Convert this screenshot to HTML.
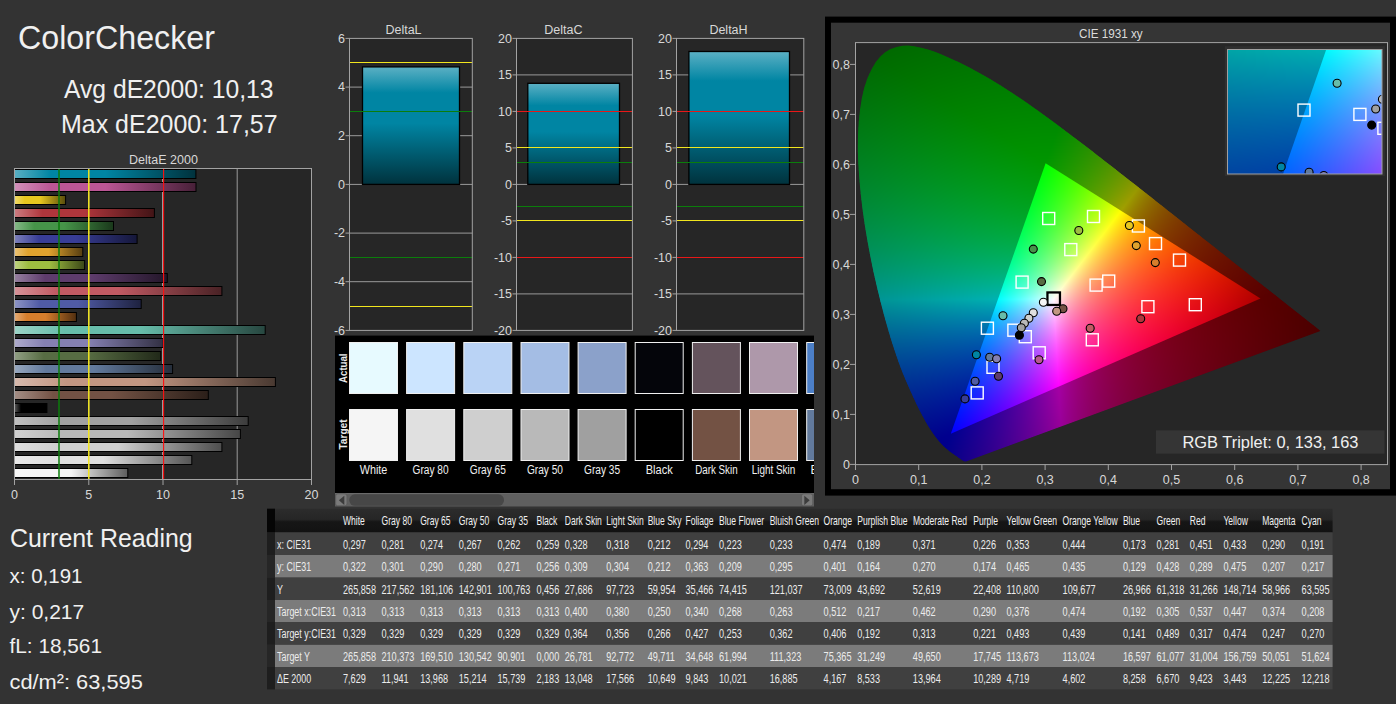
<!DOCTYPE html>
<html><head><meta charset="utf-8"><title>ColorChecker</title>
<style>
html,body{margin:0;padding:0;background:#333333;overflow:hidden;}
body{width:1396px;height:704px;position:relative;font-family:"Liberation Sans", sans-serif;}
svg{position:absolute;left:0;top:0;font-family:"Liberation Sans", sans-serif;}
canvas{position:absolute;}
</style></head><body>
<svg width="1396" height="704" viewBox="0 0 1396 704"><defs><linearGradient id="gb0" x1="0" x2="1" y1="0" y2="0"><stop offset="0" stop-color="#59afc3"/><stop offset="0.2" stop-color="#0085a3"/><stop offset="0.5" stop-color="#0085a3"/><stop offset="1" stop-color="#00323d"/></linearGradient><linearGradient id="gb1" x1="0" x2="1" y1="0" y2="0"><stop offset="0" stop-color="#d291ba"/><stop offset="0.2" stop-color="#bb5695"/><stop offset="0.5" stop-color="#bb5695"/><stop offset="1" stop-color="#472038"/></linearGradient><linearGradient id="gb2" x1="0" x2="1" y1="0" y2="0"><stop offset="0" stop-color="#efda6d"/><stop offset="0.2" stop-color="#e7c71f"/><stop offset="0.5" stop-color="#e7c71f"/><stop offset="1" stop-color="#574b0b"/></linearGradient><linearGradient id="gb3" x1="0" x2="1" y1="0" y2="0"><stop offset="0" stop-color="#cb7c80"/><stop offset="0.2" stop-color="#af363c"/><stop offset="0.5" stop-color="#af363c"/><stop offset="1" stop-color="#421416"/></linearGradient><linearGradient id="gb4" x1="0" x2="1" y1="0" y2="0"><stop offset="0" stop-color="#86b988"/><stop offset="0.2" stop-color="#469449"/><stop offset="0.5" stop-color="#469449"/><stop offset="1" stop-color="#1a381b"/></linearGradient><linearGradient id="gb5" x1="0" x2="1" y1="0" y2="0"><stop offset="0" stop-color="#7d80ba"/><stop offset="0.2" stop-color="#383d96"/><stop offset="0.5" stop-color="#383d96"/><stop offset="1" stop-color="#151739"/></linearGradient><linearGradient id="gb6" x1="0" x2="1" y1="0" y2="0"><stop offset="0" stop-color="#eac377"/><stop offset="0.2" stop-color="#e0a32e"/><stop offset="0.5" stop-color="#e0a32e"/><stop offset="1" stop-color="#553d11"/></linearGradient><linearGradient id="gb7" x1="0" x2="1" y1="0" y2="0"><stop offset="0" stop-color="#bfd382"/><stop offset="0.2" stop-color="#9dbc40"/><stop offset="0.5" stop-color="#9dbc40"/><stop offset="1" stop-color="#3b4718"/></linearGradient><linearGradient id="gb8" x1="0" x2="1" y1="0" y2="0"><stop offset="0" stop-color="#96809f"/><stop offset="0.2" stop-color="#5e3c6c"/><stop offset="0.5" stop-color="#5e3c6c"/><stop offset="1" stop-color="#231629"/></linearGradient><linearGradient id="gb9" x1="0" x2="1" y1="0" y2="0"><stop offset="0" stop-color="#d69399"/><stop offset="0.2" stop-color="#c15a63"/><stop offset="0.5" stop-color="#c15a63"/><stop offset="1" stop-color="#492225"/></linearGradient><linearGradient id="gb10" x1="0" x2="1" y1="0" y2="0"><stop offset="0" stop-color="#8d94c5"/><stop offset="0.2" stop-color="#505ba6"/><stop offset="0.5" stop-color="#505ba6"/><stop offset="1" stop-color="#1e223f"/></linearGradient><linearGradient id="gb11" x1="0" x2="1" y1="0" y2="0"><stop offset="0" stop-color="#e4ab75"/><stop offset="0.2" stop-color="#d67e2c"/><stop offset="0.5" stop-color="#d67e2c"/><stop offset="1" stop-color="#512f10"/></linearGradient><linearGradient id="gb12" x1="0" x2="1" y1="0" y2="0"><stop offset="0" stop-color="#9cd4c7"/><stop offset="0.2" stop-color="#67bdaa"/><stop offset="0.5" stop-color="#67bdaa"/><stop offset="1" stop-color="#274740"/></linearGradient><linearGradient id="gb13" x1="0" x2="1" y1="0" y2="0"><stop offset="0" stop-color="#afaccc"/><stop offset="0.2" stop-color="#8580b1"/><stop offset="0.5" stop-color="#8580b1"/><stop offset="1" stop-color="#323043"/></linearGradient><linearGradient id="gb14" x1="0" x2="1" y1="0" y2="0"><stop offset="0" stop-color="#919f84"/><stop offset="0.2" stop-color="#576c43"/><stop offset="0.5" stop-color="#576c43"/><stop offset="1" stop-color="#212919"/></linearGradient><linearGradient id="gb15" x1="0" x2="1" y1="0" y2="0"><stop offset="0" stop-color="#98a8bf"/><stop offset="0.2" stop-color="#627a9d"/><stop offset="0.5" stop-color="#627a9d"/><stop offset="1" stop-color="#252e3b"/></linearGradient><linearGradient id="gb16" x1="0" x2="1" y1="0" y2="0"><stop offset="0" stop-color="#d7baad"/><stop offset="0.2" stop-color="#c29682"/><stop offset="0.5" stop-color="#c29682"/><stop offset="1" stop-color="#493931"/></linearGradient><linearGradient id="gb17" x1="0" x2="1" y1="0" y2="0"><stop offset="0" stop-color="#a48e85"/><stop offset="0.2" stop-color="#735244"/><stop offset="0.5" stop-color="#735244"/><stop offset="1" stop-color="#2b1f19"/></linearGradient><linearGradient id="gb18" x1="0" x2="1" y1="0" y2="0"><stop offset="0" stop-color="#595959"/><stop offset="0.2" stop-color="#000000"/><stop offset="0.5" stop-color="#000000"/><stop offset="1" stop-color="#000000"/></linearGradient><linearGradient id="gb19" x1="0" x2="1" y1="0" y2="0"><stop offset="0" stop-color="#c1c1c1"/><stop offset="0.2" stop-color="#a0a0a0"/><stop offset="0.5" stop-color="#a0a0a0"/><stop offset="1" stop-color="#3c3c3c"/></linearGradient><linearGradient id="gb20" x1="0" x2="1" y1="0" y2="0"><stop offset="0" stop-color="#d1d1d1"/><stop offset="0.2" stop-color="#b9b9b9"/><stop offset="0.5" stop-color="#b9b9b9"/><stop offset="1" stop-color="#464646"/></linearGradient><linearGradient id="gb21" x1="0" x2="1" y1="0" y2="0"><stop offset="0" stop-color="#dfdfdf"/><stop offset="0.2" stop-color="#cfcfcf"/><stop offset="0.5" stop-color="#cfcfcf"/><stop offset="1" stop-color="#4e4e4e"/></linearGradient><linearGradient id="gb22" x1="0" x2="1" y1="0" y2="0"><stop offset="0" stop-color="#eaeaea"/><stop offset="0.2" stop-color="#e0e0e0"/><stop offset="0.5" stop-color="#e0e0e0"/><stop offset="1" stop-color="#555555"/></linearGradient><linearGradient id="gb23" x1="0" x2="1" y1="0" y2="0"><stop offset="0" stop-color="#f8f8f8"/><stop offset="0.2" stop-color="#f5f5f5"/><stop offset="0.5" stop-color="#f5f5f5"/><stop offset="1" stop-color="#5d5d5d"/></linearGradient><linearGradient id="gv" x1="0" x2="0" y1="0" y2="1"><stop offset="0" stop-color="#5bb0c4"/><stop offset="0.22" stop-color="#0085a3"/><stop offset="0.48" stop-color="#0085a3"/><stop offset="1" stop-color="#00323d"/></linearGradient><clipPath id="swclip"><rect x="335" y="335.6" width="479" height="158"/></clipPath><linearGradient id="gh" x1="0" x2="0" y1="0" y2="1"><stop offset="0" stop-color="#2c2c2c"/><stop offset="0.45" stop-color="#262626"/><stop offset="0.55" stop-color="#161616"/><stop offset="1" stop-color="#121212"/></linearGradient></defs>
<text x="18" y="49" font-size="33" textLength="197" lengthAdjust="spacingAndGlyphs" fill="#f0f0f0">ColorChecker</text>
<text x="64" y="97.8" font-size="25" textLength="209.5" lengthAdjust="spacingAndGlyphs" fill="#f0f0f0">Avg dE2000: 10,13</text>
<text x="61" y="132.8" font-size="25" textLength="216.6" lengthAdjust="spacingAndGlyphs" fill="#f0f0f0">Max dE2000: 17,57</text>
<text x="163.5" y="164" font-size="12.5" text-anchor="middle" fill="#d8d8d8">DeltaE 2000</text>
<rect x="14" y="168" width="298" height="311" fill="#262626"/>
<line x1="88.8" y1="168" x2="88.8" y2="479" stroke="#9a9a9a" stroke-width="1"/>
<line x1="162.5" y1="168" x2="162.5" y2="479" stroke="#9a9a9a" stroke-width="1"/>
<line x1="237.2" y1="168" x2="237.2" y2="479" stroke="#9a9a9a" stroke-width="1"/>
<rect x="14.5" y="169.5" width="181.4" height="9" fill="url(#gb0)" stroke="#000" stroke-width="1"/>
<rect x="14.5" y="182.5" width="181.5" height="9" fill="url(#gb1)" stroke="#000" stroke-width="1"/>
<rect x="14.5" y="195.5" width="51.1" height="9" fill="url(#gb2)" stroke="#000" stroke-width="1"/>
<rect x="14.5" y="208.5" width="139.9" height="9" fill="url(#gb3)" stroke="#000" stroke-width="1"/>
<rect x="14.5" y="221.5" width="99.0" height="9" fill="url(#gb4)" stroke="#000" stroke-width="1"/>
<rect x="14.5" y="234.5" width="122.6" height="9" fill="url(#gb5)" stroke="#000" stroke-width="1"/>
<rect x="14.5" y="247.5" width="68.3" height="9" fill="url(#gb6)" stroke="#000" stroke-width="1"/>
<rect x="14.5" y="260.5" width="70.1" height="9" fill="url(#gb7)" stroke="#000" stroke-width="1"/>
<rect x="14.5" y="273.5" width="152.8" height="9" fill="url(#gb8)" stroke="#000" stroke-width="1"/>
<rect x="14.5" y="286.5" width="207.4" height="9" fill="url(#gb9)" stroke="#000" stroke-width="1"/>
<rect x="14.5" y="299.5" width="126.7" height="9" fill="url(#gb10)" stroke="#000" stroke-width="1"/>
<rect x="14.5" y="312.5" width="61.9" height="9" fill="url(#gb11)" stroke="#000" stroke-width="1"/>
<rect x="14.5" y="325.5" width="250.7" height="9" fill="url(#gb12)" stroke="#000" stroke-width="1"/>
<rect x="14.5" y="338.5" width="148.8" height="9" fill="url(#gb13)" stroke="#000" stroke-width="1"/>
<rect x="14.5" y="351.5" width="146.2" height="9" fill="url(#gb14)" stroke="#000" stroke-width="1"/>
<rect x="14.5" y="364.5" width="158.1" height="9" fill="url(#gb15)" stroke="#000" stroke-width="1"/>
<rect x="14.5" y="377.5" width="260.9" height="9" fill="url(#gb16)" stroke="#000" stroke-width="1"/>
<rect x="14.5" y="390.5" width="193.8" height="9" fill="url(#gb17)" stroke="#000" stroke-width="1"/>
<rect x="14.5" y="403.5" width="32.4" height="9" fill="url(#gb18)" stroke="#000" stroke-width="1"/>
<rect x="14.5" y="416.5" width="233.7" height="9" fill="url(#gb19)" stroke="#000" stroke-width="1"/>
<rect x="14.5" y="429.5" width="225.9" height="9" fill="url(#gb20)" stroke="#000" stroke-width="1"/>
<rect x="14.5" y="442.5" width="207.4" height="9" fill="url(#gb21)" stroke="#000" stroke-width="1"/>
<rect x="14.5" y="455.5" width="177.3" height="9" fill="url(#gb22)" stroke="#000" stroke-width="1"/>
<rect x="14.5" y="468.5" width="113.3" height="9" fill="url(#gb23)" stroke="#000" stroke-width="1"/>
<line x1="59.0" y1="168" x2="59.0" y2="479" stroke="#0b7d0b" stroke-width="1.5"/>
<line x1="88.8" y1="168" x2="88.8" y2="479" stroke="#f2e61e" stroke-width="1.5"/>
<line x1="163.6" y1="168" x2="163.6" y2="479" stroke="#ff1010" stroke-width="1.1"/>
<rect x="14.5" y="168.5" width="297" height="311" fill="none" stroke="#a3a3a3" stroke-width="1"/>
<line x1="14.5" y1="479" x2="14.5" y2="485" stroke="#a3a3a3" stroke-width="1"/>
<text x="14.5" y="498.8" font-size="12.5" text-anchor="middle" fill="#d8d8d8">0</text>
<line x1="88.8" y1="479" x2="88.8" y2="485" stroke="#a3a3a3" stroke-width="1"/>
<text x="88.8" y="498.8" font-size="12.5" text-anchor="middle" fill="#d8d8d8">5</text>
<line x1="163.0" y1="479" x2="163.0" y2="485" stroke="#a3a3a3" stroke-width="1"/>
<text x="163.0" y="498.8" font-size="12.5" text-anchor="middle" fill="#d8d8d8">10</text>
<line x1="237.2" y1="479" x2="237.2" y2="485" stroke="#a3a3a3" stroke-width="1"/>
<text x="237.2" y="498.8" font-size="12.5" text-anchor="middle" fill="#d8d8d8">15</text>
<line x1="311.5" y1="479" x2="311.5" y2="485" stroke="#a3a3a3" stroke-width="1"/>
<text x="311.5" y="498.8" font-size="12.5" text-anchor="middle" fill="#d8d8d8">20</text>
<text x="403.5" y="34.2" font-size="12.5" text-anchor="middle" fill="#d8d8d8">DeltaL</text>
<rect x="349.5" y="38.4" width="122.8" height="292.0" fill="#262626"/>
<line x1="349.5" y1="135.7" x2="472.3" y2="135.7" stroke="#9a9a9a" stroke-width="1"/>
<line x1="349.5" y1="87.1" x2="472.3" y2="87.1" stroke="#9a9a9a" stroke-width="1"/>
<line x1="349.5" y1="184.4" x2="472.3" y2="184.4" stroke="#9a9a9a" stroke-width="1"/>
<line x1="349.5" y1="233.1" x2="472.3" y2="233.1" stroke="#9a9a9a" stroke-width="1"/>
<line x1="349.5" y1="281.7" x2="472.3" y2="281.7" stroke="#9a9a9a" stroke-width="1"/>
<rect x="362.5" y="66.9" width="97.0" height="117.5" fill="url(#gv)" stroke="#000" stroke-width="1.3"/>
<line x1="349.5" y1="62.5" x2="472.3" y2="62.5" stroke="#f2e61e" stroke-width="1.2"/>
<line x1="349.5" y1="306.5" x2="472.3" y2="306.5" stroke="#f2e61e" stroke-width="1.2"/>
<line x1="349.5" y1="111.5" x2="472.3" y2="111.5" stroke="#0b7d0b" stroke-width="1.2"/>
<line x1="349.5" y1="257.5" x2="472.3" y2="257.5" stroke="#0b7d0b" stroke-width="1.2"/>
<rect x="349.5" y="38.4" width="122.8" height="292.0" fill="none" stroke="#a3a3a3" stroke-width="1"/>
<line x1="345.5" y1="38.4" x2="349.5" y2="38.4" stroke="#a3a3a3" stroke-width="1"/>
<text x="345.0" y="42.7" font-size="12.5" text-anchor="end" fill="#d8d8d8">6</text>
<line x1="345.5" y1="87.1" x2="349.5" y2="87.1" stroke="#a3a3a3" stroke-width="1"/>
<text x="345.0" y="91.4" font-size="12.5" text-anchor="end" fill="#d8d8d8">4</text>
<line x1="345.5" y1="135.7" x2="349.5" y2="135.7" stroke="#a3a3a3" stroke-width="1"/>
<text x="345.0" y="140.0" font-size="12.5" text-anchor="end" fill="#d8d8d8">2</text>
<line x1="345.5" y1="184.4" x2="349.5" y2="184.4" stroke="#a3a3a3" stroke-width="1"/>
<text x="345.0" y="188.7" font-size="12.5" text-anchor="end" fill="#d8d8d8">0</text>
<line x1="345.5" y1="233.1" x2="349.5" y2="233.1" stroke="#a3a3a3" stroke-width="1"/>
<text x="345.0" y="237.4" font-size="12.5" text-anchor="end" fill="#d8d8d8">-2</text>
<line x1="345.5" y1="281.7" x2="349.5" y2="281.7" stroke="#a3a3a3" stroke-width="1"/>
<text x="345.0" y="286.0" font-size="12.5" text-anchor="end" fill="#d8d8d8">-4</text>
<line x1="345.5" y1="330.4" x2="349.5" y2="330.4" stroke="#a3a3a3" stroke-width="1"/>
<text x="345.0" y="334.7" font-size="12.5" text-anchor="end" fill="#d8d8d8">-6</text>
<text x="563.4" y="34.2" font-size="12.5" text-anchor="middle" fill="#d8d8d8">DeltaC</text>
<rect x="516.5" y="38.4" width="115.9" height="292.0" fill="#262626"/>
<line x1="516.5" y1="74.9" x2="632.4" y2="74.9" stroke="#9a9a9a" stroke-width="1"/>
<line x1="516.5" y1="184.4" x2="632.4" y2="184.4" stroke="#9a9a9a" stroke-width="1"/>
<line x1="516.5" y1="293.9" x2="632.4" y2="293.9" stroke="#9a9a9a" stroke-width="1"/>
<rect x="527.8" y="83.3" width="91.7" height="101.1" fill="url(#gv)" stroke="#000" stroke-width="1.3"/>
<line x1="516.5" y1="111.5" x2="632.4" y2="111.5" stroke="#e81818" stroke-width="1.2"/>
<line x1="516.5" y1="257.5" x2="632.4" y2="257.5" stroke="#e81818" stroke-width="1.2"/>
<line x1="516.5" y1="147.5" x2="632.4" y2="147.5" stroke="#f2e61e" stroke-width="1.2"/>
<line x1="516.5" y1="220.5" x2="632.4" y2="220.5" stroke="#f2e61e" stroke-width="1.2"/>
<line x1="516.5" y1="162.5" x2="632.4" y2="162.5" stroke="#0b7d0b" stroke-width="1.2"/>
<line x1="516.5" y1="206.5" x2="632.4" y2="206.5" stroke="#0b7d0b" stroke-width="1.2"/>
<rect x="516.5" y="38.4" width="115.9" height="292.0" fill="none" stroke="#a3a3a3" stroke-width="1"/>
<line x1="512.5" y1="38.4" x2="516.5" y2="38.4" stroke="#a3a3a3" stroke-width="1"/>
<text x="512.0" y="42.7" font-size="12.5" text-anchor="end" fill="#d8d8d8">20</text>
<line x1="512.5" y1="74.9" x2="516.5" y2="74.9" stroke="#a3a3a3" stroke-width="1"/>
<text x="512.0" y="79.2" font-size="12.5" text-anchor="end" fill="#d8d8d8">15</text>
<line x1="512.5" y1="111.4" x2="516.5" y2="111.4" stroke="#a3a3a3" stroke-width="1"/>
<text x="512.0" y="115.7" font-size="12.5" text-anchor="end" fill="#d8d8d8">10</text>
<line x1="512.5" y1="147.9" x2="516.5" y2="147.9" stroke="#a3a3a3" stroke-width="1"/>
<text x="512.0" y="152.2" font-size="12.5" text-anchor="end" fill="#d8d8d8">5</text>
<line x1="512.5" y1="184.4" x2="516.5" y2="184.4" stroke="#a3a3a3" stroke-width="1"/>
<text x="512.0" y="188.7" font-size="12.5" text-anchor="end" fill="#d8d8d8">0</text>
<line x1="512.5" y1="220.9" x2="516.5" y2="220.9" stroke="#a3a3a3" stroke-width="1"/>
<text x="512.0" y="225.2" font-size="12.5" text-anchor="end" fill="#d8d8d8">-5</text>
<line x1="512.5" y1="257.4" x2="516.5" y2="257.4" stroke="#a3a3a3" stroke-width="1"/>
<text x="512.0" y="261.7" font-size="12.5" text-anchor="end" fill="#d8d8d8">-10</text>
<line x1="512.5" y1="293.9" x2="516.5" y2="293.9" stroke="#a3a3a3" stroke-width="1"/>
<text x="512.0" y="298.2" font-size="12.5" text-anchor="end" fill="#d8d8d8">-15</text>
<line x1="512.5" y1="330.4" x2="516.5" y2="330.4" stroke="#a3a3a3" stroke-width="1"/>
<text x="512.0" y="334.7" font-size="12.5" text-anchor="end" fill="#d8d8d8">-20</text>
<text x="728.5" y="34.2" font-size="12.5" text-anchor="middle" fill="#d8d8d8">DeltaH</text>
<rect x="676.5" y="38.4" width="127.3" height="292.0" fill="#262626"/>
<line x1="676.5" y1="74.9" x2="803.8" y2="74.9" stroke="#9a9a9a" stroke-width="1"/>
<line x1="676.5" y1="184.4" x2="803.8" y2="184.4" stroke="#9a9a9a" stroke-width="1"/>
<line x1="676.5" y1="293.9" x2="803.8" y2="293.9" stroke="#9a9a9a" stroke-width="1"/>
<rect x="688.9" y="51.5" width="100.6" height="132.9" fill="url(#gv)" stroke="#000" stroke-width="1.3"/>
<line x1="676.5" y1="111.5" x2="803.8" y2="111.5" stroke="#e81818" stroke-width="1.2"/>
<line x1="676.5" y1="257.5" x2="803.8" y2="257.5" stroke="#e81818" stroke-width="1.2"/>
<line x1="676.5" y1="147.5" x2="803.8" y2="147.5" stroke="#f2e61e" stroke-width="1.2"/>
<line x1="676.5" y1="220.5" x2="803.8" y2="220.5" stroke="#f2e61e" stroke-width="1.2"/>
<line x1="676.5" y1="162.5" x2="803.8" y2="162.5" stroke="#0b7d0b" stroke-width="1.2"/>
<line x1="676.5" y1="206.5" x2="803.8" y2="206.5" stroke="#0b7d0b" stroke-width="1.2"/>
<rect x="676.5" y="38.4" width="127.3" height="292.0" fill="none" stroke="#a3a3a3" stroke-width="1"/>
<line x1="672.5" y1="38.4" x2="676.5" y2="38.4" stroke="#a3a3a3" stroke-width="1"/>
<text x="672.0" y="42.7" font-size="12.5" text-anchor="end" fill="#d8d8d8">20</text>
<line x1="672.5" y1="74.9" x2="676.5" y2="74.9" stroke="#a3a3a3" stroke-width="1"/>
<text x="672.0" y="79.2" font-size="12.5" text-anchor="end" fill="#d8d8d8">15</text>
<line x1="672.5" y1="111.4" x2="676.5" y2="111.4" stroke="#a3a3a3" stroke-width="1"/>
<text x="672.0" y="115.7" font-size="12.5" text-anchor="end" fill="#d8d8d8">10</text>
<line x1="672.5" y1="147.9" x2="676.5" y2="147.9" stroke="#a3a3a3" stroke-width="1"/>
<text x="672.0" y="152.2" font-size="12.5" text-anchor="end" fill="#d8d8d8">5</text>
<line x1="672.5" y1="184.4" x2="676.5" y2="184.4" stroke="#a3a3a3" stroke-width="1"/>
<text x="672.0" y="188.7" font-size="12.5" text-anchor="end" fill="#d8d8d8">0</text>
<line x1="672.5" y1="220.9" x2="676.5" y2="220.9" stroke="#a3a3a3" stroke-width="1"/>
<text x="672.0" y="225.2" font-size="12.5" text-anchor="end" fill="#d8d8d8">-5</text>
<line x1="672.5" y1="257.4" x2="676.5" y2="257.4" stroke="#a3a3a3" stroke-width="1"/>
<text x="672.0" y="261.7" font-size="12.5" text-anchor="end" fill="#d8d8d8">-10</text>
<line x1="672.5" y1="293.9" x2="676.5" y2="293.9" stroke="#a3a3a3" stroke-width="1"/>
<text x="672.0" y="298.2" font-size="12.5" text-anchor="end" fill="#d8d8d8">-15</text>
<line x1="672.5" y1="330.4" x2="676.5" y2="330.4" stroke="#a3a3a3" stroke-width="1"/>
<text x="672.0" y="334.7" font-size="12.5" text-anchor="end" fill="#d8d8d8">-20</text>
<rect x="335" y="335.6" width="479" height="158" fill="#000"/>
<text transform="translate(346.6,368.2) rotate(-90)" font-size="10.5" font-weight="bold" text-anchor="middle" fill="#e8e8e8" textLength="29.5" lengthAdjust="spacingAndGlyphs">Actual</text>
<text transform="translate(346.6,434.5) rotate(-90)" font-size="10.5" font-weight="bold" text-anchor="middle" fill="#e8e8e8" textLength="30.2" lengthAdjust="spacingAndGlyphs">Target</text>
<g clip-path="url(#swclip)">
<rect x="349.5" y="342.5" width="48.0" height="51" fill="#e7faff" stroke="#f0f0f0" stroke-width="1"/>
<rect x="349.5" y="409.5" width="48.0" height="51" fill="#f5f5f5" stroke="#f0f0f0" stroke-width="1"/>
<text x="373.5" y="474" font-size="12" text-anchor="middle" fill="#f0f0f0" textLength="27.6" lengthAdjust="spacingAndGlyphs">White</text>
<rect x="406.6" y="342.5" width="48.0" height="51" fill="#cce5ff" stroke="#f0f0f0" stroke-width="1"/>
<rect x="406.6" y="409.5" width="48.0" height="51" fill="#e0e0e0" stroke="#f0f0f0" stroke-width="1"/>
<text x="430.6" y="474" font-size="12" text-anchor="middle" fill="#f0f0f0" textLength="36" lengthAdjust="spacingAndGlyphs">Gray 80</text>
<rect x="463.8" y="342.5" width="48.0" height="51" fill="#bad3f5" stroke="#f0f0f0" stroke-width="1"/>
<rect x="463.8" y="409.5" width="48.0" height="51" fill="#cfcfcf" stroke="#f0f0f0" stroke-width="1"/>
<text x="487.8" y="474" font-size="12" text-anchor="middle" fill="#f0f0f0" textLength="36" lengthAdjust="spacingAndGlyphs">Gray 65</text>
<rect x="521.0" y="342.5" width="48.0" height="51" fill="#a4bde4" stroke="#f0f0f0" stroke-width="1"/>
<rect x="521.0" y="409.5" width="48.0" height="51" fill="#b9b9b9" stroke="#f0f0f0" stroke-width="1"/>
<text x="545.0" y="474" font-size="12" text-anchor="middle" fill="#f0f0f0" textLength="36" lengthAdjust="spacingAndGlyphs">Gray 50</text>
<rect x="578.1" y="342.5" width="48.0" height="51" fill="#8ba1ca" stroke="#f0f0f0" stroke-width="1"/>
<rect x="578.1" y="409.5" width="48.0" height="51" fill="#a0a0a0" stroke="#f0f0f0" stroke-width="1"/>
<text x="602.1" y="474" font-size="12" text-anchor="middle" fill="#f0f0f0" textLength="36" lengthAdjust="spacingAndGlyphs">Gray 35</text>
<rect x="635.2" y="342.5" width="48.0" height="51" fill="#04050a" stroke="#f0f0f0" stroke-width="1"/>
<rect x="635.2" y="409.5" width="48.0" height="51" fill="#000000" stroke="#f0f0f0" stroke-width="1"/>
<text x="659.2" y="474" font-size="12" text-anchor="middle" fill="#f0f0f0" textLength="27" lengthAdjust="spacingAndGlyphs">Black</text>
<rect x="692.4" y="342.5" width="48.0" height="51" fill="#64535c" stroke="#f0f0f0" stroke-width="1"/>
<rect x="692.4" y="409.5" width="48.0" height="51" fill="#735244" stroke="#f0f0f0" stroke-width="1"/>
<text x="716.4" y="474" font-size="12" text-anchor="middle" fill="#f0f0f0" textLength="42.4" lengthAdjust="spacingAndGlyphs">Dark Skin</text>
<rect x="749.5" y="342.5" width="48.0" height="51" fill="#ae98aa" stroke="#f0f0f0" stroke-width="1"/>
<rect x="749.5" y="409.5" width="48.0" height="51" fill="#c29682" stroke="#f0f0f0" stroke-width="1"/>
<text x="773.5" y="474" font-size="12" text-anchor="middle" fill="#f0f0f0" textLength="43.7" lengthAdjust="spacingAndGlyphs">Light Skin</text>
<rect x="806.7" y="342.5" width="48.0" height="51" fill="#4c7fc7" stroke="#f0f0f0" stroke-width="1"/>
<rect x="806.7" y="409.5" width="48.0" height="51" fill="#627a9d" stroke="#f0f0f0" stroke-width="1"/>
<text x="810.5" y="474" font-size="12" fill="#f0f0f0">B</text>
</g>
<rect x="335" y="493" width="479" height="13.5" fill="#5f5f5f"/>
<rect x="335" y="493" width="479" height="1" fill="#6a6a6a"/>
<rect x="349.3" y="494.3" width="154.7" height="11.5" rx="5.5" fill="#474747"/>
<rect x="335.7" y="493.9" width="11.2" height="11.9" rx="2" fill="#7a7a7a" stroke="#555" stroke-width="0.6"/>
<path d="M338.9 500.3 L344.3 495.7 L344.3 505 Z" fill="#3c3c3c"/>
<rect x="801.5" y="493.9" width="11.2" height="11.9" rx="2" fill="#7a7a7a" stroke="#555" stroke-width="0.6"/>
<path d="M809.7 500.3 L804.3 495.7 L804.3 505 Z" fill="#3c3c3c"/>
<rect x="825" y="16.6" width="571" height="479" fill="#000"/>
<rect x="831" y="22.7" width="559" height="466.5" fill="#353535"/>
<rect x="855.5" y="42.6" width="532" height="422" fill="#262626"/>
<text x="1110.8" y="37.7" font-size="12.3" text-anchor="middle" fill="#dcdcdc" textLength="63.7" lengthAdjust="spacingAndGlyphs">CIE 1931 xy</text>
<line x1="855.5" y1="464.5" x2="855.5" y2="470" stroke="#a3a3a3" stroke-width="1"/>
<text x="855.5" y="484.3" font-size="12.5" text-anchor="middle" fill="#d8d8d8">0</text>
<line x1="850" y1="464.4" x2="855.5" y2="464.4" stroke="#a3a3a3" stroke-width="1"/>
<text x="850" y="468.7" font-size="12.5" text-anchor="end" fill="#d8d8d8">0</text>
<line x1="918.7" y1="464.5" x2="918.7" y2="470" stroke="#a3a3a3" stroke-width="1"/>
<text x="918.7" y="484.3" font-size="12.5" text-anchor="middle" fill="#d8d8d8">0,1</text>
<line x1="850" y1="414.4" x2="855.5" y2="414.4" stroke="#a3a3a3" stroke-width="1"/>
<text x="850" y="418.7" font-size="12.5" text-anchor="end" fill="#d8d8d8">0,1</text>
<line x1="981.9" y1="464.5" x2="981.9" y2="470" stroke="#a3a3a3" stroke-width="1"/>
<text x="981.9" y="484.3" font-size="12.5" text-anchor="middle" fill="#d8d8d8">0,2</text>
<line x1="850" y1="364.4" x2="855.5" y2="364.4" stroke="#a3a3a3" stroke-width="1"/>
<text x="850" y="368.7" font-size="12.5" text-anchor="end" fill="#d8d8d8">0,2</text>
<line x1="1045.1" y1="464.5" x2="1045.1" y2="470" stroke="#a3a3a3" stroke-width="1"/>
<text x="1045.1" y="484.3" font-size="12.5" text-anchor="middle" fill="#d8d8d8">0,3</text>
<line x1="850" y1="314.4" x2="855.5" y2="314.4" stroke="#a3a3a3" stroke-width="1"/>
<text x="850" y="318.7" font-size="12.5" text-anchor="end" fill="#d8d8d8">0,3</text>
<line x1="1108.3" y1="464.5" x2="1108.3" y2="470" stroke="#a3a3a3" stroke-width="1"/>
<text x="1108.3" y="484.3" font-size="12.5" text-anchor="middle" fill="#d8d8d8">0,4</text>
<line x1="850" y1="264.4" x2="855.5" y2="264.4" stroke="#a3a3a3" stroke-width="1"/>
<text x="850" y="268.7" font-size="12.5" text-anchor="end" fill="#d8d8d8">0,4</text>
<line x1="1171.5" y1="464.5" x2="1171.5" y2="470" stroke="#a3a3a3" stroke-width="1"/>
<text x="1171.5" y="484.3" font-size="12.5" text-anchor="middle" fill="#d8d8d8">0,5</text>
<line x1="850" y1="214.4" x2="855.5" y2="214.4" stroke="#a3a3a3" stroke-width="1"/>
<text x="850" y="218.7" font-size="12.5" text-anchor="end" fill="#d8d8d8">0,5</text>
<line x1="1234.7" y1="464.5" x2="1234.7" y2="470" stroke="#a3a3a3" stroke-width="1"/>
<text x="1234.7" y="484.3" font-size="12.5" text-anchor="middle" fill="#d8d8d8">0,6</text>
<line x1="850" y1="164.4" x2="855.5" y2="164.4" stroke="#a3a3a3" stroke-width="1"/>
<text x="850" y="168.7" font-size="12.5" text-anchor="end" fill="#d8d8d8">0,6</text>
<line x1="1297.9" y1="464.5" x2="1297.9" y2="470" stroke="#a3a3a3" stroke-width="1"/>
<text x="1297.9" y="484.3" font-size="12.5" text-anchor="middle" fill="#d8d8d8">0,7</text>
<line x1="850" y1="114.4" x2="855.5" y2="114.4" stroke="#a3a3a3" stroke-width="1"/>
<text x="850" y="118.7" font-size="12.5" text-anchor="end" fill="#d8d8d8">0,7</text>
<line x1="1361.1" y1="464.5" x2="1361.1" y2="470" stroke="#a3a3a3" stroke-width="1"/>
<text x="1361.1" y="484.3" font-size="12.5" text-anchor="middle" fill="#d8d8d8">0,8</text>
<line x1="850" y1="64.4" x2="855.5" y2="64.4" stroke="#a3a3a3" stroke-width="1"/>
<text x="850" y="68.7" font-size="12.5" text-anchor="end" fill="#d8d8d8">0,8</text>
<text x="10" y="547" font-size="25" textLength="182.7" lengthAdjust="spacingAndGlyphs" fill="#f0f0f0">Current Reading</text>
<text x="9.5" y="582.5" font-size="21" textLength="73" lengthAdjust="spacingAndGlyphs" fill="#f0f0f0">x: 0,191</text>
<text x="9.5" y="618.5" font-size="21" textLength="74.7" lengthAdjust="spacingAndGlyphs" fill="#f0f0f0">y: 0,217</text>
<text x="9.5" y="653.4" font-size="21" textLength="92.5" lengthAdjust="spacingAndGlyphs" fill="#f0f0f0">fL: 18,561</text>
<text x="9.5" y="688.7" font-size="21" textLength="133.3" lengthAdjust="spacingAndGlyphs" fill="#f0f0f0">cd/m²: 63,595</text>
<rect x="267" y="508.7" width="1065.6" height="23.7" fill="url(#gh)"/>
<rect x="267" y="508.7" width="8" height="23.7" fill="#050505"/>
<rect x="275" y="532.4" width="1057.6" height="22.6" fill="#404040"/>
<rect x="267" y="532.4" width="8" height="22.6" fill="#1e1e1e"/>
<rect x="275" y="555" width="1057.6" height="22.6" fill="#7b7b7b"/>
<rect x="267" y="555" width="8" height="22.6" fill="#262626"/>
<rect x="275" y="577.6" width="1057.6" height="22.4" fill="#404040"/>
<rect x="267" y="577.6" width="8" height="22.4" fill="#1e1e1e"/>
<rect x="275" y="600" width="1057.6" height="22.0" fill="#7b7b7b"/>
<rect x="267" y="600" width="8" height="22.0" fill="#262626"/>
<rect x="275" y="622" width="1057.6" height="22.8" fill="#404040"/>
<rect x="267" y="622" width="8" height="22.8" fill="#1e1e1e"/>
<rect x="275" y="644.8" width="1057.6" height="22.2" fill="#7b7b7b"/>
<rect x="267" y="644.8" width="8" height="22.2" fill="#262626"/>
<rect x="275" y="667" width="1057.6" height="22.4" fill="#404040"/>
<rect x="267" y="667" width="8" height="22.4" fill="#1e1e1e"/>
<g transform="scale(0.685,1)" font-size="12.5">
<text x="500.7" y="525" fill="#f2f2f2">White</text>
<text x="556.9" y="525" fill="#f2f2f2">Gray 80</text>
<text x="613.4" y="525" fill="#f2f2f2">Gray 65</text>
<text x="669.8" y="525" fill="#f2f2f2">Gray 50</text>
<text x="726.3" y="525" fill="#f2f2f2">Gray 35</text>
<text x="783.1" y="525" fill="#f2f2f2">Black</text>
<text x="824.5" y="525" fill="#f2f2f2">Dark Skin</text>
<text x="885.0" y="525" fill="#f2f2f2">Light Skin</text>
<text x="945.5" y="525" fill="#f2f2f2">Blue Sky</text>
<text x="1000.7" y="525" fill="#f2f2f2">Foliage</text>
<text x="1049.6" y="525" fill="#f2f2f2">Blue Flower</text>
<text x="1123.6" y="525" fill="#f2f2f2">Bluish Green</text>
<text x="1202.3" y="525" fill="#f2f2f2">Orange</text>
<text x="1251.4" y="525" fill="#f2f2f2">Purplish Blue</text>
<text x="1332.7" y="525" fill="#f2f2f2">Moderate Red</text>
<text x="1420.7" y="525" fill="#f2f2f2">Purple</text>
<text x="1469.3" y="525" fill="#f2f2f2">Yellow Green</text>
<text x="1551.2" y="525" fill="#f2f2f2">Orange Yellow</text>
<text x="1639.3" y="525" fill="#f2f2f2">Blue</text>
<text x="1688.3" y="525" fill="#f2f2f2">Green</text>
<text x="1736.9" y="525" fill="#f2f2f2">Red</text>
<text x="1786.0" y="525" fill="#f2f2f2">Yellow</text>
<text x="1842.6" y="525" fill="#f2f2f2">Magenta</text>
<text x="1900.1" y="525" fill="#f2f2f2">Cyan</text>
</g><g transform="scale(0.662,1)" font-size="13.5">
<text x="418.4" y="548.6" fill="#ececec">x: CIE31</text>
<text x="418.4" y="571.2" fill="#ececec">y: CIE31</text>
<text x="418.4" y="593.7" fill="#ececec">Y</text>
<text x="418.4" y="615.9" fill="#ececec">Target x:CIE31</text>
<text x="418.4" y="638.3" fill="#ececec">Target y:CIE31</text>
<text x="418.4" y="660.8" fill="#ececec">Target Y</text>
<text x="418.4" y="683.1" fill="#ececec">ΔE 2000</text>
</g><g transform="scale(0.676,1)" font-size="13.5">
<text x="507.4" y="548.6" fill="#ececec">0,297</text>
<text x="564.3" y="548.6" fill="#ececec">0,281</text>
<text x="621.6" y="548.6" fill="#ececec">0,274</text>
<text x="678.7" y="548.6" fill="#ececec">0,267</text>
<text x="735.9" y="548.6" fill="#ececec">0,262</text>
<text x="793.5" y="548.6" fill="#ececec">0,259</text>
<text x="835.5" y="548.6" fill="#ececec">0,328</text>
<text x="896.7" y="548.6" fill="#ececec">0,318</text>
<text x="958.1" y="548.6" fill="#ececec">0,212</text>
<text x="1014.1" y="548.6" fill="#ececec">0,294</text>
<text x="1063.6" y="548.6" fill="#ececec">0,223</text>
<text x="1138.6" y="548.6" fill="#ececec">0,233</text>
<text x="1218.3" y="548.6" fill="#ececec">0,474</text>
<text x="1268.0" y="548.6" fill="#ececec">0,189</text>
<text x="1350.4" y="548.6" fill="#ececec">0,371</text>
<text x="1439.6" y="548.6" fill="#ececec">0,226</text>
<text x="1488.9" y="548.6" fill="#ececec">0,353</text>
<text x="1571.9" y="548.6" fill="#ececec">0,444</text>
<text x="1661.1" y="548.6" fill="#ececec">0,173</text>
<text x="1710.8" y="548.6" fill="#ececec">0,281</text>
<text x="1760.1" y="548.6" fill="#ececec">0,451</text>
<text x="1809.8" y="548.6" fill="#ececec">0,433</text>
<text x="1867.2" y="548.6" fill="#ececec">0,290</text>
<text x="1925.4" y="548.6" fill="#ececec">0,191</text>
<text x="507.4" y="571.2" fill="#ececec">0,322</text>
<text x="564.3" y="571.2" fill="#ececec">0,301</text>
<text x="621.6" y="571.2" fill="#ececec">0,290</text>
<text x="678.7" y="571.2" fill="#ececec">0,280</text>
<text x="735.9" y="571.2" fill="#ececec">0,271</text>
<text x="793.5" y="571.2" fill="#ececec">0,256</text>
<text x="835.5" y="571.2" fill="#ececec">0,309</text>
<text x="896.7" y="571.2" fill="#ececec">0,304</text>
<text x="958.1" y="571.2" fill="#ececec">0,212</text>
<text x="1014.1" y="571.2" fill="#ececec">0,363</text>
<text x="1063.6" y="571.2" fill="#ececec">0,209</text>
<text x="1138.6" y="571.2" fill="#ececec">0,295</text>
<text x="1218.3" y="571.2" fill="#ececec">0,401</text>
<text x="1268.0" y="571.2" fill="#ececec">0,164</text>
<text x="1350.4" y="571.2" fill="#ececec">0,270</text>
<text x="1439.6" y="571.2" fill="#ececec">0,174</text>
<text x="1488.9" y="571.2" fill="#ececec">0,465</text>
<text x="1571.9" y="571.2" fill="#ececec">0,435</text>
<text x="1661.1" y="571.2" fill="#ececec">0,129</text>
<text x="1710.8" y="571.2" fill="#ececec">0,428</text>
<text x="1760.1" y="571.2" fill="#ececec">0,289</text>
<text x="1809.8" y="571.2" fill="#ececec">0,475</text>
<text x="1867.2" y="571.2" fill="#ececec">0,207</text>
<text x="1925.4" y="571.2" fill="#ececec">0,217</text>
<text x="507.4" y="593.7" fill="#ececec">265,858</text>
<text x="564.3" y="593.7" fill="#ececec">217,562</text>
<text x="621.6" y="593.7" fill="#ececec">181,106</text>
<text x="678.7" y="593.7" fill="#ececec">142,901</text>
<text x="735.9" y="593.7" fill="#ececec">100,763</text>
<text x="793.5" y="593.7" fill="#ececec">0,456</text>
<text x="835.5" y="593.7" fill="#ececec">27,686</text>
<text x="896.7" y="593.7" fill="#ececec">97,723</text>
<text x="958.1" y="593.7" fill="#ececec">59,954</text>
<text x="1014.1" y="593.7" fill="#ececec">35,466</text>
<text x="1063.6" y="593.7" fill="#ececec">74,415</text>
<text x="1138.6" y="593.7" fill="#ececec">121,037</text>
<text x="1218.3" y="593.7" fill="#ececec">73,009</text>
<text x="1268.0" y="593.7" fill="#ececec">43,692</text>
<text x="1350.4" y="593.7" fill="#ececec">52,619</text>
<text x="1439.6" y="593.7" fill="#ececec">22,408</text>
<text x="1488.9" y="593.7" fill="#ececec">110,800</text>
<text x="1571.9" y="593.7" fill="#ececec">109,677</text>
<text x="1661.1" y="593.7" fill="#ececec">26,966</text>
<text x="1710.8" y="593.7" fill="#ececec">61,318</text>
<text x="1760.1" y="593.7" fill="#ececec">31,266</text>
<text x="1809.8" y="593.7" fill="#ececec">148,714</text>
<text x="1867.2" y="593.7" fill="#ececec">58,966</text>
<text x="1925.4" y="593.7" fill="#ececec">63,595</text>
<text x="507.4" y="615.9" fill="#ececec">0,313</text>
<text x="564.3" y="615.9" fill="#ececec">0,313</text>
<text x="621.6" y="615.9" fill="#ececec">0,313</text>
<text x="678.7" y="615.9" fill="#ececec">0,313</text>
<text x="735.9" y="615.9" fill="#ececec">0,313</text>
<text x="793.5" y="615.9" fill="#ececec">0,313</text>
<text x="835.5" y="615.9" fill="#ececec">0,400</text>
<text x="896.7" y="615.9" fill="#ececec">0,380</text>
<text x="958.1" y="615.9" fill="#ececec">0,250</text>
<text x="1014.1" y="615.9" fill="#ececec">0,340</text>
<text x="1063.6" y="615.9" fill="#ececec">0,268</text>
<text x="1138.6" y="615.9" fill="#ececec">0,263</text>
<text x="1218.3" y="615.9" fill="#ececec">0,512</text>
<text x="1268.0" y="615.9" fill="#ececec">0,217</text>
<text x="1350.4" y="615.9" fill="#ececec">0,462</text>
<text x="1439.6" y="615.9" fill="#ececec">0,290</text>
<text x="1488.9" y="615.9" fill="#ececec">0,376</text>
<text x="1571.9" y="615.9" fill="#ececec">0,474</text>
<text x="1661.1" y="615.9" fill="#ececec">0,192</text>
<text x="1710.8" y="615.9" fill="#ececec">0,305</text>
<text x="1760.1" y="615.9" fill="#ececec">0,537</text>
<text x="1809.8" y="615.9" fill="#ececec">0,447</text>
<text x="1867.2" y="615.9" fill="#ececec">0,374</text>
<text x="1925.4" y="615.9" fill="#ececec">0,208</text>
<text x="507.4" y="638.3" fill="#ececec">0,329</text>
<text x="564.3" y="638.3" fill="#ececec">0,329</text>
<text x="621.6" y="638.3" fill="#ececec">0,329</text>
<text x="678.7" y="638.3" fill="#ececec">0,329</text>
<text x="735.9" y="638.3" fill="#ececec">0,329</text>
<text x="793.5" y="638.3" fill="#ececec">0,329</text>
<text x="835.5" y="638.3" fill="#ececec">0,364</text>
<text x="896.7" y="638.3" fill="#ececec">0,356</text>
<text x="958.1" y="638.3" fill="#ececec">0,266</text>
<text x="1014.1" y="638.3" fill="#ececec">0,427</text>
<text x="1063.6" y="638.3" fill="#ececec">0,253</text>
<text x="1138.6" y="638.3" fill="#ececec">0,362</text>
<text x="1218.3" y="638.3" fill="#ececec">0,406</text>
<text x="1268.0" y="638.3" fill="#ececec">0,192</text>
<text x="1350.4" y="638.3" fill="#ececec">0,313</text>
<text x="1439.6" y="638.3" fill="#ececec">0,221</text>
<text x="1488.9" y="638.3" fill="#ececec">0,493</text>
<text x="1571.9" y="638.3" fill="#ececec">0,439</text>
<text x="1661.1" y="638.3" fill="#ececec">0,141</text>
<text x="1710.8" y="638.3" fill="#ececec">0,489</text>
<text x="1760.1" y="638.3" fill="#ececec">0,317</text>
<text x="1809.8" y="638.3" fill="#ececec">0,474</text>
<text x="1867.2" y="638.3" fill="#ececec">0,247</text>
<text x="1925.4" y="638.3" fill="#ececec">0,270</text>
<text x="507.4" y="660.8" fill="#ececec">265,858</text>
<text x="564.3" y="660.8" fill="#ececec">210,373</text>
<text x="621.6" y="660.8" fill="#ececec">169,510</text>
<text x="678.7" y="660.8" fill="#ececec">130,542</text>
<text x="735.9" y="660.8" fill="#ececec">90,901</text>
<text x="793.5" y="660.8" fill="#ececec">0,000</text>
<text x="835.5" y="660.8" fill="#ececec">26,781</text>
<text x="896.7" y="660.8" fill="#ececec">92,772</text>
<text x="958.1" y="660.8" fill="#ececec">49,711</text>
<text x="1014.1" y="660.8" fill="#ececec">34,648</text>
<text x="1063.6" y="660.8" fill="#ececec">61,994</text>
<text x="1138.6" y="660.8" fill="#ececec">111,323</text>
<text x="1218.3" y="660.8" fill="#ececec">75,365</text>
<text x="1268.0" y="660.8" fill="#ececec">31,249</text>
<text x="1350.4" y="660.8" fill="#ececec">49,650</text>
<text x="1439.6" y="660.8" fill="#ececec">17,745</text>
<text x="1488.9" y="660.8" fill="#ececec">113,673</text>
<text x="1571.9" y="660.8" fill="#ececec">113,024</text>
<text x="1661.1" y="660.8" fill="#ececec">16,597</text>
<text x="1710.8" y="660.8" fill="#ececec">61,077</text>
<text x="1760.1" y="660.8" fill="#ececec">31,004</text>
<text x="1809.8" y="660.8" fill="#ececec">156,759</text>
<text x="1867.2" y="660.8" fill="#ececec">50,051</text>
<text x="1925.4" y="660.8" fill="#ececec">51,624</text>
<text x="507.4" y="683.1" fill="#ececec">7,629</text>
<text x="564.3" y="683.1" fill="#ececec">11,941</text>
<text x="621.6" y="683.1" fill="#ececec">13,968</text>
<text x="678.7" y="683.1" fill="#ececec">15,214</text>
<text x="735.9" y="683.1" fill="#ececec">15,739</text>
<text x="793.5" y="683.1" fill="#ececec">2,183</text>
<text x="835.5" y="683.1" fill="#ececec">13,048</text>
<text x="896.7" y="683.1" fill="#ececec">17,566</text>
<text x="958.1" y="683.1" fill="#ececec">10,649</text>
<text x="1014.1" y="683.1" fill="#ececec">9,843</text>
<text x="1063.6" y="683.1" fill="#ececec">10,021</text>
<text x="1138.6" y="683.1" fill="#ececec">16,885</text>
<text x="1218.3" y="683.1" fill="#ececec">4,167</text>
<text x="1268.0" y="683.1" fill="#ececec">8,533</text>
<text x="1350.4" y="683.1" fill="#ececec">13,964</text>
<text x="1439.6" y="683.1" fill="#ececec">10,289</text>
<text x="1488.9" y="683.1" fill="#ececec">4,719</text>
<text x="1571.9" y="683.1" fill="#ececec">4,602</text>
<text x="1661.1" y="683.1" fill="#ececec">8,258</text>
<text x="1710.8" y="683.1" fill="#ececec">6,670</text>
<text x="1760.1" y="683.1" fill="#ececec">9,423</text>
<text x="1809.8" y="683.1" fill="#ececec">3,443</text>
<text x="1867.2" y="683.1" fill="#ececec">12,225</text>
<text x="1925.4" y="683.1" fill="#ececec">12,218</text>
</g>
</svg>
<svg width="1396" height="704" viewBox="0 0 1396 704"><defs><clipPath id="fbhs"><path d="M965.5 461.0 L965.5 461.0 L965.5 461.0 L965.5 461.0 L965.5 461.0 L965.4 461.0 L965.4 461.0 L965.4 461.0 L965.3 461.0 L965.3 461.0 L965.3 461.0 L965.3 461.0 L965.2 461.0 L965.2 461.1 L965.1 461.1 L965.1 461.1 L965.0 461.1 L965.0 461.1 L964.9 461.1 L964.9 461.1 L964.8 461.1 L964.8 461.1 L964.7 461.1 L964.7 461.1 L964.6 461.1 L964.5 461.1 L964.4 461.1 L964.4 461.1 L964.3 461.1 L964.2 461.1 L964.1 461.0 L964.0 461.0 L963.8 460.9 L963.7 460.9 L963.5 460.8 L963.3 460.7 L963.1 460.6 L962.9 460.5 L962.7 460.3 L962.5 460.2 L962.2 460.0 L962.0 459.9 L961.7 459.7 L961.3 459.4 L961.0 459.2 L960.6 458.9 L960.2 458.7 L959.8 458.4 L959.4 458.0 L958.9 457.7 L958.4 457.4 L957.9 457.0 L957.3 456.6 L956.7 456.1 L956.0 455.7 L955.2 455.2 L954.5 454.6 L953.7 454.1 L952.8 453.5 L951.9 452.8 L950.9 452.1 L949.9 451.4 L948.8 450.5 L947.7 449.6 L946.5 448.6 L945.3 447.5 L944.0 446.4 L942.6 445.1 L941.1 443.5 L939.5 441.7 L937.8 439.6 L935.9 437.3 L933.9 434.5 L931.8 431.5 L929.6 428.2 L927.3 424.4 L924.8 420.0 L922.1 415.1 L919.3 409.7 L916.3 403.7 L913.2 397.0 L909.8 389.6 L906.3 381.5 L902.6 372.7 L898.9 362.9 L895.2 352.3 L891.5 340.9 L887.8 328.6 L884.2 315.7 L880.6 301.9 L877.0 287.2 L873.5 272.0 L870.4 256.7 L867.5 241.2 L864.8 225.2 L862.5 209.3 L860.7 193.8 L859.3 178.6 L858.3 163.7 L857.8 149.2 L858.0 135.4 L858.7 122.4 L860.0 109.8 L861.8 98.2 L864.3 87.6 L867.4 78.3 L871.2 69.9 L875.5 62.6 L880.1 56.7 L885.1 52.2 L890.7 49.1 L896.5 47.0 L902.5 45.8 L908.6 45.5 L914.9 46.4 L921.3 47.8 L927.7 49.6 L934.1 51.6 L940.5 54.1 L947.0 56.9 L953.3 59.7 L959.4 62.6 L965.5 65.6 L971.5 68.7 L977.4 71.9 L983.3 75.2 L989.1 78.6 L994.9 82.0 L1000.6 85.6 L1006.4 89.2 L1012.1 93.0 L1017.8 96.8 L1023.5 100.6 L1029.2 104.5 L1034.8 108.5 L1040.5 112.6 L1046.1 116.7 L1051.8 120.8 L1057.4 124.9 L1063.0 129.2 L1068.7 133.4 L1074.3 137.7 L1080.0 142.0 L1085.7 146.3 L1091.3 150.6 L1096.9 155.0 L1102.6 159.4 L1108.2 163.7 L1113.8 168.1 L1119.4 172.5 L1125.0 176.9 L1130.6 181.2 L1136.2 185.6 L1141.7 189.9 L1147.2 194.3 L1152.7 198.6 L1158.1 202.9 L1163.5 207.1 L1168.8 211.4 L1174.2 215.6 L1179.4 219.7 L1184.6 223.8 L1189.7 227.9 L1194.8 231.9 L1199.8 235.8 L1204.7 239.7 L1209.6 243.6 L1214.4 247.3 L1219.0 251.0 L1223.6 254.6 L1228.0 258.1 L1232.4 261.5 L1236.5 264.9 L1240.5 268.0 L1244.4 271.1 L1248.1 274.0 L1251.8 276.9 L1255.3 279.7 L1258.7 282.4 L1262.0 285.0 L1265.2 287.4 L1268.2 289.8 L1271.0 292.0 L1273.7 294.1 L1276.3 296.2 L1278.7 298.1 L1281.0 299.9 L1283.2 301.7 L1285.3 303.3 L1287.3 304.9 L1289.1 306.4 L1290.9 307.7 L1292.5 309.0 L1294.1 310.3 L1295.6 311.4 L1297.0 312.5 L1298.3 313.6 L1299.5 314.5 L1300.7 315.5 L1301.8 316.4 L1302.9 317.2 L1303.9 318.0 L1304.9 318.8 L1305.9 319.6 L1306.7 320.3 L1307.6 320.9 L1308.4 321.6 L1309.2 322.2 L1309.9 322.8 L1310.6 323.3 L1311.3 323.8 L1311.9 324.3 L1312.4 324.7 L1313.0 325.1 L1313.5 325.5 L1313.9 325.9 L1314.3 326.2 L1314.7 326.5 L1315.1 326.8 L1315.5 327.1 L1315.8 327.4 L1316.1 327.6 L1316.4 327.8 L1316.6 328.0 L1316.9 328.2 L1317.1 328.4 L1317.2 328.5 L1317.4 328.7 L1317.6 328.8 L1317.7 328.9 L1317.8 329.0 L1318.0 329.1 L1318.1 329.2 L1318.3 329.4 L1318.6 329.6 L1318.8 329.8 L1319.0 329.9 L1319.2 330.1 L1319.5 330.3 L1319.7 330.5 L1319.8 330.6 Z"/></clipPath><clipPath id="fbtr"><path d="M1260.0 298.2 L1045.1 162.9 L950.3 433.4 Z"/></clipPath><clipPath id="fbbx"><rect x="855.5" y="42.6" width="532.0999999999999" height="422.0"/></clipPath><linearGradient id="fbo0" gradientUnits="userSpaceOnUse" x1="855.8" y1="0" x2="1321.8" y2="0"><stop offset="0.000" stop-color="#006500"/><stop offset="0.042" stop-color="#006700"/><stop offset="0.083" stop-color="#006900"/><stop offset="0.125" stop-color="#006b00"/><stop offset="0.167" stop-color="#006d00"/><stop offset="0.208" stop-color="#006f00"/><stop offset="0.250" stop-color="#007000"/><stop offset="0.292" stop-color="#007100"/><stop offset="0.333" stop-color="#007200"/><stop offset="0.375" stop-color="#007200"/><stop offset="0.417" stop-color="#007200"/><stop offset="0.458" stop-color="#007200"/><stop offset="0.500" stop-color="#027200"/><stop offset="0.542" stop-color="#0d7100"/><stop offset="0.583" stop-color="#187000"/><stop offset="0.625" stop-color="#246f00"/><stop offset="0.667" stop-color="#316e00"/><stop offset="0.708" stop-color="#3d6c00"/><stop offset="0.750" stop-color="#4a6a00"/><stop offset="0.792" stop-color="#576800"/><stop offset="0.833" stop-color="#646500"/><stop offset="0.875" stop-color="#5c5000"/><stop offset="0.917" stop-color="#544000"/><stop offset="0.958" stop-color="#4c3300"/><stop offset="1.000" stop-color="#462900"/></linearGradient><linearGradient id="fbo1" gradientUnits="userSpaceOnUse" x1="855.8" y1="0" x2="1321.8" y2="0"><stop offset="0.000" stop-color="#006601"/><stop offset="0.042" stop-color="#006900"/><stop offset="0.083" stop-color="#006b00"/><stop offset="0.125" stop-color="#006d00"/><stop offset="0.167" stop-color="#006f00"/><stop offset="0.208" stop-color="#007000"/><stop offset="0.250" stop-color="#007200"/><stop offset="0.292" stop-color="#007300"/><stop offset="0.333" stop-color="#007300"/><stop offset="0.375" stop-color="#007400"/><stop offset="0.417" stop-color="#007400"/><stop offset="0.458" stop-color="#007400"/><stop offset="0.500" stop-color="#037400"/><stop offset="0.542" stop-color="#0f7300"/><stop offset="0.583" stop-color="#1b7200"/><stop offset="0.625" stop-color="#277100"/><stop offset="0.667" stop-color="#346f00"/><stop offset="0.708" stop-color="#416d00"/><stop offset="0.750" stop-color="#4e6c00"/><stop offset="0.792" stop-color="#5c6900"/><stop offset="0.833" stop-color="#666300"/><stop offset="0.875" stop-color="#5c4e00"/><stop offset="0.917" stop-color="#543e00"/><stop offset="0.958" stop-color="#4d3100"/><stop offset="1.000" stop-color="#462800"/></linearGradient><linearGradient id="fbo2" gradientUnits="userSpaceOnUse" x1="855.8" y1="0" x2="1321.8" y2="0"><stop offset="0.000" stop-color="#006803"/><stop offset="0.042" stop-color="#006a00"/><stop offset="0.083" stop-color="#006c00"/><stop offset="0.125" stop-color="#006f00"/><stop offset="0.167" stop-color="#007000"/><stop offset="0.208" stop-color="#007200"/><stop offset="0.250" stop-color="#007300"/><stop offset="0.292" stop-color="#007400"/><stop offset="0.333" stop-color="#007500"/><stop offset="0.375" stop-color="#007600"/><stop offset="0.417" stop-color="#007600"/><stop offset="0.458" stop-color="#007600"/><stop offset="0.500" stop-color="#047500"/><stop offset="0.542" stop-color="#107500"/><stop offset="0.583" stop-color="#1d7400"/><stop offset="0.625" stop-color="#2a7200"/><stop offset="0.667" stop-color="#377100"/><stop offset="0.708" stop-color="#456f00"/><stop offset="0.750" stop-color="#536d00"/><stop offset="0.792" stop-color="#616b00"/><stop offset="0.833" stop-color="#655f00"/><stop offset="0.875" stop-color="#5c4b00"/><stop offset="0.917" stop-color="#543b00"/><stop offset="0.958" stop-color="#4d3000"/><stop offset="1.000" stop-color="#462600"/></linearGradient><linearGradient id="fbo3" gradientUnits="userSpaceOnUse" x1="855.8" y1="0" x2="1321.8" y2="0"><stop offset="0.000" stop-color="#006904"/><stop offset="0.042" stop-color="#006c02"/><stop offset="0.083" stop-color="#006e00"/><stop offset="0.125" stop-color="#007000"/><stop offset="0.167" stop-color="#007200"/><stop offset="0.208" stop-color="#007400"/><stop offset="0.250" stop-color="#007500"/><stop offset="0.292" stop-color="#007600"/><stop offset="0.333" stop-color="#007700"/><stop offset="0.375" stop-color="#007800"/><stop offset="0.417" stop-color="#007800"/><stop offset="0.458" stop-color="#007800"/><stop offset="0.500" stop-color="#067700"/><stop offset="0.542" stop-color="#127700"/><stop offset="0.583" stop-color="#1f7600"/><stop offset="0.625" stop-color="#2d7400"/><stop offset="0.667" stop-color="#3b7300"/><stop offset="0.708" stop-color="#497100"/><stop offset="0.750" stop-color="#576f00"/><stop offset="0.792" stop-color="#666d00"/><stop offset="0.833" stop-color="#655c00"/><stop offset="0.875" stop-color="#5c4800"/><stop offset="0.917" stop-color="#543900"/><stop offset="0.958" stop-color="#4d2e00"/><stop offset="1.000" stop-color="#472500"/></linearGradient><linearGradient id="fbo4" gradientUnits="userSpaceOnUse" x1="855.8" y1="0" x2="1321.8" y2="0"><stop offset="0.000" stop-color="#006b05"/><stop offset="0.042" stop-color="#006d03"/><stop offset="0.083" stop-color="#007000"/><stop offset="0.125" stop-color="#007200"/><stop offset="0.167" stop-color="#007400"/><stop offset="0.208" stop-color="#007500"/><stop offset="0.250" stop-color="#007700"/><stop offset="0.292" stop-color="#007800"/><stop offset="0.333" stop-color="#007900"/><stop offset="0.375" stop-color="#007900"/><stop offset="0.417" stop-color="#007a00"/><stop offset="0.458" stop-color="#007900"/><stop offset="0.500" stop-color="#077900"/><stop offset="0.542" stop-color="#147800"/><stop offset="0.583" stop-color="#227700"/><stop offset="0.625" stop-color="#307600"/><stop offset="0.667" stop-color="#3e7400"/><stop offset="0.708" stop-color="#4d7300"/><stop offset="0.750" stop-color="#5c7000"/><stop offset="0.792" stop-color="#6c6e00"/><stop offset="0.833" stop-color="#655800"/><stop offset="0.875" stop-color="#5c4500"/><stop offset="0.917" stop-color="#543700"/><stop offset="0.958" stop-color="#4d2d00"/><stop offset="1.000" stop-color="#472400"/></linearGradient><linearGradient id="fbo5" gradientUnits="userSpaceOnUse" x1="855.8" y1="0" x2="1321.8" y2="0"><stop offset="0.000" stop-color="#006c06"/><stop offset="0.042" stop-color="#006f04"/><stop offset="0.083" stop-color="#007102"/><stop offset="0.125" stop-color="#007400"/><stop offset="0.167" stop-color="#007500"/><stop offset="0.208" stop-color="#007700"/><stop offset="0.250" stop-color="#007900"/><stop offset="0.292" stop-color="#007a00"/><stop offset="0.333" stop-color="#007b00"/><stop offset="0.375" stop-color="#007b00"/><stop offset="0.417" stop-color="#007b00"/><stop offset="0.458" stop-color="#007b00"/><stop offset="0.500" stop-color="#097b00"/><stop offset="0.542" stop-color="#177a00"/><stop offset="0.583" stop-color="#257900"/><stop offset="0.625" stop-color="#337800"/><stop offset="0.667" stop-color="#427600"/><stop offset="0.708" stop-color="#527400"/><stop offset="0.750" stop-color="#627200"/><stop offset="0.792" stop-color="#6f6d00"/><stop offset="0.833" stop-color="#655500"/><stop offset="0.875" stop-color="#5c4300"/><stop offset="0.917" stop-color="#553500"/><stop offset="0.958" stop-color="#4e2b00"/><stop offset="1.000" stop-color="#472300"/></linearGradient><linearGradient id="fbo6" gradientUnits="userSpaceOnUse" x1="855.8" y1="0" x2="1321.8" y2="0"><stop offset="0.000" stop-color="#006e07"/><stop offset="0.042" stop-color="#007005"/><stop offset="0.083" stop-color="#007303"/><stop offset="0.125" stop-color="#007500"/><stop offset="0.167" stop-color="#007700"/><stop offset="0.208" stop-color="#007900"/><stop offset="0.250" stop-color="#007a00"/><stop offset="0.292" stop-color="#007c00"/><stop offset="0.333" stop-color="#007c00"/><stop offset="0.375" stop-color="#007d00"/><stop offset="0.417" stop-color="#007d00"/><stop offset="0.458" stop-color="#007d00"/><stop offset="0.500" stop-color="#0b7d00"/><stop offset="0.542" stop-color="#197c00"/><stop offset="0.583" stop-color="#277b00"/><stop offset="0.625" stop-color="#377900"/><stop offset="0.667" stop-color="#467800"/><stop offset="0.708" stop-color="#567600"/><stop offset="0.750" stop-color="#677400"/><stop offset="0.792" stop-color="#6e6800"/><stop offset="0.833" stop-color="#655100"/><stop offset="0.875" stop-color="#5c4000"/><stop offset="0.917" stop-color="#553300"/><stop offset="0.958" stop-color="#4e2a00"/><stop offset="1.000" stop-color="#482200"/></linearGradient><linearGradient id="fbo7" gradientUnits="userSpaceOnUse" x1="855.8" y1="0" x2="1321.8" y2="0"><stop offset="0.000" stop-color="#006f09"/><stop offset="0.042" stop-color="#007207"/><stop offset="0.083" stop-color="#007404"/><stop offset="0.125" stop-color="#007702"/><stop offset="0.167" stop-color="#007900"/><stop offset="0.208" stop-color="#007b00"/><stop offset="0.250" stop-color="#007c00"/><stop offset="0.292" stop-color="#007d00"/><stop offset="0.333" stop-color="#007e00"/><stop offset="0.375" stop-color="#007f00"/><stop offset="0.417" stop-color="#007f00"/><stop offset="0.458" stop-color="#007f00"/><stop offset="0.500" stop-color="#0d7e00"/><stop offset="0.542" stop-color="#1b7e00"/><stop offset="0.583" stop-color="#2b7d00"/><stop offset="0.625" stop-color="#3a7b00"/><stop offset="0.667" stop-color="#4b7900"/><stop offset="0.708" stop-color="#5c7700"/><stop offset="0.750" stop-color="#6d7500"/><stop offset="0.792" stop-color="#6e6400"/><stop offset="0.833" stop-color="#654e00"/><stop offset="0.875" stop-color="#5c3e00"/><stop offset="0.917" stop-color="#553200"/><stop offset="0.958" stop-color="#4e2800"/><stop offset="1.000" stop-color="#482000"/></linearGradient><linearGradient id="fbo8" gradientUnits="userSpaceOnUse" x1="855.8" y1="0" x2="1321.8" y2="0"><stop offset="0.000" stop-color="#00710a"/><stop offset="0.042" stop-color="#007308"/><stop offset="0.083" stop-color="#007606"/><stop offset="0.125" stop-color="#007803"/><stop offset="0.167" stop-color="#007b00"/><stop offset="0.208" stop-color="#007c00"/><stop offset="0.250" stop-color="#007e00"/><stop offset="0.292" stop-color="#007f00"/><stop offset="0.333" stop-color="#008000"/><stop offset="0.375" stop-color="#008100"/><stop offset="0.417" stop-color="#008100"/><stop offset="0.458" stop-color="#008100"/><stop offset="0.500" stop-color="#0f8000"/><stop offset="0.542" stop-color="#1e7f00"/><stop offset="0.583" stop-color="#2e7e00"/><stop offset="0.625" stop-color="#3e7d00"/><stop offset="0.667" stop-color="#4f7b00"/><stop offset="0.708" stop-color="#617900"/><stop offset="0.750" stop-color="#737700"/><stop offset="0.792" stop-color="#6e6000"/><stop offset="0.833" stop-color="#654b00"/><stop offset="0.875" stop-color="#5d3b00"/><stop offset="0.917" stop-color="#553000"/><stop offset="0.958" stop-color="#4f2700"/><stop offset="1.000" stop-color="#481f00"/></linearGradient><linearGradient id="fbo9" gradientUnits="userSpaceOnUse" x1="855.8" y1="0" x2="1321.8" y2="0"><stop offset="0.000" stop-color="#00720c"/><stop offset="0.042" stop-color="#00750a"/><stop offset="0.083" stop-color="#007807"/><stop offset="0.125" stop-color="#007a05"/><stop offset="0.167" stop-color="#007c02"/><stop offset="0.208" stop-color="#007e00"/><stop offset="0.250" stop-color="#008000"/><stop offset="0.292" stop-color="#008100"/><stop offset="0.333" stop-color="#008200"/><stop offset="0.375" stop-color="#008200"/><stop offset="0.417" stop-color="#008300"/><stop offset="0.458" stop-color="#028300"/><stop offset="0.500" stop-color="#118200"/><stop offset="0.542" stop-color="#218100"/><stop offset="0.583" stop-color="#318000"/><stop offset="0.625" stop-color="#427f00"/><stop offset="0.667" stop-color="#547d00"/><stop offset="0.708" stop-color="#677b00"/><stop offset="0.750" stop-color="#787700"/><stop offset="0.792" stop-color="#6d5b00"/><stop offset="0.833" stop-color="#654800"/><stop offset="0.875" stop-color="#5d3900"/><stop offset="0.917" stop-color="#552e00"/><stop offset="0.958" stop-color="#4f2500"/><stop offset="1.000" stop-color="#491e00"/></linearGradient><linearGradient id="fbo10" gradientUnits="userSpaceOnUse" x1="855.8" y1="0" x2="1321.8" y2="0"><stop offset="0.000" stop-color="#00740e"/><stop offset="0.042" stop-color="#00760b"/><stop offset="0.083" stop-color="#007909"/><stop offset="0.125" stop-color="#007c06"/><stop offset="0.167" stop-color="#007e04"/><stop offset="0.208" stop-color="#008000"/><stop offset="0.250" stop-color="#008100"/><stop offset="0.292" stop-color="#008300"/><stop offset="0.333" stop-color="#008400"/><stop offset="0.375" stop-color="#008400"/><stop offset="0.417" stop-color="#008500"/><stop offset="0.458" stop-color="#048400"/><stop offset="0.500" stop-color="#138400"/><stop offset="0.542" stop-color="#248300"/><stop offset="0.583" stop-color="#358200"/><stop offset="0.625" stop-color="#478000"/><stop offset="0.667" stop-color="#597e00"/><stop offset="0.708" stop-color="#6d7c00"/><stop offset="0.750" stop-color="#777100"/><stop offset="0.792" stop-color="#6d5800"/><stop offset="0.833" stop-color="#644500"/><stop offset="0.875" stop-color="#5d3700"/><stop offset="0.917" stop-color="#562c00"/><stop offset="0.958" stop-color="#4f2400"/><stop offset="1.000" stop-color="#491d00"/></linearGradient><linearGradient id="fbo11" gradientUnits="userSpaceOnUse" x1="855.8" y1="0" x2="1321.8" y2="0"><stop offset="0.000" stop-color="#00750f"/><stop offset="0.042" stop-color="#00780d"/><stop offset="0.083" stop-color="#007b0b"/><stop offset="0.125" stop-color="#007d08"/><stop offset="0.167" stop-color="#007f05"/><stop offset="0.208" stop-color="#008102"/><stop offset="0.250" stop-color="#008300"/><stop offset="0.292" stop-color="#008400"/><stop offset="0.333" stop-color="#008600"/><stop offset="0.375" stop-color="#008600"/><stop offset="0.417" stop-color="#008600"/><stop offset="0.458" stop-color="#058600"/><stop offset="0.500" stop-color="#168600"/><stop offset="0.542" stop-color="#278500"/><stop offset="0.583" stop-color="#398400"/><stop offset="0.625" stop-color="#4b8200"/><stop offset="0.667" stop-color="#5f8000"/><stop offset="0.708" stop-color="#737e00"/><stop offset="0.750" stop-color="#776c00"/><stop offset="0.792" stop-color="#6d5400"/><stop offset="0.833" stop-color="#644200"/><stop offset="0.875" stop-color="#5d3500"/><stop offset="0.917" stop-color="#562a00"/><stop offset="0.958" stop-color="#4f2200"/><stop offset="1.000" stop-color="#491c00"/></linearGradient><linearGradient id="fbo12" gradientUnits="userSpaceOnUse" x1="855.8" y1="0" x2="1321.8" y2="0"><stop offset="0.000" stop-color="#007611"/><stop offset="0.042" stop-color="#00790f"/><stop offset="0.083" stop-color="#007c0d"/><stop offset="0.125" stop-color="#007f0a"/><stop offset="0.167" stop-color="#008107"/><stop offset="0.208" stop-color="#008304"/><stop offset="0.250" stop-color="#008500"/><stop offset="0.292" stop-color="#008600"/><stop offset="0.333" stop-color="#008700"/><stop offset="0.375" stop-color="#008800"/><stop offset="0.417" stop-color="#008800"/><stop offset="0.458" stop-color="#078800"/><stop offset="0.500" stop-color="#188800"/><stop offset="0.542" stop-color="#2a8700"/><stop offset="0.583" stop-color="#3d8500"/><stop offset="0.625" stop-color="#508400"/><stop offset="0.667" stop-color="#658200"/><stop offset="0.708" stop-color="#7a8000"/><stop offset="0.750" stop-color="#766700"/><stop offset="0.792" stop-color="#6d5000"/><stop offset="0.833" stop-color="#643f00"/><stop offset="0.875" stop-color="#5d3200"/><stop offset="0.917" stop-color="#562900"/><stop offset="0.958" stop-color="#502100"/><stop offset="1.000" stop-color="#4a1b00"/></linearGradient><linearGradient id="fbo13" gradientUnits="userSpaceOnUse" x1="855.8" y1="0" x2="1321.8" y2="0"><stop offset="0.000" stop-color="#007813"/><stop offset="0.042" stop-color="#007b11"/><stop offset="0.083" stop-color="#007e0f"/><stop offset="0.125" stop-color="#00800c"/><stop offset="0.167" stop-color="#008309"/><stop offset="0.208" stop-color="#008506"/><stop offset="0.250" stop-color="#008702"/><stop offset="0.292" stop-color="#008800"/><stop offset="0.333" stop-color="#008900"/><stop offset="0.375" stop-color="#008a00"/><stop offset="0.417" stop-color="#008a00"/><stop offset="0.458" stop-color="#098a00"/><stop offset="0.500" stop-color="#1b8900"/><stop offset="0.542" stop-color="#2e8800"/><stop offset="0.583" stop-color="#418700"/><stop offset="0.625" stop-color="#568500"/><stop offset="0.667" stop-color="#6b8300"/><stop offset="0.708" stop-color="#818100"/><stop offset="0.750" stop-color="#766200"/><stop offset="0.792" stop-color="#6d4c00"/><stop offset="0.833" stop-color="#643c00"/><stop offset="0.875" stop-color="#5d3000"/><stop offset="0.917" stop-color="#562700"/><stop offset="0.958" stop-color="#501f00"/><stop offset="1.000" stop-color="#4a1900"/></linearGradient><linearGradient id="fbo14" gradientUnits="userSpaceOnUse" x1="855.8" y1="0" x2="1321.8" y2="0"><stop offset="0.000" stop-color="#007915"/><stop offset="0.042" stop-color="#007c13"/><stop offset="0.083" stop-color="#007f11"/><stop offset="0.125" stop-color="#00820e"/><stop offset="0.167" stop-color="#00840b"/><stop offset="0.208" stop-color="#008608"/><stop offset="0.250" stop-color="#008804"/><stop offset="0.292" stop-color="#008a00"/><stop offset="0.333" stop-color="#008b00"/><stop offset="0.375" stop-color="#008c00"/><stop offset="0.417" stop-color="#008c00"/><stop offset="0.458" stop-color="#0c8c00"/><stop offset="0.500" stop-color="#1e8b00"/><stop offset="0.542" stop-color="#318a00"/><stop offset="0.583" stop-color="#468900"/><stop offset="0.625" stop-color="#5b8700"/><stop offset="0.667" stop-color="#718500"/><stop offset="0.708" stop-color="#807b00"/><stop offset="0.750" stop-color="#765e00"/><stop offset="0.792" stop-color="#6d4900"/><stop offset="0.833" stop-color="#643a00"/><stop offset="0.875" stop-color="#5d2e00"/><stop offset="0.917" stop-color="#562500"/><stop offset="0.958" stop-color="#501e00"/><stop offset="1.000" stop-color="#4a1800"/></linearGradient><linearGradient id="fbo15" gradientUnits="userSpaceOnUse" x1="855.8" y1="0" x2="1321.8" y2="0"><stop offset="0.000" stop-color="#007a17"/><stop offset="0.042" stop-color="#007e15"/><stop offset="0.083" stop-color="#008113"/><stop offset="0.125" stop-color="#008310"/><stop offset="0.167" stop-color="#00860d"/><stop offset="0.208" stop-color="#00880a"/><stop offset="0.250" stop-color="#008a06"/><stop offset="0.292" stop-color="#008c02"/><stop offset="0.333" stop-color="#008d00"/><stop offset="0.375" stop-color="#008d00"/><stop offset="0.417" stop-color="#008e00"/><stop offset="0.458" stop-color="#0e8e00"/><stop offset="0.500" stop-color="#218d00"/><stop offset="0.542" stop-color="#368c00"/><stop offset="0.583" stop-color="#4b8b00"/><stop offset="0.625" stop-color="#618900"/><stop offset="0.667" stop-color="#798700"/><stop offset="0.708" stop-color="#807500"/><stop offset="0.750" stop-color="#755900"/><stop offset="0.792" stop-color="#6c4600"/><stop offset="0.833" stop-color="#653700"/><stop offset="0.875" stop-color="#5d2c00"/><stop offset="0.917" stop-color="#572400"/><stop offset="0.958" stop-color="#501d00"/><stop offset="1.000" stop-color="#4a1700"/></linearGradient><linearGradient id="fbo16" gradientUnits="userSpaceOnUse" x1="855.8" y1="0" x2="1321.8" y2="0"><stop offset="0.000" stop-color="#007c19"/><stop offset="0.042" stop-color="#007f17"/><stop offset="0.083" stop-color="#008215"/><stop offset="0.125" stop-color="#008512"/><stop offset="0.167" stop-color="#008710"/><stop offset="0.208" stop-color="#008a0c"/><stop offset="0.250" stop-color="#008c09"/><stop offset="0.292" stop-color="#008d05"/><stop offset="0.333" stop-color="#008e00"/><stop offset="0.375" stop-color="#008f00"/><stop offset="0.417" stop-color="#009000"/><stop offset="0.458" stop-color="#118f00"/><stop offset="0.500" stop-color="#258f00"/><stop offset="0.542" stop-color="#3a8e00"/><stop offset="0.583" stop-color="#508c00"/><stop offset="0.625" stop-color="#688a00"/><stop offset="0.667" stop-color="#808800"/><stop offset="0.708" stop-color="#7f6f00"/><stop offset="0.750" stop-color="#755500"/><stop offset="0.792" stop-color="#6c4200"/><stop offset="0.833" stop-color="#653500"/><stop offset="0.875" stop-color="#5d2a00"/><stop offset="0.917" stop-color="#572200"/><stop offset="0.958" stop-color="#511b00"/><stop offset="1.000" stop-color="#4b1600"/></linearGradient><linearGradient id="fbo17" gradientUnits="userSpaceOnUse" x1="855.8" y1="0" x2="1321.8" y2="0"><stop offset="0.000" stop-color="#007d1c"/><stop offset="0.042" stop-color="#00801a"/><stop offset="0.083" stop-color="#008317"/><stop offset="0.125" stop-color="#008615"/><stop offset="0.167" stop-color="#008912"/><stop offset="0.208" stop-color="#008b0f"/><stop offset="0.250" stop-color="#008d0b"/><stop offset="0.292" stop-color="#008f07"/><stop offset="0.333" stop-color="#009003"/><stop offset="0.375" stop-color="#009100"/><stop offset="0.417" stop-color="#009100"/><stop offset="0.458" stop-color="#139100"/><stop offset="0.500" stop-color="#289100"/><stop offset="0.542" stop-color="#3e8f00"/><stop offset="0.583" stop-color="#568e00"/><stop offset="0.625" stop-color="#6e8c00"/><stop offset="0.667" stop-color="#888a00"/><stop offset="0.708" stop-color="#7f6900"/><stop offset="0.750" stop-color="#755100"/><stop offset="0.792" stop-color="#6c3f00"/><stop offset="0.833" stop-color="#653200"/><stop offset="0.875" stop-color="#5e2800"/><stop offset="0.917" stop-color="#572000"/><stop offset="0.958" stop-color="#511a00"/><stop offset="1.000" stop-color="#4b1500"/></linearGradient><linearGradient id="fbo18" gradientUnits="userSpaceOnUse" x1="855.8" y1="0" x2="1321.8" y2="0"><stop offset="0.000" stop-color="#007e1e"/><stop offset="0.042" stop-color="#00821c"/><stop offset="0.083" stop-color="#00851a"/><stop offset="0.125" stop-color="#008817"/><stop offset="0.167" stop-color="#008b15"/><stop offset="0.208" stop-color="#008d11"/><stop offset="0.250" stop-color="#008f0e"/><stop offset="0.292" stop-color="#00910a"/><stop offset="0.333" stop-color="#009205"/><stop offset="0.375" stop-color="#009300"/><stop offset="0.417" stop-color="#029300"/><stop offset="0.458" stop-color="#169300"/><stop offset="0.500" stop-color="#2c9200"/><stop offset="0.542" stop-color="#439100"/><stop offset="0.583" stop-color="#5c9000"/><stop offset="0.625" stop-color="#768e00"/><stop offset="0.667" stop-color="#8a8500"/><stop offset="0.708" stop-color="#7e6400"/><stop offset="0.750" stop-color="#744d00"/><stop offset="0.792" stop-color="#6c3c00"/><stop offset="0.833" stop-color="#653000"/><stop offset="0.875" stop-color="#5e2600"/><stop offset="0.917" stop-color="#571f00"/><stop offset="0.958" stop-color="#511900"/><stop offset="1.000" stop-color="#4b1400"/></linearGradient><linearGradient id="fbo19" gradientUnits="userSpaceOnUse" x1="855.8" y1="0" x2="1321.8" y2="0"><stop offset="0.000" stop-color="#008021"/><stop offset="0.042" stop-color="#00831f"/><stop offset="0.083" stop-color="#00861d"/><stop offset="0.125" stop-color="#00891a"/><stop offset="0.167" stop-color="#008c17"/><stop offset="0.208" stop-color="#008f14"/><stop offset="0.250" stop-color="#009110"/><stop offset="0.292" stop-color="#00930c"/><stop offset="0.333" stop-color="#009408"/><stop offset="0.375" stop-color="#009503"/><stop offset="0.417" stop-color="#049500"/><stop offset="0.458" stop-color="#1a9500"/><stop offset="0.500" stop-color="#309400"/><stop offset="0.542" stop-color="#499300"/><stop offset="0.583" stop-color="#629100"/><stop offset="0.625" stop-color="#7d8f00"/><stop offset="0.667" stop-color="#897d00"/><stop offset="0.708" stop-color="#7e5e00"/><stop offset="0.750" stop-color="#744900"/><stop offset="0.792" stop-color="#6c3900"/><stop offset="0.833" stop-color="#652d00"/><stop offset="0.875" stop-color="#5e2400"/><stop offset="0.917" stop-color="#571d00"/><stop offset="0.958" stop-color="#511700"/><stop offset="1.000" stop-color="#4b1300"/></linearGradient><linearGradient id="fbo20" gradientUnits="userSpaceOnUse" x1="855.8" y1="0" x2="1321.8" y2="0"><stop offset="0.000" stop-color="#008123"/><stop offset="0.042" stop-color="#008422"/><stop offset="0.083" stop-color="#00881f"/><stop offset="0.125" stop-color="#008b1d"/><stop offset="0.167" stop-color="#008e1a"/><stop offset="0.208" stop-color="#009017"/><stop offset="0.250" stop-color="#009213"/><stop offset="0.292" stop-color="#00940f"/><stop offset="0.333" stop-color="#00960b"/><stop offset="0.375" stop-color="#009706"/><stop offset="0.417" stop-color="#079700"/><stop offset="0.458" stop-color="#1d9700"/><stop offset="0.500" stop-color="#359600"/><stop offset="0.542" stop-color="#4e9500"/><stop offset="0.583" stop-color="#699300"/><stop offset="0.625" stop-color="#869100"/><stop offset="0.667" stop-color="#887600"/><stop offset="0.708" stop-color="#7d5900"/><stop offset="0.750" stop-color="#744500"/><stop offset="0.792" stop-color="#6c3600"/><stop offset="0.833" stop-color="#652b00"/><stop offset="0.875" stop-color="#5e2200"/><stop offset="0.917" stop-color="#581c00"/><stop offset="0.958" stop-color="#511600"/><stop offset="1.000" stop-color="#4c1200"/></linearGradient><linearGradient id="fbo21" gradientUnits="userSpaceOnUse" x1="855.8" y1="0" x2="1321.8" y2="0"><stop offset="0.000" stop-color="#008226"/><stop offset="0.042" stop-color="#008524"/><stop offset="0.083" stop-color="#008922"/><stop offset="0.125" stop-color="#008c20"/><stop offset="0.167" stop-color="#008f1d"/><stop offset="0.208" stop-color="#00921a"/><stop offset="0.250" stop-color="#009416"/><stop offset="0.292" stop-color="#009612"/><stop offset="0.333" stop-color="#00970e"/><stop offset="0.375" stop-color="#009809"/><stop offset="0.417" stop-color="#099903"/><stop offset="0.458" stop-color="#219900"/><stop offset="0.500" stop-color="#3a9800"/><stop offset="0.542" stop-color="#549600"/><stop offset="0.583" stop-color="#719500"/><stop offset="0.625" stop-color="#8f9300"/><stop offset="0.667" stop-color="#877000"/><stop offset="0.708" stop-color="#7d5500"/><stop offset="0.750" stop-color="#744100"/><stop offset="0.792" stop-color="#6c3300"/><stop offset="0.833" stop-color="#652900"/><stop offset="0.875" stop-color="#5e2100"/><stop offset="0.917" stop-color="#581a00"/><stop offset="0.958" stop-color="#521500"/><stop offset="1.000" stop-color="#4c1100"/></linearGradient><linearGradient id="fbo22" gradientUnits="userSpaceOnUse" x1="855.8" y1="0" x2="1321.8" y2="0"><stop offset="0.000" stop-color="#008329"/><stop offset="0.042" stop-color="#008727"/><stop offset="0.083" stop-color="#008a26"/><stop offset="0.125" stop-color="#008d23"/><stop offset="0.167" stop-color="#009121"/><stop offset="0.208" stop-color="#00931d"/><stop offset="0.250" stop-color="#00961a"/><stop offset="0.292" stop-color="#009816"/><stop offset="0.333" stop-color="#009911"/><stop offset="0.375" stop-color="#009a0c"/><stop offset="0.417" stop-color="#0c9b06"/><stop offset="0.458" stop-color="#259a00"/><stop offset="0.500" stop-color="#3f9a00"/><stop offset="0.542" stop-color="#5b9800"/><stop offset="0.583" stop-color="#799600"/><stop offset="0.625" stop-color="#938f00"/><stop offset="0.667" stop-color="#866900"/><stop offset="0.708" stop-color="#7c5000"/><stop offset="0.750" stop-color="#743e00"/><stop offset="0.792" stop-color="#6c3100"/><stop offset="0.833" stop-color="#652700"/><stop offset="0.875" stop-color="#5e1f00"/><stop offset="0.917" stop-color="#581800"/><stop offset="0.958" stop-color="#521300"/><stop offset="1.000" stop-color="#4c0f00"/></linearGradient><linearGradient id="fbo23" gradientUnits="userSpaceOnUse" x1="855.8" y1="0" x2="1321.8" y2="0"><stop offset="0.000" stop-color="#00842c"/><stop offset="0.042" stop-color="#00882b"/><stop offset="0.083" stop-color="#008b29"/><stop offset="0.125" stop-color="#008f27"/><stop offset="0.167" stop-color="#009224"/><stop offset="0.208" stop-color="#009521"/><stop offset="0.250" stop-color="#00971d"/><stop offset="0.292" stop-color="#009919"/><stop offset="0.333" stop-color="#009b15"/><stop offset="0.375" stop-color="#009c0f"/><stop offset="0.417" stop-color="#0f9c0a"/><stop offset="0.458" stop-color="#299c03"/><stop offset="0.500" stop-color="#449b00"/><stop offset="0.542" stop-color="#629a00"/><stop offset="0.583" stop-color="#819800"/><stop offset="0.625" stop-color="#928600"/><stop offset="0.667" stop-color="#866300"/><stop offset="0.708" stop-color="#7c4b00"/><stop offset="0.750" stop-color="#733b00"/><stop offset="0.792" stop-color="#6c2e00"/><stop offset="0.833" stop-color="#652400"/><stop offset="0.875" stop-color="#5e1d00"/><stop offset="0.917" stop-color="#581700"/><stop offset="0.958" stop-color="#521200"/><stop offset="1.000" stop-color="#4c0e00"/></linearGradient><linearGradient id="fbo24" gradientUnits="userSpaceOnUse" x1="855.8" y1="0" x2="1321.8" y2="0"><stop offset="0.000" stop-color="#00852f"/><stop offset="0.042" stop-color="#00892e"/><stop offset="0.083" stop-color="#008d2c"/><stop offset="0.125" stop-color="#00902a"/><stop offset="0.167" stop-color="#009328"/><stop offset="0.208" stop-color="#009625"/><stop offset="0.250" stop-color="#009921"/><stop offset="0.292" stop-color="#009b1d"/><stop offset="0.333" stop-color="#009d18"/><stop offset="0.375" stop-color="#009e13"/><stop offset="0.417" stop-color="#139e0d"/><stop offset="0.458" stop-color="#2d9e07"/><stop offset="0.500" stop-color="#4a9d00"/><stop offset="0.542" stop-color="#699c00"/><stop offset="0.583" stop-color="#8a9a00"/><stop offset="0.625" stop-color="#917e00"/><stop offset="0.667" stop-color="#855d00"/><stop offset="0.708" stop-color="#7c4700"/><stop offset="0.750" stop-color="#733700"/><stop offset="0.792" stop-color="#6c2b00"/><stop offset="0.833" stop-color="#652200"/><stop offset="0.875" stop-color="#5e1b00"/><stop offset="0.917" stop-color="#581500"/><stop offset="0.958" stop-color="#521100"/><stop offset="1.000" stop-color="#4c0d00"/></linearGradient><linearGradient id="fbo25" gradientUnits="userSpaceOnUse" x1="855.8" y1="0" x2="1321.8" y2="0"><stop offset="0.000" stop-color="#008633"/><stop offset="0.042" stop-color="#008a31"/><stop offset="0.083" stop-color="#008e30"/><stop offset="0.125" stop-color="#00912e"/><stop offset="0.167" stop-color="#00952b"/><stop offset="0.208" stop-color="#009829"/><stop offset="0.250" stop-color="#009a25"/><stop offset="0.292" stop-color="#009d21"/><stop offset="0.333" stop-color="#009e1c"/><stop offset="0.375" stop-color="#00a017"/><stop offset="0.417" stop-color="#16a011"/><stop offset="0.458" stop-color="#32a00b"/><stop offset="0.500" stop-color="#519f04"/><stop offset="0.542" stop-color="#719d00"/><stop offset="0.583" stop-color="#949b00"/><stop offset="0.625" stop-color="#907600"/><stop offset="0.667" stop-color="#845800"/><stop offset="0.708" stop-color="#7b4300"/><stop offset="0.750" stop-color="#733400"/><stop offset="0.792" stop-color="#6c2900"/><stop offset="0.833" stop-color="#652000"/><stop offset="0.875" stop-color="#5e1900"/><stop offset="0.917" stop-color="#581400"/><stop offset="0.958" stop-color="#521000"/><stop offset="1.000" stop-color="#4c0c00"/></linearGradient><linearGradient id="fbo26" gradientUnits="userSpaceOnUse" x1="855.8" y1="0" x2="1321.8" y2="0"><stop offset="0.000" stop-color="#008736"/><stop offset="0.042" stop-color="#008b35"/><stop offset="0.083" stop-color="#008f34"/><stop offset="0.125" stop-color="#009332"/><stop offset="0.167" stop-color="#009630"/><stop offset="0.208" stop-color="#00992d"/><stop offset="0.250" stop-color="#009c29"/><stop offset="0.292" stop-color="#009e25"/><stop offset="0.333" stop-color="#00a021"/><stop offset="0.375" stop-color="#00a11c"/><stop offset="0.417" stop-color="#1aa216"/><stop offset="0.458" stop-color="#38a20f"/><stop offset="0.500" stop-color="#58a108"/><stop offset="0.542" stop-color="#7a9f00"/><stop offset="0.583" stop-color="#9c9a00"/><stop offset="0.625" stop-color="#8f6e00"/><stop offset="0.667" stop-color="#845200"/><stop offset="0.708" stop-color="#7b3f00"/><stop offset="0.750" stop-color="#733100"/><stop offset="0.792" stop-color="#6b2600"/><stop offset="0.833" stop-color="#651e00"/><stop offset="0.875" stop-color="#5e1800"/><stop offset="0.917" stop-color="#581300"/><stop offset="0.958" stop-color="#520e00"/><stop offset="1.000" stop-color="#4c0b00"/></linearGradient><linearGradient id="fbo27" gradientUnits="userSpaceOnUse" x1="855.8" y1="0" x2="1321.8" y2="0"><stop offset="0.000" stop-color="#00883a"/><stop offset="0.042" stop-color="#008c39"/><stop offset="0.083" stop-color="#009038"/><stop offset="0.125" stop-color="#009436"/><stop offset="0.167" stop-color="#009734"/><stop offset="0.208" stop-color="#009b31"/><stop offset="0.250" stop-color="#009d2e"/><stop offset="0.292" stop-color="#00a02a"/><stop offset="0.333" stop-color="#00a226"/><stop offset="0.375" stop-color="#02a320"/><stop offset="0.417" stop-color="#1ea41a"/><stop offset="0.458" stop-color="#3ea314"/><stop offset="0.500" stop-color="#5fa20c"/><stop offset="0.542" stop-color="#84a104"/><stop offset="0.583" stop-color="#9b8f00"/><stop offset="0.625" stop-color="#8e6700"/><stop offset="0.667" stop-color="#834d00"/><stop offset="0.708" stop-color="#7a3b00"/><stop offset="0.750" stop-color="#732e00"/><stop offset="0.792" stop-color="#6b2400"/><stop offset="0.833" stop-color="#651c00"/><stop offset="0.875" stop-color="#5e1600"/><stop offset="0.917" stop-color="#581100"/><stop offset="0.958" stop-color="#520d00"/><stop offset="1.000" stop-color="#4c0a00"/></linearGradient><linearGradient id="fbo28" gradientUnits="userSpaceOnUse" x1="855.8" y1="0" x2="1321.8" y2="0"><stop offset="0.000" stop-color="#00893e"/><stop offset="0.042" stop-color="#008d3d"/><stop offset="0.083" stop-color="#00913c"/><stop offset="0.125" stop-color="#00953a"/><stop offset="0.167" stop-color="#009938"/><stop offset="0.208" stop-color="#009c36"/><stop offset="0.250" stop-color="#009f33"/><stop offset="0.292" stop-color="#00a22f"/><stop offset="0.333" stop-color="#00a42b"/><stop offset="0.375" stop-color="#05a525"/><stop offset="0.417" stop-color="#23a620"/><stop offset="0.458" stop-color="#44a519"/><stop offset="0.500" stop-color="#68a411"/><stop offset="0.542" stop-color="#8ea209"/><stop offset="0.583" stop-color="#998500"/><stop offset="0.625" stop-color="#8d6100"/><stop offset="0.667" stop-color="#834800"/><stop offset="0.708" stop-color="#7a3700"/><stop offset="0.750" stop-color="#722b00"/><stop offset="0.792" stop-color="#6b2100"/><stop offset="0.833" stop-color="#651a00"/><stop offset="0.875" stop-color="#5e1400"/><stop offset="0.917" stop-color="#581000"/><stop offset="0.958" stop-color="#520c00"/><stop offset="1.000" stop-color="#4c0900"/></linearGradient><linearGradient id="fbo29" gradientUnits="userSpaceOnUse" x1="855.8" y1="0" x2="1321.8" y2="0"><stop offset="0.000" stop-color="#008a42"/><stop offset="0.042" stop-color="#008e41"/><stop offset="0.083" stop-color="#009240"/><stop offset="0.125" stop-color="#00963f"/><stop offset="0.167" stop-color="#009a3d"/><stop offset="0.208" stop-color="#009d3b"/><stop offset="0.250" stop-color="#00a038"/><stop offset="0.292" stop-color="#00a335"/><stop offset="0.333" stop-color="#00a530"/><stop offset="0.375" stop-color="#09a72b"/><stop offset="0.417" stop-color="#28a725"/><stop offset="0.458" stop-color="#4ba71e"/><stop offset="0.500" stop-color="#70a617"/><stop offset="0.542" stop-color="#99a40e"/><stop offset="0.583" stop-color="#987c04"/><stop offset="0.625" stop-color="#8c5a00"/><stop offset="0.667" stop-color="#824300"/><stop offset="0.708" stop-color="#7a3300"/><stop offset="0.750" stop-color="#722800"/><stop offset="0.792" stop-color="#6b1f00"/><stop offset="0.833" stop-color="#641800"/><stop offset="0.875" stop-color="#5e1300"/><stop offset="0.917" stop-color="#580e00"/><stop offset="0.958" stop-color="#520b00"/><stop offset="1.000" stop-color="#4c0800"/></linearGradient><linearGradient id="fbo30" gradientUnits="userSpaceOnUse" x1="855.8" y1="0" x2="1321.8" y2="0"><stop offset="0.000" stop-color="#008b46"/><stop offset="0.042" stop-color="#008f46"/><stop offset="0.083" stop-color="#009345"/><stop offset="0.125" stop-color="#009744"/><stop offset="0.167" stop-color="#009b43"/><stop offset="0.208" stop-color="#009e40"/><stop offset="0.250" stop-color="#00a23e"/><stop offset="0.292" stop-color="#00a53a"/><stop offset="0.333" stop-color="#00a736"/><stop offset="0.375" stop-color="#0ca931"/><stop offset="0.417" stop-color="#2ea92b"/><stop offset="0.458" stop-color="#52a924"/><stop offset="0.500" stop-color="#7aa81c"/><stop offset="0.542" stop-color="#a5a514"/><stop offset="0.583" stop-color="#977407"/><stop offset="0.625" stop-color="#8b5400"/><stop offset="0.667" stop-color="#823f00"/><stop offset="0.708" stop-color="#793000"/><stop offset="0.750" stop-color="#722500"/><stop offset="0.792" stop-color="#6b1d00"/><stop offset="0.833" stop-color="#641600"/><stop offset="0.875" stop-color="#5e1100"/><stop offset="0.917" stop-color="#580d00"/><stop offset="0.958" stop-color="#520a00"/><stop offset="1.000" stop-color="#4c0700"/></linearGradient><linearGradient id="fbo31" gradientUnits="userSpaceOnUse" x1="855.8" y1="0" x2="1321.8" y2="0"><stop offset="0.000" stop-color="#008b4b"/><stop offset="0.042" stop-color="#00904b"/><stop offset="0.083" stop-color="#00944a"/><stop offset="0.125" stop-color="#009849"/><stop offset="0.167" stop-color="#009c48"/><stop offset="0.208" stop-color="#00a046"/><stop offset="0.250" stop-color="#00a344"/><stop offset="0.292" stop-color="#00a641"/><stop offset="0.333" stop-color="#00a93d"/><stop offset="0.375" stop-color="#10aa38"/><stop offset="0.417" stop-color="#33ab32"/><stop offset="0.458" stop-color="#5aab2b"/><stop offset="0.500" stop-color="#85a923"/><stop offset="0.542" stop-color="#a49918"/><stop offset="0.583" stop-color="#976c0b"/><stop offset="0.625" stop-color="#8b4e03"/><stop offset="0.667" stop-color="#813a00"/><stop offset="0.708" stop-color="#792c00"/><stop offset="0.750" stop-color="#722200"/><stop offset="0.792" stop-color="#6b1a00"/><stop offset="0.833" stop-color="#641400"/><stop offset="0.875" stop-color="#5e0f00"/><stop offset="0.917" stop-color="#580c00"/><stop offset="0.958" stop-color="#520800"/><stop offset="1.000" stop-color="#4c0600"/></linearGradient><linearGradient id="fbo32" gradientUnits="userSpaceOnUse" x1="855.8" y1="0" x2="1321.8" y2="0"><stop offset="0.000" stop-color="#008c4f"/><stop offset="0.042" stop-color="#009050"/><stop offset="0.083" stop-color="#00954f"/><stop offset="0.125" stop-color="#00994f"/><stop offset="0.167" stop-color="#009d4e"/><stop offset="0.208" stop-color="#00a14c"/><stop offset="0.250" stop-color="#00a44a"/><stop offset="0.292" stop-color="#00a847"/><stop offset="0.333" stop-color="#00aa43"/><stop offset="0.375" stop-color="#15ac3f"/><stop offset="0.417" stop-color="#3aad39"/><stop offset="0.458" stop-color="#63ac32"/><stop offset="0.500" stop-color="#90ab2a"/><stop offset="0.542" stop-color="#a38e1c"/><stop offset="0.583" stop-color="#96640e"/><stop offset="0.625" stop-color="#8b4905"/><stop offset="0.667" stop-color="#813600"/><stop offset="0.708" stop-color="#792900"/><stop offset="0.750" stop-color="#711f00"/><stop offset="0.792" stop-color="#6a1800"/><stop offset="0.833" stop-color="#641200"/><stop offset="0.875" stop-color="#5e0e00"/><stop offset="0.917" stop-color="#580a00"/><stop offset="0.958" stop-color="#520700"/><stop offset="1.000" stop-color="#4c0500"/></linearGradient><linearGradient id="fbo33" gradientUnits="userSpaceOnUse" x1="855.8" y1="0" x2="1321.8" y2="0"><stop offset="0.000" stop-color="#008d54"/><stop offset="0.042" stop-color="#009155"/><stop offset="0.083" stop-color="#009555"/><stop offset="0.125" stop-color="#009a55"/><stop offset="0.167" stop-color="#009e54"/><stop offset="0.208" stop-color="#00a253"/><stop offset="0.250" stop-color="#00a651"/><stop offset="0.292" stop-color="#00a94e"/><stop offset="0.333" stop-color="#00ac4b"/><stop offset="0.375" stop-color="#1aae47"/><stop offset="0.417" stop-color="#41af41"/><stop offset="0.458" stop-color="#6dae3a"/><stop offset="0.500" stop-color="#9dad32"/><stop offset="0.542" stop-color="#a2831f"/><stop offset="0.583" stop-color="#965d11"/><stop offset="0.625" stop-color="#8b4408"/><stop offset="0.667" stop-color="#813202"/><stop offset="0.708" stop-color="#782600"/><stop offset="0.750" stop-color="#711d00"/><stop offset="0.792" stop-color="#6a1600"/><stop offset="0.833" stop-color="#641000"/><stop offset="0.875" stop-color="#5d0c00"/><stop offset="0.917" stop-color="#570900"/><stop offset="0.958" stop-color="#520600"/><stop offset="1.000" stop-color="#4c0400"/></linearGradient><linearGradient id="fbo34" gradientUnits="userSpaceOnUse" x1="855.8" y1="0" x2="1321.8" y2="0"><stop offset="0.000" stop-color="#008d5a"/><stop offset="0.042" stop-color="#00925a"/><stop offset="0.083" stop-color="#00965b"/><stop offset="0.125" stop-color="#009b5b"/><stop offset="0.167" stop-color="#009f5b"/><stop offset="0.208" stop-color="#00a35a"/><stop offset="0.250" stop-color="#00a758"/><stop offset="0.292" stop-color="#00aa56"/><stop offset="0.333" stop-color="#00ad53"/><stop offset="0.375" stop-color="#1fb04f"/><stop offset="0.417" stop-color="#49b14a"/><stop offset="0.458" stop-color="#78b043"/><stop offset="0.500" stop-color="#abae3b"/><stop offset="0.542" stop-color="#a17923"/><stop offset="0.583" stop-color="#955614"/><stop offset="0.625" stop-color="#8a3f0a"/><stop offset="0.667" stop-color="#812e04"/><stop offset="0.708" stop-color="#782300"/><stop offset="0.750" stop-color="#701a00"/><stop offset="0.792" stop-color="#6a1400"/><stop offset="0.833" stop-color="#630f00"/><stop offset="0.875" stop-color="#5d0b00"/><stop offset="0.917" stop-color="#570800"/><stop offset="0.958" stop-color="#510500"/><stop offset="1.000" stop-color="#4c0300"/></linearGradient><linearGradient id="fbo35" gradientUnits="userSpaceOnUse" x1="855.8" y1="0" x2="1321.8" y2="0"><stop offset="0.000" stop-color="#008e5f"/><stop offset="0.042" stop-color="#009260"/><stop offset="0.083" stop-color="#009761"/><stop offset="0.125" stop-color="#009b62"/><stop offset="0.167" stop-color="#00a062"/><stop offset="0.208" stop-color="#00a461"/><stop offset="0.250" stop-color="#00a860"/><stop offset="0.292" stop-color="#00ac5e"/><stop offset="0.333" stop-color="#00af5c"/><stop offset="0.375" stop-color="#25b158"/><stop offset="0.417" stop-color="#52b253"/><stop offset="0.458" stop-color="#83b24d"/><stop offset="0.500" stop-color="#aea440"/><stop offset="0.542" stop-color="#a17026"/><stop offset="0.583" stop-color="#954f17"/><stop offset="0.625" stop-color="#8a3a0d"/><stop offset="0.667" stop-color="#802b06"/><stop offset="0.708" stop-color="#782001"/><stop offset="0.750" stop-color="#701800"/><stop offset="0.792" stop-color="#691100"/><stop offset="0.833" stop-color="#630d00"/><stop offset="0.875" stop-color="#5d0900"/><stop offset="0.917" stop-color="#570600"/><stop offset="0.958" stop-color="#510400"/><stop offset="1.000" stop-color="#4b0200"/></linearGradient><linearGradient id="fbo36" gradientUnits="userSpaceOnUse" x1="855.8" y1="0" x2="1321.8" y2="0"><stop offset="0.000" stop-color="#008e65"/><stop offset="0.042" stop-color="#009366"/><stop offset="0.083" stop-color="#009768"/><stop offset="0.125" stop-color="#009c68"/><stop offset="0.167" stop-color="#00a069"/><stop offset="0.208" stop-color="#00a569"/><stop offset="0.250" stop-color="#00a969"/><stop offset="0.292" stop-color="#00ad68"/><stop offset="0.333" stop-color="#02b066"/><stop offset="0.375" stop-color="#2bb362"/><stop offset="0.417" stop-color="#5bb45e"/><stop offset="0.458" stop-color="#91b458"/><stop offset="0.500" stop-color="#ad9644"/><stop offset="0.542" stop-color="#a0672a"/><stop offset="0.583" stop-color="#95491a"/><stop offset="0.625" stop-color="#8a350f"/><stop offset="0.667" stop-color="#802708"/><stop offset="0.708" stop-color="#781d03"/><stop offset="0.750" stop-color="#6f1500"/><stop offset="0.792" stop-color="#690f00"/><stop offset="0.833" stop-color="#620b00"/><stop offset="0.875" stop-color="#5c0800"/><stop offset="0.917" stop-color="#560500"/><stop offset="0.958" stop-color="#510300"/><stop offset="1.000" stop-color="#4b0100"/></linearGradient><linearGradient id="fbo37" gradientUnits="userSpaceOnUse" x1="855.8" y1="0" x2="1321.8" y2="0"><stop offset="0.000" stop-color="#008f6b"/><stop offset="0.042" stop-color="#00936d"/><stop offset="0.083" stop-color="#00986e"/><stop offset="0.125" stop-color="#009c70"/><stop offset="0.167" stop-color="#00a171"/><stop offset="0.208" stop-color="#00a572"/><stop offset="0.250" stop-color="#00aa72"/><stop offset="0.292" stop-color="#00ae71"/><stop offset="0.333" stop-color="#06b270"/><stop offset="0.375" stop-color="#33b56e"/><stop offset="0.417" stop-color="#66b66a"/><stop offset="0.458" stop-color="#9fb564"/><stop offset="0.500" stop-color="#ad8a47"/><stop offset="0.542" stop-color="#a05f2d"/><stop offset="0.583" stop-color="#94431c"/><stop offset="0.625" stop-color="#8a3011"/><stop offset="0.667" stop-color="#80230a"/><stop offset="0.708" stop-color="#771a05"/><stop offset="0.750" stop-color="#6f1301"/><stop offset="0.792" stop-color="#680d00"/><stop offset="0.833" stop-color="#620900"/><stop offset="0.875" stop-color="#5c0600"/><stop offset="0.917" stop-color="#560400"/><stop offset="0.958" stop-color="#500200"/><stop offset="1.000" stop-color="#4b0000"/></linearGradient><linearGradient id="fbo38" gradientUnits="userSpaceOnUse" x1="855.8" y1="0" x2="1321.8" y2="0"><stop offset="0.000" stop-color="#008f71"/><stop offset="0.042" stop-color="#009474"/><stop offset="0.083" stop-color="#009876"/><stop offset="0.125" stop-color="#009d78"/><stop offset="0.167" stop-color="#00a179"/><stop offset="0.208" stop-color="#00a67b"/><stop offset="0.250" stop-color="#00aa7c"/><stop offset="0.292" stop-color="#00af7c"/><stop offset="0.333" stop-color="#0bb37b"/><stop offset="0.375" stop-color="#3ab67a"/><stop offset="0.417" stop-color="#71b877"/><stop offset="0.458" stop-color="#afb771"/><stop offset="0.500" stop-color="#ac7f4a"/><stop offset="0.542" stop-color="#a05730"/><stop offset="0.583" stop-color="#943d1f"/><stop offset="0.625" stop-color="#8a2c14"/><stop offset="0.667" stop-color="#80200c"/><stop offset="0.708" stop-color="#771706"/><stop offset="0.750" stop-color="#6f1003"/><stop offset="0.792" stop-color="#680b00"/><stop offset="0.833" stop-color="#610800"/><stop offset="0.875" stop-color="#5b0500"/><stop offset="0.917" stop-color="#560300"/><stop offset="0.958" stop-color="#500100"/><stop offset="1.000" stop-color="#4b0000"/></linearGradient><linearGradient id="fbo39" gradientUnits="userSpaceOnUse" x1="855.8" y1="0" x2="1321.8" y2="0"><stop offset="0.000" stop-color="#008f78"/><stop offset="0.042" stop-color="#00947b"/><stop offset="0.083" stop-color="#00987e"/><stop offset="0.125" stop-color="#009d80"/><stop offset="0.167" stop-color="#00a282"/><stop offset="0.208" stop-color="#00a684"/><stop offset="0.250" stop-color="#00ab86"/><stop offset="0.292" stop-color="#00af87"/><stop offset="0.333" stop-color="#11b488"/><stop offset="0.375" stop-color="#43b788"/><stop offset="0.417" stop-color="#7fba86"/><stop offset="0.458" stop-color="#b8af7a"/><stop offset="0.500" stop-color="#ac744e"/><stop offset="0.542" stop-color="#9f4f33"/><stop offset="0.583" stop-color="#943821"/><stop offset="0.625" stop-color="#892816"/><stop offset="0.667" stop-color="#801c0e"/><stop offset="0.708" stop-color="#771408"/><stop offset="0.750" stop-color="#6f0e04"/><stop offset="0.792" stop-color="#670a01"/><stop offset="0.833" stop-color="#610600"/><stop offset="0.875" stop-color="#5b0300"/><stop offset="0.917" stop-color="#550100"/><stop offset="0.958" stop-color="#500000"/><stop offset="1.000" stop-color="#4b0000"/></linearGradient><linearGradient id="fbo40" gradientUnits="userSpaceOnUse" x1="855.8" y1="0" x2="1321.8" y2="0"><stop offset="0.000" stop-color="#008f7f"/><stop offset="0.042" stop-color="#009483"/><stop offset="0.083" stop-color="#009986"/><stop offset="0.125" stop-color="#009d89"/><stop offset="0.167" stop-color="#00a28c"/><stop offset="0.208" stop-color="#00a78f"/><stop offset="0.250" stop-color="#00ab91"/><stop offset="0.292" stop-color="#00b094"/><stop offset="0.333" stop-color="#17b495"/><stop offset="0.375" stop-color="#4db997"/><stop offset="0.417" stop-color="#8dbb96"/><stop offset="0.458" stop-color="#b89f7d"/><stop offset="0.500" stop-color="#ab6950"/><stop offset="0.542" stop-color="#9f4835"/><stop offset="0.583" stop-color="#933224"/><stop offset="0.625" stop-color="#892418"/><stop offset="0.667" stop-color="#801910"/><stop offset="0.708" stop-color="#77120a"/><stop offset="0.750" stop-color="#6f0c05"/><stop offset="0.792" stop-color="#670802"/><stop offset="0.833" stop-color="#600500"/><stop offset="0.875" stop-color="#5a0200"/><stop offset="0.917" stop-color="#550000"/><stop offset="0.958" stop-color="#500000"/><stop offset="1.000" stop-color="#4b0000"/></linearGradient><linearGradient id="fbo41" gradientUnits="userSpaceOnUse" x1="855.8" y1="0" x2="1321.8" y2="0"><stop offset="0.000" stop-color="#008f87"/><stop offset="0.042" stop-color="#00948b"/><stop offset="0.083" stop-color="#00998f"/><stop offset="0.125" stop-color="#009e93"/><stop offset="0.167" stop-color="#00a296"/><stop offset="0.208" stop-color="#00a79a"/><stop offset="0.250" stop-color="#00ac9e"/><stop offset="0.292" stop-color="#00b0a1"/><stop offset="0.333" stop-color="#1db5a4"/><stop offset="0.375" stop-color="#58b9a7"/><stop offset="0.417" stop-color="#9ebda9"/><stop offset="0.458" stop-color="#b89180"/><stop offset="0.500" stop-color="#ab5f53"/><stop offset="0.542" stop-color="#9e4138"/><stop offset="0.583" stop-color="#932d26"/><stop offset="0.625" stop-color="#89201a"/><stop offset="0.667" stop-color="#7f1611"/><stop offset="0.708" stop-color="#770f0b"/><stop offset="0.750" stop-color="#6f0a07"/><stop offset="0.792" stop-color="#670603"/><stop offset="0.833" stop-color="#600301"/><stop offset="0.875" stop-color="#5a0100"/><stop offset="0.917" stop-color="#550000"/><stop offset="0.958" stop-color="#500000"/><stop offset="1.000" stop-color="#4b0000"/></linearGradient><linearGradient id="fbo42" gradientUnits="userSpaceOnUse" x1="855.8" y1="0" x2="1321.8" y2="0"><stop offset="0.000" stop-color="#008f8f"/><stop offset="0.042" stop-color="#009493"/><stop offset="0.083" stop-color="#009998"/><stop offset="0.125" stop-color="#009e9d"/><stop offset="0.167" stop-color="#00a2a1"/><stop offset="0.208" stop-color="#00a7a6"/><stop offset="0.250" stop-color="#00acab"/><stop offset="0.292" stop-color="#00b0b0"/><stop offset="0.333" stop-color="#25b5b4"/><stop offset="0.375" stop-color="#63bab9"/><stop offset="0.417" stop-color="#b1bebe"/><stop offset="0.458" stop-color="#b78382"/><stop offset="0.500" stop-color="#aa5656"/><stop offset="0.542" stop-color="#9e3a3a"/><stop offset="0.583" stop-color="#922828"/><stop offset="0.625" stop-color="#881c1c"/><stop offset="0.667" stop-color="#7f1313"/><stop offset="0.708" stop-color="#760c0d"/><stop offset="0.750" stop-color="#6e0808"/><stop offset="0.792" stop-color="#670404"/><stop offset="0.833" stop-color="#600202"/><stop offset="0.875" stop-color="#590000"/><stop offset="0.917" stop-color="#550000"/><stop offset="0.958" stop-color="#500000"/><stop offset="1.000" stop-color="#4b0000"/></linearGradient><linearGradient id="fbo43" gradientUnits="userSpaceOnUse" x1="855.8" y1="0" x2="1321.8" y2="0"><stop offset="0.000" stop-color="#00888f"/><stop offset="0.042" stop-color="#008c94"/><stop offset="0.083" stop-color="#009099"/><stop offset="0.125" stop-color="#00949e"/><stop offset="0.167" stop-color="#0098a2"/><stop offset="0.208" stop-color="#009ba7"/><stop offset="0.250" stop-color="#009fac"/><stop offset="0.292" stop-color="#00a2b0"/><stop offset="0.333" stop-color="#29a5b5"/><stop offset="0.375" stop-color="#66a8ba"/><stop offset="0.417" stop-color="#afaabd"/><stop offset="0.458" stop-color="#b67584"/><stop offset="0.500" stop-color="#a94d58"/><stop offset="0.542" stop-color="#9d343c"/><stop offset="0.583" stop-color="#92232a"/><stop offset="0.625" stop-color="#88181d"/><stop offset="0.667" stop-color="#7e1014"/><stop offset="0.708" stop-color="#760a0e"/><stop offset="0.750" stop-color="#6e0609"/><stop offset="0.792" stop-color="#670305"/><stop offset="0.833" stop-color="#5f0003"/><stop offset="0.875" stop-color="#5a0001"/><stop offset="0.917" stop-color="#550000"/><stop offset="0.958" stop-color="#500000"/><stop offset="1.000" stop-color="#4b0000"/></linearGradient><linearGradient id="fbo44" gradientUnits="userSpaceOnUse" x1="855.8" y1="0" x2="1321.8" y2="0"><stop offset="0.000" stop-color="#00808f"/><stop offset="0.042" stop-color="#008494"/><stop offset="0.083" stop-color="#008799"/><stop offset="0.125" stop-color="#008a9d"/><stop offset="0.167" stop-color="#008da2"/><stop offset="0.208" stop-color="#0090a7"/><stop offset="0.250" stop-color="#0092ab"/><stop offset="0.292" stop-color="#0094b0"/><stop offset="0.333" stop-color="#2d96b4"/><stop offset="0.375" stop-color="#6797b9"/><stop offset="0.417" stop-color="#ad96bc"/><stop offset="0.458" stop-color="#b46885"/><stop offset="0.500" stop-color="#a8445a"/><stop offset="0.542" stop-color="#9c2d3e"/><stop offset="0.583" stop-color="#911e2c"/><stop offset="0.625" stop-color="#87141f"/><stop offset="0.667" stop-color="#7e0d16"/><stop offset="0.708" stop-color="#75080f"/><stop offset="0.750" stop-color="#6e040a"/><stop offset="0.792" stop-color="#660106"/><stop offset="0.833" stop-color="#600004"/><stop offset="0.875" stop-color="#5a0001"/><stop offset="0.917" stop-color="#540000"/><stop offset="0.958" stop-color="#500000"/><stop offset="1.000" stop-color="#4b0000"/></linearGradient><linearGradient id="fbo45" gradientUnits="userSpaceOnUse" x1="855.8" y1="0" x2="1321.8" y2="0"><stop offset="0.000" stop-color="#00798f"/><stop offset="0.042" stop-color="#007c94"/><stop offset="0.083" stop-color="#007e99"/><stop offset="0.125" stop-color="#00809d"/><stop offset="0.167" stop-color="#0083a2"/><stop offset="0.208" stop-color="#0084a6"/><stop offset="0.250" stop-color="#0086ab"/><stop offset="0.292" stop-color="#0187af"/><stop offset="0.333" stop-color="#3087b4"/><stop offset="0.375" stop-color="#6886b8"/><stop offset="0.417" stop-color="#aa84ba"/><stop offset="0.458" stop-color="#b25c86"/><stop offset="0.500" stop-color="#a63b5b"/><stop offset="0.542" stop-color="#9b2740"/><stop offset="0.583" stop-color="#901a2e"/><stop offset="0.625" stop-color="#861021"/><stop offset="0.667" stop-color="#7d0a17"/><stop offset="0.708" stop-color="#750511"/><stop offset="0.750" stop-color="#6d020b"/><stop offset="0.792" stop-color="#660008"/><stop offset="0.833" stop-color="#600005"/><stop offset="0.875" stop-color="#5a0002"/><stop offset="0.917" stop-color="#550000"/><stop offset="0.958" stop-color="#500000"/><stop offset="1.000" stop-color="#4b0000"/></linearGradient><linearGradient id="fbo46" gradientUnits="userSpaceOnUse" x1="855.8" y1="0" x2="1321.8" y2="0"><stop offset="0.000" stop-color="#00718f"/><stop offset="0.042" stop-color="#007494"/><stop offset="0.083" stop-color="#007698"/><stop offset="0.125" stop-color="#00779d"/><stop offset="0.167" stop-color="#0079a1"/><stop offset="0.208" stop-color="#007aa6"/><stop offset="0.250" stop-color="#007aaa"/><stop offset="0.292" stop-color="#067aaf"/><stop offset="0.333" stop-color="#3379b3"/><stop offset="0.375" stop-color="#6977b6"/><stop offset="0.417" stop-color="#a873b8"/><stop offset="0.458" stop-color="#b05087"/><stop offset="0.500" stop-color="#a5345d"/><stop offset="0.542" stop-color="#992142"/><stop offset="0.583" stop-color="#8f152f"/><stop offset="0.625" stop-color="#850d22"/><stop offset="0.667" stop-color="#7c0719"/><stop offset="0.708" stop-color="#740312"/><stop offset="0.750" stop-color="#6d000d"/><stop offset="0.792" stop-color="#660009"/><stop offset="0.833" stop-color="#600006"/><stop offset="0.875" stop-color="#5b0003"/><stop offset="0.917" stop-color="#550001"/><stop offset="0.958" stop-color="#4f0000"/><stop offset="1.000" stop-color="#4b0000"/></linearGradient><linearGradient id="fbo47" gradientUnits="userSpaceOnUse" x1="855.8" y1="0" x2="1321.8" y2="0"><stop offset="0.000" stop-color="#006a8f"/><stop offset="0.042" stop-color="#006c93"/><stop offset="0.083" stop-color="#006e98"/><stop offset="0.125" stop-color="#006f9c"/><stop offset="0.167" stop-color="#006fa1"/><stop offset="0.208" stop-color="#0070a5"/><stop offset="0.250" stop-color="#006faa"/><stop offset="0.292" stop-color="#0a6eae"/><stop offset="0.333" stop-color="#366cb2"/><stop offset="0.375" stop-color="#6a69b5"/><stop offset="0.417" stop-color="#a664b6"/><stop offset="0.458" stop-color="#ae4587"/><stop offset="0.500" stop-color="#a32c5e"/><stop offset="0.542" stop-color="#981c43"/><stop offset="0.583" stop-color="#8e1131"/><stop offset="0.625" stop-color="#840a24"/><stop offset="0.667" stop-color="#7c041a"/><stop offset="0.708" stop-color="#740113"/><stop offset="0.750" stop-color="#6d000e"/><stop offset="0.792" stop-color="#67000a"/><stop offset="0.833" stop-color="#610006"/><stop offset="0.875" stop-color="#5b0004"/><stop offset="0.917" stop-color="#550002"/><stop offset="0.958" stop-color="#4f0000"/><stop offset="1.000" stop-color="#4b0000"/></linearGradient><linearGradient id="fbo48" gradientUnits="userSpaceOnUse" x1="855.8" y1="0" x2="1321.8" y2="0"><stop offset="0.000" stop-color="#00648e"/><stop offset="0.042" stop-color="#006593"/><stop offset="0.083" stop-color="#006697"/><stop offset="0.125" stop-color="#00669c"/><stop offset="0.167" stop-color="#0066a0"/><stop offset="0.208" stop-color="#0066a5"/><stop offset="0.250" stop-color="#0065a9"/><stop offset="0.292" stop-color="#0d63ad"/><stop offset="0.333" stop-color="#3860b0"/><stop offset="0.375" stop-color="#6a5cb3"/><stop offset="0.417" stop-color="#a456b4"/><stop offset="0.458" stop-color="#ac3b88"/><stop offset="0.500" stop-color="#a1255f"/><stop offset="0.542" stop-color="#961744"/><stop offset="0.583" stop-color="#8c0d32"/><stop offset="0.625" stop-color="#830625"/><stop offset="0.667" stop-color="#7b021b"/><stop offset="0.708" stop-color="#730014"/><stop offset="0.750" stop-color="#6d000f"/><stop offset="0.792" stop-color="#67000b"/><stop offset="0.833" stop-color="#610007"/><stop offset="0.875" stop-color="#5b0005"/><stop offset="0.917" stop-color="#550003"/><stop offset="0.958" stop-color="#500001"/><stop offset="1.000" stop-color="#4a0000"/></linearGradient><linearGradient id="fbo49" gradientUnits="userSpaceOnUse" x1="855.8" y1="0" x2="1321.8" y2="0"><stop offset="0.000" stop-color="#005d8e"/><stop offset="0.042" stop-color="#005e92"/><stop offset="0.083" stop-color="#005e97"/><stop offset="0.125" stop-color="#005e9b"/><stop offset="0.167" stop-color="#005ea0"/><stop offset="0.208" stop-color="#005da4"/><stop offset="0.250" stop-color="#005ba8"/><stop offset="0.292" stop-color="#1158ac"/><stop offset="0.333" stop-color="#3b55af"/><stop offset="0.375" stop-color="#6b50b1"/><stop offset="0.417" stop-color="#a149b2"/><stop offset="0.458" stop-color="#ab3288"/><stop offset="0.500" stop-color="#9f1e60"/><stop offset="0.542" stop-color="#951246"/><stop offset="0.583" stop-color="#8b0933"/><stop offset="0.625" stop-color="#820326"/><stop offset="0.667" stop-color="#7a001d"/><stop offset="0.708" stop-color="#730015"/><stop offset="0.750" stop-color="#6d0010"/><stop offset="0.792" stop-color="#67000c"/><stop offset="0.833" stop-color="#610008"/><stop offset="0.875" stop-color="#5b0006"/><stop offset="0.917" stop-color="#550003"/><stop offset="0.958" stop-color="#500002"/><stop offset="1.000" stop-color="#4a0000"/></linearGradient><linearGradient id="fbo50" gradientUnits="userSpaceOnUse" x1="855.8" y1="0" x2="1321.8" y2="0"><stop offset="0.000" stop-color="#00578d"/><stop offset="0.042" stop-color="#005792"/><stop offset="0.083" stop-color="#005796"/><stop offset="0.125" stop-color="#00579b"/><stop offset="0.167" stop-color="#00569f"/><stop offset="0.208" stop-color="#0054a3"/><stop offset="0.250" stop-color="#0052a7"/><stop offset="0.292" stop-color="#144faa"/><stop offset="0.333" stop-color="#3c4aad"/><stop offset="0.375" stop-color="#6b45b0"/><stop offset="0.417" stop-color="#9f3eb1"/><stop offset="0.458" stop-color="#a92988"/><stop offset="0.500" stop-color="#9e1861"/><stop offset="0.542" stop-color="#930d47"/><stop offset="0.583" stop-color="#8a0535"/><stop offset="0.625" stop-color="#810027"/><stop offset="0.667" stop-color="#7a001e"/><stop offset="0.708" stop-color="#730017"/><stop offset="0.750" stop-color="#6d0011"/><stop offset="0.792" stop-color="#66000d"/><stop offset="0.833" stop-color="#610009"/><stop offset="0.875" stop-color="#5b0006"/><stop offset="0.917" stop-color="#550004"/><stop offset="0.958" stop-color="#500002"/><stop offset="1.000" stop-color="#4a0001"/></linearGradient><linearGradient id="fbo51" gradientUnits="userSpaceOnUse" x1="855.8" y1="0" x2="1321.8" y2="0"><stop offset="0.000" stop-color="#00518d"/><stop offset="0.042" stop-color="#005191"/><stop offset="0.083" stop-color="#005096"/><stop offset="0.125" stop-color="#00509a"/><stop offset="0.167" stop-color="#004e9e"/><stop offset="0.208" stop-color="#004ca2"/><stop offset="0.250" stop-color="#0049a6"/><stop offset="0.292" stop-color="#1745a9"/><stop offset="0.333" stop-color="#3e40ac"/><stop offset="0.375" stop-color="#6b3aae"/><stop offset="0.417" stop-color="#9d33af"/><stop offset="0.458" stop-color="#a72188"/><stop offset="0.500" stop-color="#9c1261"/><stop offset="0.542" stop-color="#920848"/><stop offset="0.583" stop-color="#880236"/><stop offset="0.625" stop-color="#800029"/><stop offset="0.667" stop-color="#79001f"/><stop offset="0.708" stop-color="#730018"/><stop offset="0.750" stop-color="#6c0012"/><stop offset="0.792" stop-color="#66000e"/><stop offset="0.833" stop-color="#60000a"/><stop offset="0.875" stop-color="#5b0007"/><stop offset="0.917" stop-color="#550005"/><stop offset="0.958" stop-color="#500003"/><stop offset="1.000" stop-color="#4a0001"/></linearGradient><linearGradient id="fbo52" gradientUnits="userSpaceOnUse" x1="855.8" y1="0" x2="1321.8" y2="0"><stop offset="0.000" stop-color="#004b8c"/><stop offset="0.042" stop-color="#004b90"/><stop offset="0.083" stop-color="#004a95"/><stop offset="0.125" stop-color="#004999"/><stop offset="0.167" stop-color="#00479d"/><stop offset="0.208" stop-color="#0044a1"/><stop offset="0.250" stop-color="#0041a4"/><stop offset="0.292" stop-color="#1a3ca8"/><stop offset="0.333" stop-color="#4037aa"/><stop offset="0.375" stop-color="#6b31ac"/><stop offset="0.417" stop-color="#9b29ad"/><stop offset="0.458" stop-color="#a51988"/><stop offset="0.500" stop-color="#9a0c62"/><stop offset="0.542" stop-color="#900449"/><stop offset="0.583" stop-color="#870037"/><stop offset="0.625" stop-color="#80002a"/><stop offset="0.667" stop-color="#790020"/><stop offset="0.708" stop-color="#720019"/><stop offset="0.750" stop-color="#6c0013"/><stop offset="0.792" stop-color="#66000e"/><stop offset="0.833" stop-color="#60000b"/><stop offset="0.875" stop-color="#5b0008"/><stop offset="0.917" stop-color="#550005"/><stop offset="0.958" stop-color="#4f0003"/><stop offset="1.000" stop-color="#4a0002"/></linearGradient><linearGradient id="fbo53" gradientUnits="userSpaceOnUse" x1="855.8" y1="0" x2="1321.8" y2="0"><stop offset="0.000" stop-color="#00468b"/><stop offset="0.042" stop-color="#004590"/><stop offset="0.083" stop-color="#004494"/><stop offset="0.125" stop-color="#004298"/><stop offset="0.167" stop-color="#00409c"/><stop offset="0.208" stop-color="#003da0"/><stop offset="0.250" stop-color="#0039a3"/><stop offset="0.292" stop-color="#1d34a6"/><stop offset="0.333" stop-color="#412fa9"/><stop offset="0.375" stop-color="#6b28aa"/><stop offset="0.417" stop-color="#9920ab"/><stop offset="0.458" stop-color="#a31288"/><stop offset="0.500" stop-color="#980763"/><stop offset="0.542" stop-color="#8e0049"/><stop offset="0.583" stop-color="#860038"/><stop offset="0.625" stop-color="#7f002b"/><stop offset="0.667" stop-color="#780021"/><stop offset="0.708" stop-color="#72001a"/><stop offset="0.750" stop-color="#6c0014"/><stop offset="0.792" stop-color="#66000f"/><stop offset="0.833" stop-color="#60000c"/><stop offset="0.875" stop-color="#5a0009"/><stop offset="0.917" stop-color="#550006"/><stop offset="0.958" stop-color="#4f0004"/><stop offset="1.000" stop-color="#4a0002"/></linearGradient><linearGradient id="fbo54" gradientUnits="userSpaceOnUse" x1="855.8" y1="0" x2="1321.8" y2="0"><stop offset="0.000" stop-color="#00408b"/><stop offset="0.042" stop-color="#003f8f"/><stop offset="0.083" stop-color="#003e93"/><stop offset="0.125" stop-color="#003c97"/><stop offset="0.167" stop-color="#00399b"/><stop offset="0.208" stop-color="#00369f"/><stop offset="0.250" stop-color="#0031a2"/><stop offset="0.292" stop-color="#1f2da5"/><stop offset="0.333" stop-color="#4327a7"/><stop offset="0.375" stop-color="#6b20a9"/><stop offset="0.417" stop-color="#9717a9"/><stop offset="0.458" stop-color="#a10b88"/><stop offset="0.500" stop-color="#960263"/><stop offset="0.542" stop-color="#8d004a"/><stop offset="0.583" stop-color="#860039"/><stop offset="0.625" stop-color="#7e002c"/><stop offset="0.667" stop-color="#780022"/><stop offset="0.708" stop-color="#71001b"/><stop offset="0.750" stop-color="#6b0015"/><stop offset="0.792" stop-color="#650010"/><stop offset="0.833" stop-color="#60000c"/><stop offset="0.875" stop-color="#5a0009"/><stop offset="0.917" stop-color="#540007"/><stop offset="0.958" stop-color="#4f0005"/><stop offset="1.000" stop-color="#4a0003"/></linearGradient><linearGradient id="fbo55" gradientUnits="userSpaceOnUse" x1="855.8" y1="0" x2="1321.8" y2="0"><stop offset="0.000" stop-color="#003b8a"/><stop offset="0.042" stop-color="#003a8e"/><stop offset="0.083" stop-color="#003892"/><stop offset="0.125" stop-color="#003696"/><stop offset="0.167" stop-color="#00339a"/><stop offset="0.208" stop-color="#002f9d"/><stop offset="0.250" stop-color="#032ba0"/><stop offset="0.292" stop-color="#2125a3"/><stop offset="0.333" stop-color="#441fa5"/><stop offset="0.375" stop-color="#6a18a7"/><stop offset="0.417" stop-color="#950fa7"/><stop offset="0.458" stop-color="#a00588"/><stop offset="0.500" stop-color="#950063"/><stop offset="0.542" stop-color="#8c004b"/><stop offset="0.583" stop-color="#85003a"/><stop offset="0.625" stop-color="#7e002d"/><stop offset="0.667" stop-color="#770023"/><stop offset="0.708" stop-color="#71001c"/><stop offset="0.750" stop-color="#6b0016"/><stop offset="0.792" stop-color="#650011"/><stop offset="0.833" stop-color="#5f000d"/><stop offset="0.875" stop-color="#5a000a"/><stop offset="0.917" stop-color="#540007"/><stop offset="0.958" stop-color="#4f0005"/><stop offset="1.000" stop-color="#490004"/></linearGradient><linearGradient id="fbo56" gradientUnits="userSpaceOnUse" x1="855.8" y1="0" x2="1321.8" y2="0"><stop offset="0.000" stop-color="#003689"/><stop offset="0.042" stop-color="#00358d"/><stop offset="0.083" stop-color="#003391"/><stop offset="0.125" stop-color="#003095"/><stop offset="0.167" stop-color="#002d99"/><stop offset="0.208" stop-color="#00299c"/><stop offset="0.250" stop-color="#06249f"/><stop offset="0.292" stop-color="#231ea2"/><stop offset="0.333" stop-color="#4518a4"/><stop offset="0.375" stop-color="#6a11a5"/><stop offset="0.417" stop-color="#9308a6"/><stop offset="0.458" stop-color="#9e0088"/><stop offset="0.500" stop-color="#940064"/><stop offset="0.542" stop-color="#8b004c"/><stop offset="0.583" stop-color="#84003b"/><stop offset="0.625" stop-color="#7d002e"/><stop offset="0.667" stop-color="#760024"/><stop offset="0.708" stop-color="#70001d"/><stop offset="0.750" stop-color="#6a0017"/><stop offset="0.792" stop-color="#640012"/><stop offset="0.833" stop-color="#5f000e"/><stop offset="0.875" stop-color="#59000b"/><stop offset="0.917" stop-color="#540008"/><stop offset="0.958" stop-color="#4e0006"/><stop offset="1.000" stop-color="#490004"/></linearGradient><linearGradient id="fbo57" gradientUnits="userSpaceOnUse" x1="855.8" y1="0" x2="1321.8" y2="0"><stop offset="0.000" stop-color="#003188"/><stop offset="0.042" stop-color="#00308c"/><stop offset="0.083" stop-color="#002d90"/><stop offset="0.125" stop-color="#002a94"/><stop offset="0.167" stop-color="#002797"/><stop offset="0.208" stop-color="#00239b"/><stop offset="0.250" stop-color="#091e9e"/><stop offset="0.292" stop-color="#2518a0"/><stop offset="0.333" stop-color="#4611a2"/><stop offset="0.375" stop-color="#6a0aa3"/><stop offset="0.417" stop-color="#9101a4"/><stop offset="0.458" stop-color="#9d0088"/><stop offset="0.500" stop-color="#920065"/><stop offset="0.542" stop-color="#8a004d"/><stop offset="0.583" stop-color="#83003c"/><stop offset="0.625" stop-color="#7c002f"/><stop offset="0.667" stop-color="#760025"/><stop offset="0.708" stop-color="#70001e"/><stop offset="0.750" stop-color="#6a0017"/><stop offset="0.792" stop-color="#640012"/><stop offset="0.833" stop-color="#5e000e"/><stop offset="0.875" stop-color="#59000b"/><stop offset="0.917" stop-color="#530008"/><stop offset="0.958" stop-color="#4e0006"/><stop offset="1.000" stop-color="#490004"/></linearGradient><linearGradient id="fbo58" gradientUnits="userSpaceOnUse" x1="855.8" y1="0" x2="1321.8" y2="0"><stop offset="0.000" stop-color="#002d87"/><stop offset="0.042" stop-color="#002b8b"/><stop offset="0.083" stop-color="#00288f"/><stop offset="0.125" stop-color="#002593"/><stop offset="0.167" stop-color="#002196"/><stop offset="0.208" stop-color="#001d99"/><stop offset="0.250" stop-color="#0b189c"/><stop offset="0.292" stop-color="#27129e"/><stop offset="0.333" stop-color="#460ba0"/><stop offset="0.375" stop-color="#6904a1"/><stop offset="0.417" stop-color="#8f00a2"/><stop offset="0.458" stop-color="#9b0087"/><stop offset="0.500" stop-color="#910065"/><stop offset="0.542" stop-color="#89004d"/><stop offset="0.583" stop-color="#82003d"/><stop offset="0.625" stop-color="#7b0030"/><stop offset="0.667" stop-color="#750026"/><stop offset="0.708" stop-color="#6f001e"/><stop offset="0.750" stop-color="#690018"/><stop offset="0.792" stop-color="#630013"/><stop offset="0.833" stop-color="#5e000f"/><stop offset="0.875" stop-color="#58000c"/><stop offset="0.917" stop-color="#530009"/><stop offset="0.958" stop-color="#4e0007"/><stop offset="1.000" stop-color="#480005"/></linearGradient><linearGradient id="fbo59" gradientUnits="userSpaceOnUse" x1="855.8" y1="0" x2="1321.8" y2="0"><stop offset="0.000" stop-color="#002986"/><stop offset="0.042" stop-color="#00268a"/><stop offset="0.083" stop-color="#00248e"/><stop offset="0.125" stop-color="#002091"/><stop offset="0.167" stop-color="#001c95"/><stop offset="0.208" stop-color="#001898"/><stop offset="0.250" stop-color="#0d129b"/><stop offset="0.292" stop-color="#290c9d"/><stop offset="0.333" stop-color="#47069f"/><stop offset="0.375" stop-color="#6900a0"/><stop offset="0.417" stop-color="#8d00a0"/><stop offset="0.458" stop-color="#9a0087"/><stop offset="0.500" stop-color="#900065"/><stop offset="0.542" stop-color="#88004e"/><stop offset="0.583" stop-color="#81003d"/><stop offset="0.625" stop-color="#7a0031"/><stop offset="0.667" stop-color="#740027"/><stop offset="0.708" stop-color="#6e001f"/><stop offset="0.750" stop-color="#680019"/><stop offset="0.792" stop-color="#630014"/><stop offset="0.833" stop-color="#5d0010"/><stop offset="0.875" stop-color="#58000c"/><stop offset="0.917" stop-color="#52000a"/><stop offset="0.958" stop-color="#4d0007"/><stop offset="1.000" stop-color="#480005"/></linearGradient><linearGradient id="fbo60" gradientUnits="userSpaceOnUse" x1="855.8" y1="0" x2="1321.8" y2="0"><stop offset="0.000" stop-color="#002485"/><stop offset="0.042" stop-color="#002289"/><stop offset="0.083" stop-color="#001f8d"/><stop offset="0.125" stop-color="#001b90"/><stop offset="0.167" stop-color="#001793"/><stop offset="0.208" stop-color="#001396"/><stop offset="0.250" stop-color="#100d99"/><stop offset="0.292" stop-color="#2a079b"/><stop offset="0.333" stop-color="#48009d"/><stop offset="0.375" stop-color="#68009e"/><stop offset="0.417" stop-color="#8c009e"/><stop offset="0.458" stop-color="#980087"/><stop offset="0.500" stop-color="#8f0065"/><stop offset="0.542" stop-color="#86004f"/><stop offset="0.583" stop-color="#7f003e"/><stop offset="0.625" stop-color="#790031"/><stop offset="0.667" stop-color="#730028"/><stop offset="0.708" stop-color="#6d0020"/><stop offset="0.750" stop-color="#67001a"/><stop offset="0.792" stop-color="#620015"/><stop offset="0.833" stop-color="#5c0010"/><stop offset="0.875" stop-color="#57000d"/><stop offset="0.917" stop-color="#52000a"/><stop offset="0.958" stop-color="#4d0008"/><stop offset="1.000" stop-color="#470006"/></linearGradient><linearGradient id="fbo61" gradientUnits="userSpaceOnUse" x1="855.8" y1="0" x2="1321.8" y2="0"><stop offset="0.000" stop-color="#002084"/><stop offset="0.042" stop-color="#001e88"/><stop offset="0.083" stop-color="#001b8b"/><stop offset="0.125" stop-color="#00178f"/><stop offset="0.167" stop-color="#001392"/><stop offset="0.208" stop-color="#000e95"/><stop offset="0.250" stop-color="#120897"/><stop offset="0.292" stop-color="#2b0299"/><stop offset="0.333" stop-color="#48009b"/><stop offset="0.375" stop-color="#67009c"/><stop offset="0.417" stop-color="#8a009c"/><stop offset="0.458" stop-color="#970086"/><stop offset="0.500" stop-color="#8d0066"/><stop offset="0.542" stop-color="#85004f"/><stop offset="0.583" stop-color="#7e003e"/><stop offset="0.625" stop-color="#780032"/><stop offset="0.667" stop-color="#720028"/><stop offset="0.708" stop-color="#6c0020"/><stop offset="0.750" stop-color="#67001a"/><stop offset="0.792" stop-color="#610015"/><stop offset="0.833" stop-color="#5c0011"/><stop offset="0.875" stop-color="#57000d"/><stop offset="0.917" stop-color="#51000b"/><stop offset="0.958" stop-color="#4c0008"/><stop offset="1.000" stop-color="#470006"/></linearGradient><linearGradient id="fbo62" gradientUnits="userSpaceOnUse" x1="855.8" y1="0" x2="1321.8" y2="0"><stop offset="0.000" stop-color="#001d83"/><stop offset="0.042" stop-color="#001a87"/><stop offset="0.083" stop-color="#00168a"/><stop offset="0.125" stop-color="#00138e"/><stop offset="0.167" stop-color="#000e91"/><stop offset="0.208" stop-color="#000993"/><stop offset="0.250" stop-color="#140496"/><stop offset="0.292" stop-color="#2d0098"/><stop offset="0.333" stop-color="#480099"/><stop offset="0.375" stop-color="#67009a"/><stop offset="0.417" stop-color="#88009b"/><stop offset="0.458" stop-color="#950086"/><stop offset="0.500" stop-color="#8c0066"/><stop offset="0.542" stop-color="#84004f"/><stop offset="0.583" stop-color="#7d003f"/><stop offset="0.625" stop-color="#770033"/><stop offset="0.667" stop-color="#710029"/><stop offset="0.708" stop-color="#6b0021"/><stop offset="0.750" stop-color="#66001b"/><stop offset="0.792" stop-color="#600016"/><stop offset="0.833" stop-color="#5b0011"/><stop offset="0.875" stop-color="#56000e"/><stop offset="0.917" stop-color="#51000b"/><stop offset="0.958" stop-color="#4c0009"/><stop offset="1.000" stop-color="#460007"/></linearGradient><linearGradient id="fbo63" gradientUnits="userSpaceOnUse" x1="855.8" y1="0" x2="1321.8" y2="0"><stop offset="0.000" stop-color="#001982"/><stop offset="0.042" stop-color="#001686"/><stop offset="0.083" stop-color="#001389"/><stop offset="0.125" stop-color="#000f8c"/><stop offset="0.167" stop-color="#000a8f"/><stop offset="0.208" stop-color="#000592"/><stop offset="0.250" stop-color="#150094"/><stop offset="0.292" stop-color="#2e0096"/><stop offset="0.333" stop-color="#490097"/><stop offset="0.375" stop-color="#660098"/><stop offset="0.417" stop-color="#860099"/><stop offset="0.458" stop-color="#940085"/><stop offset="0.500" stop-color="#8a0066"/><stop offset="0.542" stop-color="#830050"/><stop offset="0.583" stop-color="#7c003f"/><stop offset="0.625" stop-color="#760033"/><stop offset="0.667" stop-color="#700029"/><stop offset="0.708" stop-color="#6a0022"/><stop offset="0.750" stop-color="#65001b"/><stop offset="0.792" stop-color="#600016"/><stop offset="0.833" stop-color="#5a0012"/><stop offset="0.875" stop-color="#55000e"/><stop offset="0.917" stop-color="#50000c"/><stop offset="0.958" stop-color="#4b0009"/><stop offset="1.000" stop-color="#460007"/></linearGradient><linearGradient id="fbo64" gradientUnits="userSpaceOnUse" x1="855.8" y1="0" x2="1321.8" y2="0"><stop offset="0.000" stop-color="#001581"/><stop offset="0.042" stop-color="#001284"/><stop offset="0.083" stop-color="#000f88"/><stop offset="0.125" stop-color="#000b8b"/><stop offset="0.167" stop-color="#00068e"/><stop offset="0.208" stop-color="#020190"/><stop offset="0.250" stop-color="#170092"/><stop offset="0.292" stop-color="#2f0094"/><stop offset="0.333" stop-color="#490096"/><stop offset="0.375" stop-color="#650097"/><stop offset="0.417" stop-color="#840097"/><stop offset="0.458" stop-color="#920085"/><stop offset="0.500" stop-color="#890066"/><stop offset="0.542" stop-color="#810050"/><stop offset="0.583" stop-color="#7b0040"/><stop offset="0.625" stop-color="#750034"/><stop offset="0.667" stop-color="#6f002a"/><stop offset="0.708" stop-color="#690022"/><stop offset="0.750" stop-color="#64001c"/><stop offset="0.792" stop-color="#5f0017"/><stop offset="0.833" stop-color="#590013"/><stop offset="0.875" stop-color="#54000f"/><stop offset="0.917" stop-color="#4f000c"/><stop offset="0.958" stop-color="#4a000a"/><stop offset="1.000" stop-color="#450007"/></linearGradient><linearGradient id="fbo65" gradientUnits="userSpaceOnUse" x1="855.8" y1="0" x2="1321.8" y2="0"><stop offset="0.000" stop-color="#001280"/><stop offset="0.042" stop-color="#000f83"/><stop offset="0.083" stop-color="#000b86"/><stop offset="0.125" stop-color="#000789"/><stop offset="0.167" stop-color="#00038c"/><stop offset="0.208" stop-color="#04008f"/><stop offset="0.250" stop-color="#190091"/><stop offset="0.292" stop-color="#300093"/><stop offset="0.333" stop-color="#490094"/><stop offset="0.375" stop-color="#650095"/><stop offset="0.417" stop-color="#830095"/><stop offset="0.458" stop-color="#910084"/><stop offset="0.500" stop-color="#880066"/><stop offset="0.542" stop-color="#800050"/><stop offset="0.583" stop-color="#790040"/><stop offset="0.625" stop-color="#730034"/><stop offset="0.667" stop-color="#6e002a"/><stop offset="0.708" stop-color="#680023"/><stop offset="0.750" stop-color="#63001c"/><stop offset="0.792" stop-color="#5e0017"/><stop offset="0.833" stop-color="#590013"/><stop offset="0.875" stop-color="#54000f"/><stop offset="0.917" stop-color="#4f000c"/><stop offset="0.958" stop-color="#4a000a"/><stop offset="1.000" stop-color="#450008"/></linearGradient><linearGradient id="fbo66" gradientUnits="userSpaceOnUse" x1="855.8" y1="0" x2="1321.8" y2="0"><stop offset="0.000" stop-color="#000f7e"/><stop offset="0.042" stop-color="#000c82"/><stop offset="0.083" stop-color="#000885"/><stop offset="0.125" stop-color="#000488"/><stop offset="0.167" stop-color="#00008b"/><stop offset="0.208" stop-color="#06008d"/><stop offset="0.250" stop-color="#1a008f"/><stop offset="0.292" stop-color="#310091"/><stop offset="0.333" stop-color="#490092"/><stop offset="0.375" stop-color="#640093"/><stop offset="0.417" stop-color="#810093"/><stop offset="0.458" stop-color="#8f0084"/><stop offset="0.500" stop-color="#860065"/><stop offset="0.542" stop-color="#7f0050"/><stop offset="0.583" stop-color="#780040"/><stop offset="0.625" stop-color="#720034"/><stop offset="0.667" stop-color="#6d002b"/><stop offset="0.708" stop-color="#670023"/><stop offset="0.750" stop-color="#62001d"/><stop offset="0.792" stop-color="#5d0018"/><stop offset="0.833" stop-color="#580013"/><stop offset="0.875" stop-color="#530010"/><stop offset="0.917" stop-color="#4e000d"/><stop offset="0.958" stop-color="#49000a"/><stop offset="1.000" stop-color="#440008"/></linearGradient><linearGradient id="fbo67" gradientUnits="userSpaceOnUse" x1="855.8" y1="0" x2="1321.8" y2="0"><stop offset="0.000" stop-color="#000c7d"/><stop offset="0.042" stop-color="#000880"/><stop offset="0.083" stop-color="#000584"/><stop offset="0.125" stop-color="#000086"/><stop offset="0.167" stop-color="#000089"/><stop offset="0.208" stop-color="#08008b"/><stop offset="0.250" stop-color="#1b008d"/><stop offset="0.292" stop-color="#31008f"/><stop offset="0.333" stop-color="#490090"/><stop offset="0.375" stop-color="#630091"/><stop offset="0.417" stop-color="#7f0091"/><stop offset="0.458" stop-color="#8d0083"/><stop offset="0.500" stop-color="#850065"/><stop offset="0.542" stop-color="#7d0050"/><stop offset="0.583" stop-color="#770041"/><stop offset="0.625" stop-color="#710035"/><stop offset="0.667" stop-color="#6b002b"/><stop offset="0.708" stop-color="#660024"/><stop offset="0.750" stop-color="#61001d"/><stop offset="0.792" stop-color="#5c0018"/><stop offset="0.833" stop-color="#570014"/><stop offset="0.875" stop-color="#520010"/><stop offset="0.917" stop-color="#4d000d"/><stop offset="0.958" stop-color="#48000b"/><stop offset="1.000" stop-color="#430008"/></linearGradient><linearGradient id="fbo68" gradientUnits="userSpaceOnUse" x1="855.8" y1="0" x2="1321.8" y2="0"><stop offset="0.000" stop-color="#00097c"/><stop offset="0.042" stop-color="#00057f"/><stop offset="0.083" stop-color="#000282"/><stop offset="0.125" stop-color="#000085"/><stop offset="0.167" stop-color="#000088"/><stop offset="0.208" stop-color="#09008a"/><stop offset="0.250" stop-color="#1d008c"/><stop offset="0.292" stop-color="#32008d"/><stop offset="0.333" stop-color="#49008f"/><stop offset="0.375" stop-color="#62008f"/><stop offset="0.417" stop-color="#7d0090"/><stop offset="0.458" stop-color="#8c0082"/><stop offset="0.500" stop-color="#830065"/><stop offset="0.542" stop-color="#7c0050"/><stop offset="0.583" stop-color="#750041"/><stop offset="0.625" stop-color="#700035"/><stop offset="0.667" stop-color="#6a002b"/><stop offset="0.708" stop-color="#650024"/><stop offset="0.750" stop-color="#60001e"/><stop offset="0.792" stop-color="#5b0018"/><stop offset="0.833" stop-color="#560014"/><stop offset="0.875" stop-color="#510011"/><stop offset="0.917" stop-color="#4c000e"/><stop offset="0.958" stop-color="#47000b"/><stop offset="1.000" stop-color="#420009"/></linearGradient><linearGradient id="fbo69" gradientUnits="userSpaceOnUse" x1="855.8" y1="0" x2="1321.8" y2="0"><stop offset="0.000" stop-color="#00067b"/><stop offset="0.042" stop-color="#00037e"/><stop offset="0.083" stop-color="#000081"/><stop offset="0.125" stop-color="#000083"/><stop offset="0.167" stop-color="#000086"/><stop offset="0.208" stop-color="#0b0088"/><stop offset="0.250" stop-color="#1e008a"/><stop offset="0.292" stop-color="#32008c"/><stop offset="0.333" stop-color="#49008d"/><stop offset="0.375" stop-color="#61008e"/><stop offset="0.417" stop-color="#7c008e"/><stop offset="0.458" stop-color="#8a0081"/><stop offset="0.500" stop-color="#820065"/><stop offset="0.542" stop-color="#7a0050"/><stop offset="0.583" stop-color="#740041"/><stop offset="0.625" stop-color="#6e0035"/><stop offset="0.667" stop-color="#69002c"/><stop offset="0.708" stop-color="#640024"/><stop offset="0.750" stop-color="#5f001e"/><stop offset="0.792" stop-color="#5a0019"/><stop offset="0.833" stop-color="#550015"/><stop offset="0.875" stop-color="#500011"/><stop offset="0.917" stop-color="#4b000e"/><stop offset="0.958" stop-color="#46000b"/><stop offset="1.000" stop-color="#420009"/></linearGradient><linearGradient id="fbi0" gradientUnits="userSpaceOnUse" x1="948.3" y1="0" x2="1262.0" y2="0"><stop offset="0.000" stop-color="#00ff28"/><stop offset="0.062" stop-color="#00ff21"/><stop offset="0.125" stop-color="#00ff1a"/><stop offset="0.188" stop-color="#00ff12"/><stop offset="0.250" stop-color="#00ff09"/><stop offset="0.312" stop-color="#03ff00"/><stop offset="0.375" stop-color="#28ff00"/><stop offset="0.438" stop-color="#50ff00"/><stop offset="0.500" stop-color="#7bff00"/><stop offset="0.562" stop-color="#aaff00"/><stop offset="0.625" stop-color="#deff00"/><stop offset="0.688" stop-color="#ffe900"/><stop offset="0.750" stop-color="#fdbd00"/><stop offset="0.812" stop-color="#f99b00"/><stop offset="0.875" stop-color="#f17e00"/><stop offset="0.938" stop-color="#e66600"/><stop offset="1.000" stop-color="#d85200"/></linearGradient><linearGradient id="fbi1" gradientUnits="userSpaceOnUse" x1="948.3" y1="0" x2="1262.0" y2="0"><stop offset="0.000" stop-color="#00ff2d"/><stop offset="0.062" stop-color="#00ff26"/><stop offset="0.125" stop-color="#00ff1f"/><stop offset="0.188" stop-color="#00ff17"/><stop offset="0.250" stop-color="#00ff0e"/><stop offset="0.312" stop-color="#07ff05"/><stop offset="0.375" stop-color="#2dff00"/><stop offset="0.438" stop-color="#56ff00"/><stop offset="0.500" stop-color="#83ff00"/><stop offset="0.562" stop-color="#b5ff00"/><stop offset="0.625" stop-color="#eaff00"/><stop offset="0.688" stop-color="#ffdd00"/><stop offset="0.750" stop-color="#fdb400"/><stop offset="0.812" stop-color="#f89200"/><stop offset="0.875" stop-color="#f07700"/><stop offset="0.938" stop-color="#e56000"/><stop offset="1.000" stop-color="#d74d00"/></linearGradient><linearGradient id="fbi2" gradientUnits="userSpaceOnUse" x1="948.3" y1="0" x2="1262.0" y2="0"><stop offset="0.000" stop-color="#00ff32"/><stop offset="0.062" stop-color="#00ff2b"/><stop offset="0.125" stop-color="#00ff24"/><stop offset="0.188" stop-color="#00ff1c"/><stop offset="0.250" stop-color="#00ff13"/><stop offset="0.312" stop-color="#0bff0a"/><stop offset="0.375" stop-color="#33ff00"/><stop offset="0.438" stop-color="#5dff00"/><stop offset="0.500" stop-color="#8cff00"/><stop offset="0.562" stop-color="#bfff00"/><stop offset="0.625" stop-color="#f8ff00"/><stop offset="0.688" stop-color="#ffd200"/><stop offset="0.750" stop-color="#fdaa00"/><stop offset="0.812" stop-color="#f78a00"/><stop offset="0.875" stop-color="#ef7000"/><stop offset="0.938" stop-color="#e35b00"/><stop offset="1.000" stop-color="#d54800"/></linearGradient><linearGradient id="fbi3" gradientUnits="userSpaceOnUse" x1="948.3" y1="0" x2="1262.0" y2="0"><stop offset="0.000" stop-color="#00ff38"/><stop offset="0.062" stop-color="#00ff31"/><stop offset="0.125" stop-color="#00ff29"/><stop offset="0.188" stop-color="#00ff21"/><stop offset="0.250" stop-color="#00ff19"/><stop offset="0.312" stop-color="#0fff0f"/><stop offset="0.375" stop-color="#38ff05"/><stop offset="0.438" stop-color="#65ff00"/><stop offset="0.500" stop-color="#95ff00"/><stop offset="0.562" stop-color="#cbff00"/><stop offset="0.625" stop-color="#fff900"/><stop offset="0.688" stop-color="#ffc700"/><stop offset="0.750" stop-color="#fca100"/><stop offset="0.812" stop-color="#f68300"/><stop offset="0.875" stop-color="#ee6a00"/><stop offset="0.938" stop-color="#e25500"/><stop offset="1.000" stop-color="#d34400"/></linearGradient><linearGradient id="fbi4" gradientUnits="userSpaceOnUse" x1="948.3" y1="0" x2="1262.0" y2="0"><stop offset="0.000" stop-color="#00ff3d"/><stop offset="0.062" stop-color="#00ff36"/><stop offset="0.125" stop-color="#00ff2f"/><stop offset="0.188" stop-color="#00ff27"/><stop offset="0.250" stop-color="#00ff1e"/><stop offset="0.312" stop-color="#14ff15"/><stop offset="0.375" stop-color="#3fff0b"/><stop offset="0.438" stop-color="#6dff00"/><stop offset="0.500" stop-color="#9fff00"/><stop offset="0.562" stop-color="#d7ff00"/><stop offset="0.625" stop-color="#ffeb00"/><stop offset="0.688" stop-color="#ffbc00"/><stop offset="0.750" stop-color="#fc9800"/><stop offset="0.812" stop-color="#f67b00"/><stop offset="0.875" stop-color="#ed6300"/><stop offset="0.938" stop-color="#e15000"/><stop offset="1.000" stop-color="#d23f00"/></linearGradient><linearGradient id="fbi5" gradientUnits="userSpaceOnUse" x1="948.3" y1="0" x2="1262.0" y2="0"><stop offset="0.000" stop-color="#00ff43"/><stop offset="0.062" stop-color="#00ff3c"/><stop offset="0.125" stop-color="#00ff35"/><stop offset="0.188" stop-color="#00ff2d"/><stop offset="0.250" stop-color="#00ff24"/><stop offset="0.312" stop-color="#19ff1b"/><stop offset="0.375" stop-color="#45ff11"/><stop offset="0.438" stop-color="#75ff05"/><stop offset="0.500" stop-color="#aaff00"/><stop offset="0.562" stop-color="#e4ff00"/><stop offset="0.625" stop-color="#ffde00"/><stop offset="0.688" stop-color="#feb200"/><stop offset="0.750" stop-color="#fb8f00"/><stop offset="0.812" stop-color="#f57400"/><stop offset="0.875" stop-color="#ec5d00"/><stop offset="0.938" stop-color="#df4a00"/><stop offset="1.000" stop-color="#d03a00"/></linearGradient><linearGradient id="fbi6" gradientUnits="userSpaceOnUse" x1="948.3" y1="0" x2="1262.0" y2="0"><stop offset="0.000" stop-color="#00ff49"/><stop offset="0.062" stop-color="#00ff42"/><stop offset="0.125" stop-color="#00ff3b"/><stop offset="0.188" stop-color="#00ff33"/><stop offset="0.250" stop-color="#00ff2b"/><stop offset="0.312" stop-color="#1fff21"/><stop offset="0.375" stop-color="#4cff17"/><stop offset="0.438" stop-color="#7eff0c"/><stop offset="0.500" stop-color="#b5ff00"/><stop offset="0.562" stop-color="#f3ff00"/><stop offset="0.625" stop-color="#ffd100"/><stop offset="0.688" stop-color="#fea700"/><stop offset="0.750" stop-color="#fb8700"/><stop offset="0.812" stop-color="#f46d00"/><stop offset="0.875" stop-color="#ea5700"/><stop offset="0.938" stop-color="#de4500"/><stop offset="1.000" stop-color="#ce3600"/></linearGradient><linearGradient id="fbi7" gradientUnits="userSpaceOnUse" x1="948.3" y1="0" x2="1262.0" y2="0"><stop offset="0.000" stop-color="#00ff50"/><stop offset="0.062" stop-color="#00ff49"/><stop offset="0.125" stop-color="#00ff42"/><stop offset="0.188" stop-color="#00ff3a"/><stop offset="0.250" stop-color="#00ff31"/><stop offset="0.312" stop-color="#24ff28"/><stop offset="0.375" stop-color="#54ff1e"/><stop offset="0.438" stop-color="#88ff12"/><stop offset="0.500" stop-color="#c2ff06"/><stop offset="0.562" stop-color="#fffc00"/><stop offset="0.625" stop-color="#ffc500"/><stop offset="0.688" stop-color="#fe9e00"/><stop offset="0.750" stop-color="#fa7f00"/><stop offset="0.812" stop-color="#f36600"/><stop offset="0.875" stop-color="#e95100"/><stop offset="0.938" stop-color="#dc4000"/><stop offset="1.000" stop-color="#cc3200"/></linearGradient><linearGradient id="fbi8" gradientUnits="userSpaceOnUse" x1="948.3" y1="0" x2="1262.0" y2="0"><stop offset="0.000" stop-color="#00ff57"/><stop offset="0.062" stop-color="#00ff50"/><stop offset="0.125" stop-color="#00ff49"/><stop offset="0.188" stop-color="#00ff41"/><stop offset="0.250" stop-color="#00ff38"/><stop offset="0.312" stop-color="#2aff2f"/><stop offset="0.375" stop-color="#5cff25"/><stop offset="0.438" stop-color="#92ff19"/><stop offset="0.500" stop-color="#cfff0d"/><stop offset="0.562" stop-color="#ffed00"/><stop offset="0.625" stop-color="#ffb900"/><stop offset="0.688" stop-color="#fe9400"/><stop offset="0.750" stop-color="#f97700"/><stop offset="0.812" stop-color="#f25f00"/><stop offset="0.875" stop-color="#e84c00"/><stop offset="0.938" stop-color="#db3b00"/><stop offset="1.000" stop-color="#ca2e00"/></linearGradient><linearGradient id="fbi9" gradientUnits="userSpaceOnUse" x1="948.3" y1="0" x2="1262.0" y2="0"><stop offset="0.000" stop-color="#00ff5e"/><stop offset="0.062" stop-color="#00ff57"/><stop offset="0.125" stop-color="#00ff50"/><stop offset="0.188" stop-color="#00ff49"/><stop offset="0.250" stop-color="#02ff40"/><stop offset="0.312" stop-color="#31ff37"/><stop offset="0.375" stop-color="#64ff2c"/><stop offset="0.438" stop-color="#9dff21"/><stop offset="0.500" stop-color="#ddff14"/><stop offset="0.562" stop-color="#ffde05"/><stop offset="0.625" stop-color="#ffae00"/><stop offset="0.688" stop-color="#fd8b00"/><stop offset="0.750" stop-color="#f96f00"/><stop offset="0.812" stop-color="#f15800"/><stop offset="0.875" stop-color="#e74600"/><stop offset="0.938" stop-color="#d93700"/><stop offset="1.000" stop-color="#c82a00"/></linearGradient><linearGradient id="fbi10" gradientUnits="userSpaceOnUse" x1="948.3" y1="0" x2="1262.0" y2="0"><stop offset="0.000" stop-color="#00ff66"/><stop offset="0.062" stop-color="#00ff5f"/><stop offset="0.125" stop-color="#00ff58"/><stop offset="0.188" stop-color="#00ff51"/><stop offset="0.250" stop-color="#07ff48"/><stop offset="0.312" stop-color="#38ff3f"/><stop offset="0.375" stop-color="#6dff35"/><stop offset="0.438" stop-color="#a9ff29"/><stop offset="0.500" stop-color="#ecff1d"/><stop offset="0.562" stop-color="#ffd00c"/><stop offset="0.625" stop-color="#ffa300"/><stop offset="0.688" stop-color="#fd8200"/><stop offset="0.750" stop-color="#f86700"/><stop offset="0.812" stop-color="#f05200"/><stop offset="0.875" stop-color="#e54100"/><stop offset="0.938" stop-color="#d73200"/><stop offset="1.000" stop-color="#c62600"/></linearGradient><linearGradient id="fbi11" gradientUnits="userSpaceOnUse" x1="948.3" y1="0" x2="1262.0" y2="0"><stop offset="0.000" stop-color="#00ff6e"/><stop offset="0.062" stop-color="#00ff67"/><stop offset="0.125" stop-color="#00ff61"/><stop offset="0.188" stop-color="#00ff59"/><stop offset="0.250" stop-color="#0cff51"/><stop offset="0.312" stop-color="#3fff48"/><stop offset="0.375" stop-color="#77ff3e"/><stop offset="0.438" stop-color="#b6ff32"/><stop offset="0.500" stop-color="#fdff26"/><stop offset="0.562" stop-color="#ffc312"/><stop offset="0.625" stop-color="#ff9904"/><stop offset="0.688" stop-color="#fd7900"/><stop offset="0.750" stop-color="#f76000"/><stop offset="0.812" stop-color="#ef4c00"/><stop offset="0.875" stop-color="#e43b00"/><stop offset="0.938" stop-color="#d62e00"/><stop offset="1.000" stop-color="#c42200"/></linearGradient><linearGradient id="fbi12" gradientUnits="userSpaceOnUse" x1="948.3" y1="0" x2="1262.0" y2="0"><stop offset="0.000" stop-color="#00ff76"/><stop offset="0.062" stop-color="#00ff70"/><stop offset="0.125" stop-color="#00ff6a"/><stop offset="0.188" stop-color="#00ff62"/><stop offset="0.250" stop-color="#12ff5a"/><stop offset="0.312" stop-color="#47ff51"/><stop offset="0.375" stop-color="#82ff47"/><stop offset="0.438" stop-color="#c4ff3c"/><stop offset="0.500" stop-color="#ffef2d"/><stop offset="0.562" stop-color="#ffb618"/><stop offset="0.625" stop-color="#ff8f09"/><stop offset="0.688" stop-color="#fc7100"/><stop offset="0.750" stop-color="#f75900"/><stop offset="0.812" stop-color="#ee4600"/><stop offset="0.875" stop-color="#e33600"/><stop offset="0.938" stop-color="#d42900"/><stop offset="1.000" stop-color="#c21e00"/></linearGradient><linearGradient id="fbi13" gradientUnits="userSpaceOnUse" x1="948.3" y1="0" x2="1262.0" y2="0"><stop offset="0.000" stop-color="#00ff7f"/><stop offset="0.062" stop-color="#00ff7a"/><stop offset="0.125" stop-color="#00ff73"/><stop offset="0.188" stop-color="#00ff6c"/><stop offset="0.250" stop-color="#18ff64"/><stop offset="0.312" stop-color="#50ff5c"/><stop offset="0.375" stop-color="#8eff52"/><stop offset="0.438" stop-color="#d4ff47"/><stop offset="0.500" stop-color="#ffdf33"/><stop offset="0.562" stop-color="#ffaa1d"/><stop offset="0.625" stop-color="#ff850e"/><stop offset="0.688" stop-color="#fc6803"/><stop offset="0.750" stop-color="#f65200"/><stop offset="0.812" stop-color="#ed4000"/><stop offset="0.875" stop-color="#e13100"/><stop offset="0.938" stop-color="#d22500"/><stop offset="1.000" stop-color="#c01b00"/></linearGradient><linearGradient id="fbi14" gradientUnits="userSpaceOnUse" x1="948.3" y1="0" x2="1262.0" y2="0"><stop offset="0.000" stop-color="#00ff89"/><stop offset="0.062" stop-color="#00ff84"/><stop offset="0.125" stop-color="#00ff7e"/><stop offset="0.188" stop-color="#00ff77"/><stop offset="0.250" stop-color="#1fff6f"/><stop offset="0.312" stop-color="#59ff67"/><stop offset="0.375" stop-color="#9aff5d"/><stop offset="0.438" stop-color="#e5ff53"/><stop offset="0.500" stop-color="#ffcf39"/><stop offset="0.562" stop-color="#ff9e23"/><stop offset="0.625" stop-color="#ff7b13"/><stop offset="0.688" stop-color="#fb6107"/><stop offset="0.750" stop-color="#f54b00"/><stop offset="0.812" stop-color="#ec3a00"/><stop offset="0.875" stop-color="#e02c00"/><stop offset="0.938" stop-color="#d02100"/><stop offset="1.000" stop-color="#be1800"/></linearGradient><linearGradient id="fbi15" gradientUnits="userSpaceOnUse" x1="948.3" y1="0" x2="1262.0" y2="0"><stop offset="0.000" stop-color="#00ff94"/><stop offset="0.062" stop-color="#00ff8e"/><stop offset="0.125" stop-color="#00ff89"/><stop offset="0.188" stop-color="#00ff82"/><stop offset="0.250" stop-color="#26ff7b"/><stop offset="0.312" stop-color="#63ff73"/><stop offset="0.375" stop-color="#a8ff6a"/><stop offset="0.438" stop-color="#f7ff5f"/><stop offset="0.500" stop-color="#ffc03f"/><stop offset="0.562" stop-color="#ff9228"/><stop offset="0.625" stop-color="#fe7218"/><stop offset="0.688" stop-color="#fb590b"/><stop offset="0.750" stop-color="#f44502"/><stop offset="0.812" stop-color="#eb3500"/><stop offset="0.875" stop-color="#de2800"/><stop offset="0.938" stop-color="#cf1d00"/><stop offset="1.000" stop-color="#bc1400"/></linearGradient><linearGradient id="fbi16" gradientUnits="userSpaceOnUse" x1="948.3" y1="0" x2="1262.0" y2="0"><stop offset="0.000" stop-color="#00ff9f"/><stop offset="0.062" stop-color="#00ff9a"/><stop offset="0.125" stop-color="#00ff95"/><stop offset="0.188" stop-color="#00ff8f"/><stop offset="0.250" stop-color="#2eff88"/><stop offset="0.312" stop-color="#6eff80"/><stop offset="0.375" stop-color="#b8ff78"/><stop offset="0.438" stop-color="#fff368"/><stop offset="0.500" stop-color="#ffb244"/><stop offset="0.562" stop-color="#ff872d"/><stop offset="0.625" stop-color="#fe691c"/><stop offset="0.688" stop-color="#fa510f"/><stop offset="0.750" stop-color="#f33f06"/><stop offset="0.812" stop-color="#ea2f00"/><stop offset="0.875" stop-color="#dd2300"/><stop offset="0.938" stop-color="#cd1900"/><stop offset="1.000" stop-color="#ba1100"/></linearGradient><linearGradient id="fbi17" gradientUnits="userSpaceOnUse" x1="948.3" y1="0" x2="1262.0" y2="0"><stop offset="0.000" stop-color="#00ffab"/><stop offset="0.062" stop-color="#00ffa6"/><stop offset="0.125" stop-color="#00ffa1"/><stop offset="0.188" stop-color="#00ff9c"/><stop offset="0.250" stop-color="#36ff96"/><stop offset="0.312" stop-color="#7aff8f"/><stop offset="0.375" stop-color="#c8ff87"/><stop offset="0.438" stop-color="#ffe06e"/><stop offset="0.500" stop-color="#ffa44a"/><stop offset="0.562" stop-color="#ff7d32"/><stop offset="0.625" stop-color="#fe6020"/><stop offset="0.688" stop-color="#fa4a13"/><stop offset="0.750" stop-color="#f23809"/><stop offset="0.812" stop-color="#e82a02"/><stop offset="0.875" stop-color="#db1f00"/><stop offset="0.938" stop-color="#cb1600"/><stop offset="1.000" stop-color="#b80e00"/></linearGradient><linearGradient id="fbi18" gradientUnits="userSpaceOnUse" x1="948.3" y1="0" x2="1262.0" y2="0"><stop offset="0.000" stop-color="#00ffb7"/><stop offset="0.062" stop-color="#00ffb4"/><stop offset="0.125" stop-color="#00ffaf"/><stop offset="0.188" stop-color="#01ffaa"/><stop offset="0.250" stop-color="#40ffa5"/><stop offset="0.312" stop-color="#88ff9f"/><stop offset="0.375" stop-color="#dbff97"/><stop offset="0.438" stop-color="#ffce73"/><stop offset="0.500" stop-color="#ff974f"/><stop offset="0.562" stop-color="#ff7236"/><stop offset="0.625" stop-color="#fe5825"/><stop offset="0.688" stop-color="#f94317"/><stop offset="0.750" stop-color="#f2320d"/><stop offset="0.812" stop-color="#e72505"/><stop offset="0.875" stop-color="#d91b00"/><stop offset="0.938" stop-color="#c91200"/><stop offset="1.000" stop-color="#b50b00"/></linearGradient><linearGradient id="fbi19" gradientUnits="userSpaceOnUse" x1="948.3" y1="0" x2="1262.0" y2="0"><stop offset="0.000" stop-color="#00ffc5"/><stop offset="0.062" stop-color="#00ffc2"/><stop offset="0.125" stop-color="#00ffbe"/><stop offset="0.188" stop-color="#07ffba"/><stop offset="0.250" stop-color="#4affb6"/><stop offset="0.312" stop-color="#97ffb0"/><stop offset="0.375" stop-color="#f0ffaa"/><stop offset="0.438" stop-color="#ffbd78"/><stop offset="0.500" stop-color="#ff8a53"/><stop offset="0.562" stop-color="#ff683b"/><stop offset="0.625" stop-color="#fd4f29"/><stop offset="0.688" stop-color="#f83c1b"/><stop offset="0.750" stop-color="#f12d10"/><stop offset="0.812" stop-color="#e62008"/><stop offset="0.875" stop-color="#d81601"/><stop offset="0.938" stop-color="#c70f00"/><stop offset="1.000" stop-color="#b30800"/></linearGradient><linearGradient id="fbi20" gradientUnits="userSpaceOnUse" x1="948.3" y1="0" x2="1262.0" y2="0"><stop offset="0.000" stop-color="#00ffd4"/><stop offset="0.062" stop-color="#00ffd2"/><stop offset="0.125" stop-color="#00ffcf"/><stop offset="0.188" stop-color="#0fffcc"/><stop offset="0.250" stop-color="#55ffc8"/><stop offset="0.312" stop-color="#a7ffc4"/><stop offset="0.375" stop-color="#fff7b9"/><stop offset="0.438" stop-color="#ffac7d"/><stop offset="0.500" stop-color="#ff7e58"/><stop offset="0.562" stop-color="#ff5f3f"/><stop offset="0.625" stop-color="#fd482c"/><stop offset="0.688" stop-color="#f8351e"/><stop offset="0.750" stop-color="#f02713"/><stop offset="0.812" stop-color="#e41c0a"/><stop offset="0.875" stop-color="#d61204"/><stop offset="0.938" stop-color="#c50b00"/><stop offset="1.000" stop-color="#b10600"/></linearGradient><linearGradient id="fbi21" gradientUnits="userSpaceOnUse" x1="948.3" y1="0" x2="1262.0" y2="0"><stop offset="0.000" stop-color="#00ffe4"/><stop offset="0.062" stop-color="#00ffe3"/><stop offset="0.125" stop-color="#00ffe1"/><stop offset="0.188" stop-color="#17ffdf"/><stop offset="0.250" stop-color="#62ffdc"/><stop offset="0.312" stop-color="#b9ffda"/><stop offset="0.375" stop-color="#ffe1bd"/><stop offset="0.438" stop-color="#ff9d82"/><stop offset="0.500" stop-color="#ff735d"/><stop offset="0.562" stop-color="#ff5643"/><stop offset="0.625" stop-color="#fc4030"/><stop offset="0.688" stop-color="#f72f22"/><stop offset="0.750" stop-color="#ee2216"/><stop offset="0.812" stop-color="#e3170d"/><stop offset="0.875" stop-color="#d40f06"/><stop offset="0.938" stop-color="#c30801"/><stop offset="1.000" stop-color="#ae0300"/></linearGradient><linearGradient id="fbi22" gradientUnits="userSpaceOnUse" x1="948.3" y1="0" x2="1262.0" y2="0"><stop offset="0.000" stop-color="#00fff6"/><stop offset="0.062" stop-color="#00fff5"/><stop offset="0.125" stop-color="#00fff5"/><stop offset="0.188" stop-color="#1ffff4"/><stop offset="0.250" stop-color="#70fff3"/><stop offset="0.312" stop-color="#cefff2"/><stop offset="0.375" stop-color="#ffccc1"/><stop offset="0.438" stop-color="#ff8e86"/><stop offset="0.500" stop-color="#ff6761"/><stop offset="0.562" stop-color="#ff4d47"/><stop offset="0.625" stop-color="#fc3834"/><stop offset="0.688" stop-color="#f62925"/><stop offset="0.750" stop-color="#ed1c19"/><stop offset="0.812" stop-color="#e21210"/><stop offset="0.875" stop-color="#d30b08"/><stop offset="0.938" stop-color="#c10503"/><stop offset="1.000" stop-color="#ac0100"/></linearGradient><linearGradient id="fbi23" gradientUnits="userSpaceOnUse" x1="948.3" y1="0" x2="1262.0" y2="0"><stop offset="0.000" stop-color="#00f6ff"/><stop offset="0.062" stop-color="#00f5ff"/><stop offset="0.125" stop-color="#00f4ff"/><stop offset="0.188" stop-color="#27f3ff"/><stop offset="0.250" stop-color="#79f2ff"/><stop offset="0.312" stop-color="#d9f0ff"/><stop offset="0.375" stop-color="#ffb8c4"/><stop offset="0.438" stop-color="#ff808a"/><stop offset="0.500" stop-color="#ff5d65"/><stop offset="0.562" stop-color="#ff444b"/><stop offset="0.625" stop-color="#fb3137"/><stop offset="0.688" stop-color="#f52328"/><stop offset="0.750" stop-color="#ec171c"/><stop offset="0.812" stop-color="#e00e12"/><stop offset="0.875" stop-color="#d1070b"/><stop offset="0.938" stop-color="#bf0205"/><stop offset="1.000" stop-color="#aa0001"/></linearGradient><linearGradient id="fbi24" gradientUnits="userSpaceOnUse" x1="948.3" y1="0" x2="1262.0" y2="0"><stop offset="0.000" stop-color="#00e4ff"/><stop offset="0.062" stop-color="#00e2ff"/><stop offset="0.125" stop-color="#00e0ff"/><stop offset="0.188" stop-color="#2dddff"/><stop offset="0.250" stop-color="#7cdaff"/><stop offset="0.312" stop-color="#d8d7ff"/><stop offset="0.375" stop-color="#ffa5c8"/><stop offset="0.438" stop-color="#ff738e"/><stop offset="0.500" stop-color="#ff5269"/><stop offset="0.562" stop-color="#fe3c4f"/><stop offset="0.625" stop-color="#fb2a3b"/><stop offset="0.688" stop-color="#f51d2b"/><stop offset="0.750" stop-color="#eb121f"/><stop offset="0.812" stop-color="#df0a15"/><stop offset="0.875" stop-color="#cf040d"/><stop offset="0.938" stop-color="#bd0007"/><stop offset="1.000" stop-color="#a70002"/></linearGradient><linearGradient id="fbi25" gradientUnits="userSpaceOnUse" x1="948.3" y1="0" x2="1262.0" y2="0"><stop offset="0.000" stop-color="#00d3ff"/><stop offset="0.062" stop-color="#00d0ff"/><stop offset="0.125" stop-color="#00cdff"/><stop offset="0.188" stop-color="#33c9ff"/><stop offset="0.250" stop-color="#7fc5ff"/><stop offset="0.312" stop-color="#d8c0ff"/><stop offset="0.375" stop-color="#ff94cb"/><stop offset="0.438" stop-color="#ff6692"/><stop offset="0.500" stop-color="#ff496d"/><stop offset="0.562" stop-color="#fe3352"/><stop offset="0.625" stop-color="#fa233e"/><stop offset="0.688" stop-color="#f4172e"/><stop offset="0.750" stop-color="#ea0d21"/><stop offset="0.812" stop-color="#dd0617"/><stop offset="0.875" stop-color="#cd000f"/><stop offset="0.938" stop-color="#bb0009"/><stop offset="1.000" stop-color="#a50004"/></linearGradient><linearGradient id="fbi26" gradientUnits="userSpaceOnUse" x1="948.3" y1="0" x2="1262.0" y2="0"><stop offset="0.000" stop-color="#00c3ff"/><stop offset="0.062" stop-color="#00bfff"/><stop offset="0.125" stop-color="#00bbff"/><stop offset="0.188" stop-color="#38b6ff"/><stop offset="0.250" stop-color="#82b0ff"/><stop offset="0.312" stop-color="#d8aaff"/><stop offset="0.375" stop-color="#ff83ce"/><stop offset="0.438" stop-color="#ff5a96"/><stop offset="0.500" stop-color="#ff3f70"/><stop offset="0.562" stop-color="#fe2c56"/><stop offset="0.625" stop-color="#fa1d41"/><stop offset="0.688" stop-color="#f31131"/><stop offset="0.750" stop-color="#e90924"/><stop offset="0.812" stop-color="#dc0219"/><stop offset="0.875" stop-color="#cb0011"/><stop offset="0.938" stop-color="#b8000a"/><stop offset="1.000" stop-color="#a20005"/></linearGradient><linearGradient id="fbi27" gradientUnits="userSpaceOnUse" x1="948.3" y1="0" x2="1262.0" y2="0"><stop offset="0.000" stop-color="#00b4ff"/><stop offset="0.062" stop-color="#00afff"/><stop offset="0.125" stop-color="#00aaff"/><stop offset="0.188" stop-color="#3da4ff"/><stop offset="0.250" stop-color="#859eff"/><stop offset="0.312" stop-color="#d896ff"/><stop offset="0.375" stop-color="#ff73d1"/><stop offset="0.438" stop-color="#ff4e99"/><stop offset="0.500" stop-color="#ff3674"/><stop offset="0.562" stop-color="#fe2459"/><stop offset="0.625" stop-color="#f91644"/><stop offset="0.688" stop-color="#f20c34"/><stop offset="0.750" stop-color="#e70426"/><stop offset="0.812" stop-color="#da001b"/><stop offset="0.875" stop-color="#ca0013"/><stop offset="0.938" stop-color="#b6000c"/><stop offset="1.000" stop-color="#a00007"/></linearGradient><linearGradient id="fbi28" gradientUnits="userSpaceOnUse" x1="948.3" y1="0" x2="1262.0" y2="0"><stop offset="0.000" stop-color="#00a5ff"/><stop offset="0.062" stop-color="#00a0ff"/><stop offset="0.125" stop-color="#059aff"/><stop offset="0.188" stop-color="#4294ff"/><stop offset="0.250" stop-color="#888cff"/><stop offset="0.312" stop-color="#d783ff"/><stop offset="0.375" stop-color="#ff65d3"/><stop offset="0.438" stop-color="#ff439c"/><stop offset="0.500" stop-color="#ff2d77"/><stop offset="0.562" stop-color="#fd1d5c"/><stop offset="0.625" stop-color="#f91047"/><stop offset="0.688" stop-color="#f10736"/><stop offset="0.750" stop-color="#e60029"/><stop offset="0.812" stop-color="#d8001d"/><stop offset="0.875" stop-color="#c80014"/><stop offset="0.938" stop-color="#b4000d"/><stop offset="1.000" stop-color="#9d0008"/></linearGradient><linearGradient id="fbi29" gradientUnits="userSpaceOnUse" x1="948.3" y1="0" x2="1262.0" y2="0"><stop offset="0.000" stop-color="#0098ff"/><stop offset="0.062" stop-color="#0092ff"/><stop offset="0.125" stop-color="#0b8bff"/><stop offset="0.188" stop-color="#4684ff"/><stop offset="0.250" stop-color="#8a7cff"/><stop offset="0.312" stop-color="#d772ff"/><stop offset="0.375" stop-color="#ff57d6"/><stop offset="0.438" stop-color="#ff399f"/><stop offset="0.500" stop-color="#ff247b"/><stop offset="0.562" stop-color="#fd165f"/><stop offset="0.625" stop-color="#f80a4a"/><stop offset="0.688" stop-color="#f00239"/><stop offset="0.750" stop-color="#e5002b"/><stop offset="0.812" stop-color="#d7001f"/><stop offset="0.875" stop-color="#c60016"/><stop offset="0.938" stop-color="#b2000f"/><stop offset="1.000" stop-color="#9a0009"/></linearGradient><linearGradient id="fbi30" gradientUnits="userSpaceOnUse" x1="948.3" y1="0" x2="1262.0" y2="0"><stop offset="0.000" stop-color="#008bff"/><stop offset="0.062" stop-color="#0084ff"/><stop offset="0.125" stop-color="#107dff"/><stop offset="0.188" stop-color="#4a75ff"/><stop offset="0.250" stop-color="#8c6cff"/><stop offset="0.312" stop-color="#d762ff"/><stop offset="0.375" stop-color="#ff49d8"/><stop offset="0.438" stop-color="#ff2ea2"/><stop offset="0.500" stop-color="#ff1c7e"/><stop offset="0.562" stop-color="#fd0f62"/><stop offset="0.625" stop-color="#f7054d"/><stop offset="0.688" stop-color="#ef003b"/><stop offset="0.750" stop-color="#e3002d"/><stop offset="0.812" stop-color="#d50021"/><stop offset="0.875" stop-color="#c40018"/><stop offset="0.938" stop-color="#af0010"/><stop offset="1.000" stop-color="#98000a"/></linearGradient><linearGradient id="fbi31" gradientUnits="userSpaceOnUse" x1="948.3" y1="0" x2="1262.0" y2="0"><stop offset="0.000" stop-color="#007eff"/><stop offset="0.062" stop-color="#0077ff"/><stop offset="0.125" stop-color="#1570ff"/><stop offset="0.188" stop-color="#4e67ff"/><stop offset="0.250" stop-color="#8e5eff"/><stop offset="0.312" stop-color="#d753ff"/><stop offset="0.375" stop-color="#ff3cda"/><stop offset="0.438" stop-color="#ff24a5"/><stop offset="0.500" stop-color="#ff1481"/><stop offset="0.562" stop-color="#fc0865"/><stop offset="0.625" stop-color="#f6004f"/><stop offset="0.688" stop-color="#ee003e"/><stop offset="0.750" stop-color="#e2002f"/><stop offset="0.812" stop-color="#d30023"/><stop offset="0.875" stop-color="#c20019"/><stop offset="0.938" stop-color="#ad0012"/><stop offset="1.000" stop-color="#95000b"/></linearGradient><linearGradient id="fbi32" gradientUnits="userSpaceOnUse" x1="948.3" y1="0" x2="1262.0" y2="0"><stop offset="0.000" stop-color="#0073ff"/><stop offset="0.062" stop-color="#006bff"/><stop offset="0.125" stop-color="#1a63ff"/><stop offset="0.188" stop-color="#525aff"/><stop offset="0.250" stop-color="#9050ff"/><stop offset="0.312" stop-color="#d745ff"/><stop offset="0.375" stop-color="#ff30dd"/><stop offset="0.438" stop-color="#ff1ba8"/><stop offset="0.500" stop-color="#ff0c84"/><stop offset="0.562" stop-color="#fc0168"/><stop offset="0.625" stop-color="#f60052"/><stop offset="0.688" stop-color="#ed0040"/><stop offset="0.750" stop-color="#e10031"/><stop offset="0.812" stop-color="#d20025"/><stop offset="0.875" stop-color="#bf001b"/><stop offset="0.938" stop-color="#aa0013"/><stop offset="1.000" stop-color="#92000c"/></linearGradient><linearGradient id="fbi33" gradientUnits="userSpaceOnUse" x1="948.3" y1="0" x2="1262.0" y2="0"><stop offset="0.000" stop-color="#0067ff"/><stop offset="0.062" stop-color="#0060ff"/><stop offset="0.125" stop-color="#1f57ff"/><stop offset="0.188" stop-color="#554eff"/><stop offset="0.250" stop-color="#9243ff"/><stop offset="0.312" stop-color="#d737ff"/><stop offset="0.375" stop-color="#ff25df"/><stop offset="0.438" stop-color="#ff12ab"/><stop offset="0.500" stop-color="#fe0586"/><stop offset="0.562" stop-color="#fb006a"/><stop offset="0.625" stop-color="#f50054"/><stop offset="0.688" stop-color="#eb0042"/><stop offset="0.750" stop-color="#df0033"/><stop offset="0.812" stop-color="#d00027"/><stop offset="0.875" stop-color="#bd001c"/><stop offset="0.938" stop-color="#a80014"/><stop offset="1.000" stop-color="#90000d"/></linearGradient><linearGradient id="fbi34" gradientUnits="userSpaceOnUse" x1="948.3" y1="0" x2="1262.0" y2="0"><stop offset="0.000" stop-color="#005dff"/><stop offset="0.062" stop-color="#0055ff"/><stop offset="0.125" stop-color="#234cff"/><stop offset="0.188" stop-color="#5942ff"/><stop offset="0.250" stop-color="#9437ff"/><stop offset="0.312" stop-color="#d62bff"/><stop offset="0.375" stop-color="#ff1ae1"/><stop offset="0.438" stop-color="#ff09ae"/><stop offset="0.500" stop-color="#fe0089"/><stop offset="0.562" stop-color="#fb006d"/><stop offset="0.625" stop-color="#f40056"/><stop offset="0.688" stop-color="#ea0044"/><stop offset="0.750" stop-color="#de0035"/><stop offset="0.812" stop-color="#ce0028"/><stop offset="0.875" stop-color="#bb001e"/><stop offset="0.938" stop-color="#a50015"/><stop offset="1.000" stop-color="#8d000e"/></linearGradient><linearGradient id="fbi35" gradientUnits="userSpaceOnUse" x1="948.3" y1="0" x2="1262.0" y2="0"><stop offset="0.000" stop-color="#0052ff"/><stop offset="0.062" stop-color="#004aff"/><stop offset="0.125" stop-color="#2841ff"/><stop offset="0.188" stop-color="#5c37ff"/><stop offset="0.250" stop-color="#962cff"/><stop offset="0.312" stop-color="#d61fff"/><stop offset="0.375" stop-color="#ff0fe3"/><stop offset="0.438" stop-color="#ff01b0"/><stop offset="0.500" stop-color="#fe008c"/><stop offset="0.562" stop-color="#fa006f"/><stop offset="0.625" stop-color="#f30059"/><stop offset="0.688" stop-color="#e90046"/><stop offset="0.750" stop-color="#dc0037"/><stop offset="0.812" stop-color="#cc002a"/><stop offset="0.875" stop-color="#b9001f"/><stop offset="0.938" stop-color="#a30016"/><stop offset="1.000" stop-color="#8a000f"/></linearGradient><linearGradient id="fbi36" gradientUnits="userSpaceOnUse" x1="948.3" y1="0" x2="1262.0" y2="0"><stop offset="0.000" stop-color="#0049ff"/><stop offset="0.062" stop-color="#0040ff"/><stop offset="0.125" stop-color="#2c37ff"/><stop offset="0.188" stop-color="#5f2cff"/><stop offset="0.250" stop-color="#9721ff"/><stop offset="0.312" stop-color="#d614ff"/><stop offset="0.375" stop-color="#ff05e4"/><stop offset="0.438" stop-color="#ff00b2"/><stop offset="0.500" stop-color="#fe008e"/><stop offset="0.562" stop-color="#f90072"/><stop offset="0.625" stop-color="#f2005b"/><stop offset="0.688" stop-color="#e80048"/><stop offset="0.750" stop-color="#db0038"/><stop offset="0.812" stop-color="#ca002b"/><stop offset="0.875" stop-color="#b70020"/><stop offset="0.938" stop-color="#a00017"/><stop offset="1.000" stop-color="#870010"/></linearGradient><linearGradient id="fbi37" gradientUnits="userSpaceOnUse" x1="948.3" y1="0" x2="1262.0" y2="0"><stop offset="0.000" stop-color="#003fff"/><stop offset="0.062" stop-color="#0236ff"/><stop offset="0.125" stop-color="#302dff"/><stop offset="0.188" stop-color="#6122ff"/><stop offset="0.250" stop-color="#9916ff"/><stop offset="0.312" stop-color="#d609ff"/><stop offset="0.375" stop-color="#ff00e6"/><stop offset="0.438" stop-color="#ff00b5"/><stop offset="0.500" stop-color="#fd0090"/><stop offset="0.562" stop-color="#f90074"/><stop offset="0.625" stop-color="#f1005d"/><stop offset="0.688" stop-color="#e7004a"/><stop offset="0.750" stop-color="#d9003a"/><stop offset="0.812" stop-color="#c8002d"/><stop offset="0.875" stop-color="#b50021"/><stop offset="0.938" stop-color="#9e0018"/><stop offset="1.000" stop-color="#840010"/></linearGradient><linearGradient id="fbi38" gradientUnits="userSpaceOnUse" x1="948.3" y1="0" x2="1262.0" y2="0"><stop offset="0.000" stop-color="#0036ff"/><stop offset="0.062" stop-color="#072dff"/><stop offset="0.125" stop-color="#3323ff"/><stop offset="0.188" stop-color="#6419ff"/><stop offset="0.250" stop-color="#9a0dff"/><stop offset="0.312" stop-color="#d600ff"/><stop offset="0.375" stop-color="#ff00e8"/><stop offset="0.438" stop-color="#ff00b7"/><stop offset="0.500" stop-color="#fd0093"/><stop offset="0.562" stop-color="#f80076"/><stop offset="0.625" stop-color="#f0005f"/><stop offset="0.688" stop-color="#e5004c"/><stop offset="0.750" stop-color="#d7003b"/><stop offset="0.812" stop-color="#c6002e"/><stop offset="0.875" stop-color="#b20022"/><stop offset="0.938" stop-color="#9b0019"/><stop offset="1.000" stop-color="#810011"/></linearGradient><linearGradient id="fbi39" gradientUnits="userSpaceOnUse" x1="948.3" y1="0" x2="1262.0" y2="0"><stop offset="0.000" stop-color="#002eff"/><stop offset="0.062" stop-color="#0b24ff"/><stop offset="0.125" stop-color="#371aff"/><stop offset="0.188" stop-color="#670fff"/><stop offset="0.250" stop-color="#9b03ff"/><stop offset="0.312" stop-color="#d600ff"/><stop offset="0.375" stop-color="#ff00e9"/><stop offset="0.438" stop-color="#ff00b9"/><stop offset="0.500" stop-color="#fd0095"/><stop offset="0.562" stop-color="#f70078"/><stop offset="0.625" stop-color="#ef0061"/><stop offset="0.688" stop-color="#e4004d"/><stop offset="0.750" stop-color="#d6003d"/><stop offset="0.812" stop-color="#c4002f"/><stop offset="0.875" stop-color="#b00023"/><stop offset="0.938" stop-color="#99001a"/><stop offset="1.000" stop-color="#7e0012"/></linearGradient><linearGradient id="fbi40" gradientUnits="userSpaceOnUse" x1="948.3" y1="0" x2="1262.0" y2="0"><stop offset="0.000" stop-color="#0025ff"/><stop offset="0.062" stop-color="#0f1cff"/><stop offset="0.125" stop-color="#3a12ff"/><stop offset="0.188" stop-color="#6907ff"/><stop offset="0.250" stop-color="#9d00ff"/><stop offset="0.312" stop-color="#d600ff"/><stop offset="0.375" stop-color="#ff00eb"/><stop offset="0.438" stop-color="#ff00bb"/><stop offset="0.500" stop-color="#fc0097"/><stop offset="0.562" stop-color="#f7007a"/><stop offset="0.625" stop-color="#ee0062"/><stop offset="0.688" stop-color="#e2004f"/><stop offset="0.750" stop-color="#d4003e"/><stop offset="0.812" stop-color="#c20030"/><stop offset="0.875" stop-color="#ae0024"/><stop offset="0.938" stop-color="#96001a"/><stop offset="1.000" stop-color="#7b0012"/></linearGradient><linearGradient id="fbi41" gradientUnits="userSpaceOnUse" x1="948.3" y1="0" x2="1262.0" y2="0"><stop offset="0.000" stop-color="#001dff"/><stop offset="0.062" stop-color="#1314ff"/><stop offset="0.125" stop-color="#3d0aff"/><stop offset="0.188" stop-color="#6b00ff"/><stop offset="0.250" stop-color="#9e00ff"/><stop offset="0.312" stop-color="#d600ff"/><stop offset="0.375" stop-color="#ff00ec"/><stop offset="0.438" stop-color="#ff00bd"/><stop offset="0.500" stop-color="#fc0099"/><stop offset="0.562" stop-color="#f6007c"/><stop offset="0.625" stop-color="#ed0064"/><stop offset="0.688" stop-color="#e10050"/><stop offset="0.750" stop-color="#d20040"/><stop offset="0.812" stop-color="#c00031"/><stop offset="0.875" stop-color="#ab0025"/><stop offset="0.938" stop-color="#93001b"/><stop offset="1.000" stop-color="#780013"/></linearGradient><linearGradient id="fbi42" gradientUnits="userSpaceOnUse" x1="948.3" y1="0" x2="1262.0" y2="0"><stop offset="0.000" stop-color="#0016ff"/><stop offset="0.062" stop-color="#170cff"/><stop offset="0.125" stop-color="#4002ff"/><stop offset="0.188" stop-color="#6e00ff"/><stop offset="0.250" stop-color="#9f00ff"/><stop offset="0.312" stop-color="#d600ff"/><stop offset="0.375" stop-color="#ff00ee"/><stop offset="0.438" stop-color="#ff00bf"/><stop offset="0.500" stop-color="#fb009b"/><stop offset="0.562" stop-color="#f5007e"/><stop offset="0.625" stop-color="#ec0066"/><stop offset="0.688" stop-color="#e00052"/><stop offset="0.750" stop-color="#d00041"/><stop offset="0.812" stop-color="#be0032"/><stop offset="0.875" stop-color="#a90026"/><stop offset="0.938" stop-color="#90001c"/><stop offset="1.000" stop-color="#750013"/></linearGradient><linearGradient id="fbi43" gradientUnits="userSpaceOnUse" x1="948.3" y1="0" x2="1262.0" y2="0"><stop offset="0.000" stop-color="#000eff"/><stop offset="0.062" stop-color="#1a05ff"/><stop offset="0.125" stop-color="#4300ff"/><stop offset="0.188" stop-color="#7000ff"/><stop offset="0.250" stop-color="#a000ff"/><stop offset="0.312" stop-color="#d500ff"/><stop offset="0.375" stop-color="#ff00ef"/><stop offset="0.438" stop-color="#fe00c1"/><stop offset="0.500" stop-color="#fb009d"/><stop offset="0.562" stop-color="#f4007f"/><stop offset="0.625" stop-color="#eb0067"/><stop offset="0.688" stop-color="#de0053"/><stop offset="0.750" stop-color="#cf0042"/><stop offset="0.812" stop-color="#bc0033"/><stop offset="0.875" stop-color="#a60027"/><stop offset="0.938" stop-color="#8e001c"/><stop offset="1.000" stop-color="#720013"/></linearGradient><linearGradient id="fbi44" gradientUnits="userSpaceOnUse" x1="948.3" y1="0" x2="1262.0" y2="0"><stop offset="0.000" stop-color="#0007ff"/><stop offset="0.062" stop-color="#1e00ff"/><stop offset="0.125" stop-color="#4600ff"/><stop offset="0.188" stop-color="#7200ff"/><stop offset="0.250" stop-color="#a100ff"/><stop offset="0.312" stop-color="#d500ff"/><stop offset="0.375" stop-color="#ff00f0"/><stop offset="0.438" stop-color="#fe00c2"/><stop offset="0.500" stop-color="#fa009e"/><stop offset="0.562" stop-color="#f30081"/><stop offset="0.625" stop-color="#e90069"/><stop offset="0.688" stop-color="#dd0054"/><stop offset="0.750" stop-color="#cd0043"/><stop offset="0.812" stop-color="#ba0034"/><stop offset="0.875" stop-color="#a40027"/><stop offset="0.938" stop-color="#8b001d"/><stop offset="1.000" stop-color="#6f0014"/></linearGradient><linearGradient id="fbi45" gradientUnits="userSpaceOnUse" x1="948.3" y1="0" x2="1262.0" y2="0"><stop offset="0.000" stop-color="#0000ff"/><stop offset="0.062" stop-color="#2100ff"/><stop offset="0.125" stop-color="#4900ff"/><stop offset="0.188" stop-color="#7400ff"/><stop offset="0.250" stop-color="#a200ff"/><stop offset="0.312" stop-color="#d500ff"/><stop offset="0.375" stop-color="#ff00f2"/><stop offset="0.438" stop-color="#fe00c4"/><stop offset="0.500" stop-color="#fa00a0"/><stop offset="0.562" stop-color="#f20082"/><stop offset="0.625" stop-color="#e8006a"/><stop offset="0.688" stop-color="#db0055"/><stop offset="0.750" stop-color="#cb0044"/><stop offset="0.812" stop-color="#b80035"/><stop offset="0.875" stop-color="#a10028"/><stop offset="0.938" stop-color="#88001d"/><stop offset="1.000" stop-color="#6c0014"/></linearGradient><clipPath id="fihs"><path d="M1259.7 392.2 L1259.7 392.2 L1259.7 392.2 L1259.6 392.2 L1259.6 392.2 L1259.5 392.2 L1259.5 392.3 L1259.4 392.3 L1259.3 392.3 L1259.3 392.3 L1259.2 392.3 L1259.1 392.3 L1259.0 392.3 L1259.0 392.4 L1258.9 392.4 L1258.8 392.4 L1258.6 392.4 L1258.6 392.4 L1258.5 392.4 L1258.4 392.4 L1258.2 392.4 L1258.1 392.4 L1258.0 392.4 L1257.9 392.4 L1257.7 392.4 L1257.6 392.4 L1257.4 392.5 L1257.2 392.5 L1257.1 392.4 L1256.9 392.4 L1256.6 392.3 L1256.4 392.2 L1256.1 392.1 L1255.8 392.0 L1255.4 391.8 L1255.1 391.6 L1254.7 391.4 L1254.2 391.1 L1253.8 390.9 L1253.3 390.5 L1252.8 390.2 L1252.2 389.8 L1251.6 389.4 L1250.9 388.9 L1250.1 388.4 L1249.4 387.8 L1248.6 387.2 L1247.7 386.6 L1246.8 385.9 L1245.8 385.2 L1244.8 384.5 L1243.7 383.7 L1242.4 382.9 L1241.1 381.9 L1239.6 380.9 L1238.1 379.8 L1236.4 378.7 L1234.7 377.5 L1232.9 376.2 L1231.0 374.9 L1229.0 373.4 L1226.8 371.7 L1224.6 370.0 L1222.2 368.1 L1219.7 365.9 L1217.1 363.6 L1214.4 361.2 L1211.5 358.4 L1208.4 355.1 L1205.0 351.1 L1201.3 346.8 L1197.4 341.8 L1193.2 336.0 L1188.8 329.5 L1184.1 322.4 L1179.2 314.4 L1173.9 305.1 L1168.3 294.7 L1162.4 283.3 L1156.2 270.5 L1149.6 256.2 L1142.5 240.4 L1135.0 223.2 L1127.2 204.4 L1119.5 183.8 L1111.8 161.3 L1104.0 136.9 L1096.2 110.9 L1088.5 83.4 L1080.9 54.0 L1073.3 22.8 L1066.0 -9.5 L1059.4 -42.0 L1053.4 -75.1 L1047.8 -109.0 L1042.9 -142.9 L1039.1 -175.8 L1036.2 -208.1 L1034.1 -239.8 L1033.1 -270.6 L1033.3 -299.8 L1034.9 -327.6 L1037.6 -354.2 L1041.5 -379.1 L1046.6 -401.4 L1053.2 -421.4 L1061.2 -439.2 L1070.1 -454.6 L1079.9 -467.2 L1090.6 -476.8 L1102.2 -483.5 L1114.5 -487.8 L1127.0 -490.4 L1139.8 -490.9 L1153.1 -489.2 L1166.6 -486.1 L1180.0 -482.4 L1193.5 -478.0 L1207.1 -472.7 L1220.6 -466.8 L1233.9 -460.7 L1246.9 -454.6 L1259.6 -448.3 L1272.2 -441.6 L1284.7 -434.9 L1297.1 -427.9 L1309.3 -420.7 L1321.4 -413.3 L1333.5 -405.8 L1345.6 -398.0 L1357.7 -390.1 L1369.7 -382.0 L1381.7 -373.8 L1393.6 -365.5 L1405.5 -357.0 L1417.4 -348.4 L1429.3 -339.7 L1441.2 -331.0 L1453.0 -322.1 L1464.9 -313.2 L1476.8 -304.2 L1488.7 -295.1 L1500.6 -286.0 L1512.5 -276.8 L1524.4 -267.5 L1536.2 -258.3 L1548.1 -249.0 L1559.9 -239.7 L1571.7 -230.4 L1583.5 -221.1 L1595.3 -211.8 L1607.1 -202.5 L1618.8 -193.2 L1630.4 -184.0 L1642.0 -174.7 L1653.5 -165.6 L1665.0 -156.5 L1676.3 -147.4 L1687.6 -138.4 L1698.7 -129.5 L1709.8 -120.7 L1720.7 -112.0 L1731.5 -103.3 L1742.2 -94.8 L1752.7 -86.4 L1763.1 -78.1 L1773.3 -70.0 L1783.4 -62.0 L1793.2 -54.2 L1802.8 -46.6 L1812.1 -39.1 L1821.2 -31.8 L1830.0 -24.7 L1838.5 -18.0 L1846.6 -11.5 L1854.4 -5.2 L1862.1 0.8 L1869.5 6.8 L1876.7 12.5 L1883.6 18.0 L1890.3 23.3 L1896.6 28.3 L1902.5 33.0 L1908.2 37.5 L1913.7 41.8 L1918.8 46.0 L1923.7 49.9 L1928.3 53.6 L1932.7 57.1 L1936.8 60.4 L1940.7 63.5 L1944.4 66.4 L1947.9 69.2 L1951.2 71.8 L1954.2 74.3 L1957.2 76.6 L1960.0 78.8 L1962.6 80.9 L1965.1 82.9 L1967.4 84.8 L1969.7 86.6 L1971.8 88.3 L1973.9 90.0 L1975.9 91.6 L1977.8 93.1 L1979.6 94.5 L1981.3 95.9 L1982.9 97.2 L1984.4 98.4 L1985.9 99.5 L1987.3 100.6 L1988.5 101.6 L1989.8 102.5 L1990.9 103.4 L1991.9 104.2 L1992.8 105.0 L1993.7 105.7 L1994.6 106.4 L1995.4 107.1 L1996.1 107.6 L1996.8 108.2 L1997.4 108.7 L1998.0 109.2 L1998.6 109.6 L1999.1 110.0 L1999.5 110.3 L1999.9 110.6 L2000.2 110.9 L2000.5 111.2 L2000.8 111.4 L2001.1 111.6 L2001.4 111.9 L2001.7 112.1 L2002.1 112.5 L2002.6 112.8 L2003.1 113.2 L2003.6 113.6 L2004.1 114.0 L2004.6 114.4 L2005.0 114.8 L2005.3 115.0 Z"/></clipPath><clipPath id="fitr"><path d="M1879.4 46.1 L1427.2 -241.4 L1227.7 333.7 Z"/></clipPath><clipPath id="fibx"><rect x="1228" y="50" width="154" height="124"/></clipPath><linearGradient id="fio0" gradientUnits="userSpaceOnUse" x1="1228.0" y1="0" x2="1382.0" y2="0"><stop offset="0.000" stop-color="#00a1a6"/><stop offset="0.125" stop-color="#00a3a9"/><stop offset="0.250" stop-color="#00a5ab"/><stop offset="0.375" stop-color="#00a7ad"/><stop offset="0.500" stop-color="#00a9af"/><stop offset="0.625" stop-color="#00abb1"/><stop offset="0.750" stop-color="#17adb4"/><stop offset="0.875" stop-color="#31aeb6"/><stop offset="1.000" stop-color="#4db0b8"/></linearGradient><linearGradient id="fio1" gradientUnits="userSpaceOnUse" x1="1228.0" y1="0" x2="1382.0" y2="0"><stop offset="0.000" stop-color="#009ca6"/><stop offset="0.125" stop-color="#009da9"/><stop offset="0.250" stop-color="#009fab"/><stop offset="0.375" stop-color="#00a0ad"/><stop offset="0.500" stop-color="#00a2af"/><stop offset="0.625" stop-color="#02a4b1"/><stop offset="0.750" stop-color="#19a5b4"/><stop offset="0.875" stop-color="#32a7b6"/><stop offset="1.000" stop-color="#4ea8b8"/></linearGradient><linearGradient id="fio2" gradientUnits="userSpaceOnUse" x1="1228.0" y1="0" x2="1382.0" y2="0"><stop offset="0.000" stop-color="#0096a6"/><stop offset="0.125" stop-color="#0097a8"/><stop offset="0.250" stop-color="#0099ab"/><stop offset="0.375" stop-color="#009aad"/><stop offset="0.500" stop-color="#009baf"/><stop offset="0.625" stop-color="#049db1"/><stop offset="0.750" stop-color="#1b9eb3"/><stop offset="0.875" stop-color="#349fb6"/><stop offset="1.000" stop-color="#50a0b8"/></linearGradient><linearGradient id="fio3" gradientUnits="userSpaceOnUse" x1="1228.0" y1="0" x2="1382.0" y2="0"><stop offset="0.000" stop-color="#0090a6"/><stop offset="0.125" stop-color="#0092a8"/><stop offset="0.250" stop-color="#0093ab"/><stop offset="0.375" stop-color="#0094ad"/><stop offset="0.500" stop-color="#0095af"/><stop offset="0.625" stop-color="#0696b1"/><stop offset="0.750" stop-color="#1d97b3"/><stop offset="0.875" stop-color="#3698b5"/><stop offset="1.000" stop-color="#5198b7"/></linearGradient><linearGradient id="fio4" gradientUnits="userSpaceOnUse" x1="1228.0" y1="0" x2="1382.0" y2="0"><stop offset="0.000" stop-color="#008ba6"/><stop offset="0.125" stop-color="#008ca8"/><stop offset="0.250" stop-color="#008daa"/><stop offset="0.375" stop-color="#008ead"/><stop offset="0.500" stop-color="#008faf"/><stop offset="0.625" stop-color="#088fb1"/><stop offset="0.750" stop-color="#1f90b3"/><stop offset="0.875" stop-color="#3790b5"/><stop offset="1.000" stop-color="#5291b7"/></linearGradient><linearGradient id="fio5" gradientUnits="userSpaceOnUse" x1="1228.0" y1="0" x2="1382.0" y2="0"><stop offset="0.000" stop-color="#0086a6"/><stop offset="0.125" stop-color="#0087a8"/><stop offset="0.250" stop-color="#0088aa"/><stop offset="0.375" stop-color="#0088ac"/><stop offset="0.500" stop-color="#0089ae"/><stop offset="0.625" stop-color="#0a89b1"/><stop offset="0.750" stop-color="#2089b3"/><stop offset="0.875" stop-color="#3889b5"/><stop offset="1.000" stop-color="#5389b6"/></linearGradient><linearGradient id="fio6" gradientUnits="userSpaceOnUse" x1="1228.0" y1="0" x2="1382.0" y2="0"><stop offset="0.000" stop-color="#0081a6"/><stop offset="0.125" stop-color="#0082a8"/><stop offset="0.250" stop-color="#0082aa"/><stop offset="0.375" stop-color="#0082ac"/><stop offset="0.500" stop-color="#0083ae"/><stop offset="0.625" stop-color="#0c83b0"/><stop offset="0.750" stop-color="#2283b2"/><stop offset="0.875" stop-color="#3a83b4"/><stop offset="1.000" stop-color="#5482b6"/></linearGradient><linearGradient id="fio7" gradientUnits="userSpaceOnUse" x1="1228.0" y1="0" x2="1382.0" y2="0"><stop offset="0.000" stop-color="#007ca5"/><stop offset="0.125" stop-color="#007ca8"/><stop offset="0.250" stop-color="#007daa"/><stop offset="0.375" stop-color="#007dac"/><stop offset="0.500" stop-color="#007dae"/><stop offset="0.625" stop-color="#0e7db0"/><stop offset="0.750" stop-color="#247cb2"/><stop offset="0.875" stop-color="#3b7cb4"/><stop offset="1.000" stop-color="#547bb5"/></linearGradient><linearGradient id="fio8" gradientUnits="userSpaceOnUse" x1="1228.0" y1="0" x2="1382.0" y2="0"><stop offset="0.000" stop-color="#0077a5"/><stop offset="0.125" stop-color="#0077a7"/><stop offset="0.250" stop-color="#0077a9"/><stop offset="0.375" stop-color="#0077ab"/><stop offset="0.500" stop-color="#0077ad"/><stop offset="0.625" stop-color="#1077af"/><stop offset="0.750" stop-color="#2576b1"/><stop offset="0.875" stop-color="#3c76b3"/><stop offset="1.000" stop-color="#5575b5"/></linearGradient><linearGradient id="fio9" gradientUnits="userSpaceOnUse" x1="1228.0" y1="0" x2="1382.0" y2="0"><stop offset="0.000" stop-color="#0072a5"/><stop offset="0.125" stop-color="#0072a7"/><stop offset="0.250" stop-color="#0072a9"/><stop offset="0.375" stop-color="#0072ab"/><stop offset="0.500" stop-color="#0072ad"/><stop offset="0.625" stop-color="#1271af"/><stop offset="0.750" stop-color="#2770b1"/><stop offset="0.875" stop-color="#3d6fb3"/><stop offset="1.000" stop-color="#566eb4"/></linearGradient><linearGradient id="fio10" gradientUnits="userSpaceOnUse" x1="1228.0" y1="0" x2="1382.0" y2="0"><stop offset="0.000" stop-color="#006ea5"/><stop offset="0.125" stop-color="#006ea7"/><stop offset="0.250" stop-color="#006da9"/><stop offset="0.375" stop-color="#006dab"/><stop offset="0.500" stop-color="#016cad"/><stop offset="0.625" stop-color="#146caf"/><stop offset="0.750" stop-color="#286bb0"/><stop offset="0.875" stop-color="#3f69b2"/><stop offset="1.000" stop-color="#5668b3"/></linearGradient><linearGradient id="fio11" gradientUnits="userSpaceOnUse" x1="1228.0" y1="0" x2="1382.0" y2="0"><stop offset="0.000" stop-color="#0069a4"/><stop offset="0.125" stop-color="#0069a6"/><stop offset="0.250" stop-color="#0069a8"/><stop offset="0.375" stop-color="#0068aa"/><stop offset="0.500" stop-color="#0367ac"/><stop offset="0.625" stop-color="#1566ae"/><stop offset="0.750" stop-color="#2a65b0"/><stop offset="0.875" stop-color="#4064b1"/><stop offset="1.000" stop-color="#5762b3"/></linearGradient><linearGradient id="fio12" gradientUnits="userSpaceOnUse" x1="1228.0" y1="0" x2="1382.0" y2="0"><stop offset="0.000" stop-color="#0065a4"/><stop offset="0.125" stop-color="#0064a6"/><stop offset="0.250" stop-color="#0064a8"/><stop offset="0.375" stop-color="#0063aa"/><stop offset="0.500" stop-color="#0562ac"/><stop offset="0.625" stop-color="#1761ae"/><stop offset="0.750" stop-color="#2b60af"/><stop offset="0.875" stop-color="#415eb1"/><stop offset="1.000" stop-color="#585cb2"/></linearGradient><linearGradient id="fio13" gradientUnits="userSpaceOnUse" x1="1228.0" y1="0" x2="1382.0" y2="0"><stop offset="0.000" stop-color="#0061a4"/><stop offset="0.125" stop-color="#0060a6"/><stop offset="0.250" stop-color="#005fa8"/><stop offset="0.375" stop-color="#005ea9"/><stop offset="0.500" stop-color="#065dab"/><stop offset="0.625" stop-color="#195cad"/><stop offset="0.750" stop-color="#2c5aaf"/><stop offset="0.875" stop-color="#4159b0"/><stop offset="1.000" stop-color="#5856b1"/></linearGradient><linearGradient id="fio14" gradientUnits="userSpaceOnUse" x1="1228.0" y1="0" x2="1382.0" y2="0"><stop offset="0.000" stop-color="#005ca3"/><stop offset="0.125" stop-color="#005ca5"/><stop offset="0.250" stop-color="#005ba7"/><stop offset="0.375" stop-color="#005aa9"/><stop offset="0.500" stop-color="#0858ab"/><stop offset="0.625" stop-color="#1a57ac"/><stop offset="0.750" stop-color="#2e55ae"/><stop offset="0.875" stop-color="#4253af"/><stop offset="1.000" stop-color="#5951b1"/></linearGradient><linearGradient id="fio15" gradientUnits="userSpaceOnUse" x1="1228.0" y1="0" x2="1382.0" y2="0"><stop offset="0.000" stop-color="#0058a3"/><stop offset="0.125" stop-color="#0057a5"/><stop offset="0.250" stop-color="#0056a7"/><stop offset="0.375" stop-color="#0055a8"/><stop offset="0.500" stop-color="#0a54aa"/><stop offset="0.625" stop-color="#1c52ac"/><stop offset="0.750" stop-color="#2f50ad"/><stop offset="0.875" stop-color="#434eaf"/><stop offset="1.000" stop-color="#594cb0"/></linearGradient><linearGradient id="fio16" gradientUnits="userSpaceOnUse" x1="1228.0" y1="0" x2="1382.0" y2="0"><stop offset="0.000" stop-color="#0054a2"/><stop offset="0.125" stop-color="#0053a4"/><stop offset="0.250" stop-color="#0052a6"/><stop offset="0.375" stop-color="#0051a8"/><stop offset="0.500" stop-color="#0b4faa"/><stop offset="0.625" stop-color="#1d4eab"/><stop offset="0.750" stop-color="#304cad"/><stop offset="0.875" stop-color="#4449ae"/><stop offset="1.000" stop-color="#5947af"/></linearGradient><linearGradient id="fio17" gradientUnits="userSpaceOnUse" x1="1228.0" y1="0" x2="1382.0" y2="0"><stop offset="0.000" stop-color="#0050a2"/><stop offset="0.125" stop-color="#004fa4"/><stop offset="0.250" stop-color="#004ea6"/><stop offset="0.375" stop-color="#004da7"/><stop offset="0.500" stop-color="#0d4ba9"/><stop offset="0.625" stop-color="#1e49ab"/><stop offset="0.750" stop-color="#3147ac"/><stop offset="0.875" stop-color="#4545ad"/><stop offset="1.000" stop-color="#5a42ae"/></linearGradient><linearGradient id="fio18" gradientUnits="userSpaceOnUse" x1="1228.0" y1="0" x2="1382.0" y2="0"><stop offset="0.000" stop-color="#004da1"/><stop offset="0.125" stop-color="#004ba3"/><stop offset="0.250" stop-color="#004aa5"/><stop offset="0.375" stop-color="#0048a7"/><stop offset="0.500" stop-color="#0f47a8"/><stop offset="0.625" stop-color="#2045aa"/><stop offset="0.750" stop-color="#3242ab"/><stop offset="0.875" stop-color="#4540ac"/><stop offset="1.000" stop-color="#5a3dad"/></linearGradient><linearGradient id="fio19" gradientUnits="userSpaceOnUse" x1="1228.0" y1="0" x2="1382.0" y2="0"><stop offset="0.000" stop-color="#0049a1"/><stop offset="0.125" stop-color="#0048a3"/><stop offset="0.250" stop-color="#0046a5"/><stop offset="0.375" stop-color="#0044a6"/><stop offset="0.500" stop-color="#1043a8"/><stop offset="0.625" stop-color="#2140a9"/><stop offset="0.750" stop-color="#333eab"/><stop offset="0.875" stop-color="#463bac"/><stop offset="1.000" stop-color="#5a39ad"/></linearGradient><linearGradient id="fio20" gradientUnits="userSpaceOnUse" x1="1228.0" y1="0" x2="1382.0" y2="0"><stop offset="0.000" stop-color="#0045a1"/><stop offset="0.125" stop-color="#0044a2"/><stop offset="0.250" stop-color="#0042a4"/><stop offset="0.375" stop-color="#0240a6"/><stop offset="0.500" stop-color="#113fa7"/><stop offset="0.625" stop-color="#223ca9"/><stop offset="0.750" stop-color="#343aaa"/><stop offset="0.875" stop-color="#4737ab"/><stop offset="1.000" stop-color="#5b34ac"/></linearGradient><linearGradient id="fii0" gradientUnits="userSpaceOnUse" x1="1228.0" y1="0" x2="1382.0" y2="0"><stop offset="0.000" stop-color="#00f7ff"/><stop offset="0.125" stop-color="#00f7ff"/><stop offset="0.250" stop-color="#00f6ff"/><stop offset="0.375" stop-color="#00f6ff"/><stop offset="0.500" stop-color="#00f6ff"/><stop offset="0.625" stop-color="#00f5ff"/><stop offset="0.750" stop-color="#20f5ff"/><stop offset="0.875" stop-color="#44f4ff"/><stop offset="1.000" stop-color="#6bf4ff"/></linearGradient><linearGradient id="fii1" gradientUnits="userSpaceOnUse" x1="1228.0" y1="0" x2="1382.0" y2="0"><stop offset="0.000" stop-color="#00eeff"/><stop offset="0.125" stop-color="#00eeff"/><stop offset="0.250" stop-color="#00edff"/><stop offset="0.375" stop-color="#00edff"/><stop offset="0.500" stop-color="#00ecff"/><stop offset="0.625" stop-color="#02ebff"/><stop offset="0.750" stop-color="#23eaff"/><stop offset="0.875" stop-color="#47eaff"/><stop offset="1.000" stop-color="#6de9ff"/></linearGradient><linearGradient id="fii2" gradientUnits="userSpaceOnUse" x1="1228.0" y1="0" x2="1382.0" y2="0"><stop offset="0.000" stop-color="#00e6ff"/><stop offset="0.125" stop-color="#00e5ff"/><stop offset="0.250" stop-color="#00e4ff"/><stop offset="0.375" stop-color="#00e3ff"/><stop offset="0.500" stop-color="#00e2ff"/><stop offset="0.625" stop-color="#06e1ff"/><stop offset="0.750" stop-color="#26e0ff"/><stop offset="0.875" stop-color="#49dfff"/><stop offset="1.000" stop-color="#6edeff"/></linearGradient><linearGradient id="fii3" gradientUnits="userSpaceOnUse" x1="1228.0" y1="0" x2="1382.0" y2="0"><stop offset="0.000" stop-color="#00deff"/><stop offset="0.125" stop-color="#00ddff"/><stop offset="0.250" stop-color="#00dcff"/><stop offset="0.375" stop-color="#00dbff"/><stop offset="0.500" stop-color="#00d9ff"/><stop offset="0.625" stop-color="#09d8ff"/><stop offset="0.750" stop-color="#29d7ff"/><stop offset="0.875" stop-color="#4bd5ff"/><stop offset="1.000" stop-color="#70d4ff"/></linearGradient><linearGradient id="fii4" gradientUnits="userSpaceOnUse" x1="1228.0" y1="0" x2="1382.0" y2="0"><stop offset="0.000" stop-color="#00d6ff"/><stop offset="0.125" stop-color="#00d5ff"/><stop offset="0.250" stop-color="#00d3ff"/><stop offset="0.375" stop-color="#00d2ff"/><stop offset="0.500" stop-color="#00d0ff"/><stop offset="0.625" stop-color="#0ccfff"/><stop offset="0.750" stop-color="#2ccdff"/><stop offset="0.875" stop-color="#4ecbff"/><stop offset="1.000" stop-color="#72c9ff"/></linearGradient><linearGradient id="fii5" gradientUnits="userSpaceOnUse" x1="1228.0" y1="0" x2="1382.0" y2="0"><stop offset="0.000" stop-color="#00ceff"/><stop offset="0.125" stop-color="#00cdff"/><stop offset="0.250" stop-color="#00cbff"/><stop offset="0.375" stop-color="#00c9ff"/><stop offset="0.500" stop-color="#00c8ff"/><stop offset="0.625" stop-color="#0fc6ff"/><stop offset="0.750" stop-color="#2ec4ff"/><stop offset="0.875" stop-color="#50c2ff"/><stop offset="1.000" stop-color="#74c0ff"/></linearGradient><linearGradient id="fii6" gradientUnits="userSpaceOnUse" x1="1228.0" y1="0" x2="1382.0" y2="0"><stop offset="0.000" stop-color="#00c6ff"/><stop offset="0.125" stop-color="#00c5ff"/><stop offset="0.250" stop-color="#00c3ff"/><stop offset="0.375" stop-color="#00c1ff"/><stop offset="0.500" stop-color="#00bfff"/><stop offset="0.625" stop-color="#12bdff"/><stop offset="0.750" stop-color="#31bbff"/><stop offset="0.875" stop-color="#52b9ff"/><stop offset="1.000" stop-color="#75b6ff"/></linearGradient><linearGradient id="fii7" gradientUnits="userSpaceOnUse" x1="1228.0" y1="0" x2="1382.0" y2="0"><stop offset="0.000" stop-color="#00bfff"/><stop offset="0.125" stop-color="#00bdff"/><stop offset="0.250" stop-color="#00bbff"/><stop offset="0.375" stop-color="#00b9ff"/><stop offset="0.500" stop-color="#00b7ff"/><stop offset="0.625" stop-color="#15b5ff"/><stop offset="0.750" stop-color="#33b3ff"/><stop offset="0.875" stop-color="#54b0ff"/><stop offset="1.000" stop-color="#77adff"/></linearGradient><linearGradient id="fii8" gradientUnits="userSpaceOnUse" x1="1228.0" y1="0" x2="1382.0" y2="0"><stop offset="0.000" stop-color="#00b8ff"/><stop offset="0.125" stop-color="#00b6ff"/><stop offset="0.250" stop-color="#00b4ff"/><stop offset="0.375" stop-color="#00b2ff"/><stop offset="0.500" stop-color="#00afff"/><stop offset="0.625" stop-color="#18adff"/><stop offset="0.750" stop-color="#36aaff"/><stop offset="0.875" stop-color="#56a7ff"/><stop offset="1.000" stop-color="#78a4ff"/></linearGradient><linearGradient id="fii9" gradientUnits="userSpaceOnUse" x1="1228.0" y1="0" x2="1382.0" y2="0"><stop offset="0.000" stop-color="#00b1ff"/><stop offset="0.125" stop-color="#00afff"/><stop offset="0.250" stop-color="#00acff"/><stop offset="0.375" stop-color="#00aaff"/><stop offset="0.500" stop-color="#00a8ff"/><stop offset="0.625" stop-color="#1aa5ff"/><stop offset="0.750" stop-color="#38a2ff"/><stop offset="0.875" stop-color="#589fff"/><stop offset="1.000" stop-color="#7a9cff"/></linearGradient><linearGradient id="fii10" gradientUnits="userSpaceOnUse" x1="1228.0" y1="0" x2="1382.0" y2="0"><stop offset="0.000" stop-color="#00aaff"/><stop offset="0.125" stop-color="#00a8ff"/><stop offset="0.250" stop-color="#00a5ff"/><stop offset="0.375" stop-color="#00a3ff"/><stop offset="0.500" stop-color="#01a0ff"/><stop offset="0.625" stop-color="#1d9dff"/><stop offset="0.750" stop-color="#3a9aff"/><stop offset="0.875" stop-color="#5a97ff"/><stop offset="1.000" stop-color="#7b94ff"/></linearGradient><linearGradient id="fii11" gradientUnits="userSpaceOnUse" x1="1228.0" y1="0" x2="1382.0" y2="0"><stop offset="0.000" stop-color="#00a3ff"/><stop offset="0.125" stop-color="#00a1ff"/><stop offset="0.250" stop-color="#009eff"/><stop offset="0.375" stop-color="#009cff"/><stop offset="0.500" stop-color="#0499ff"/><stop offset="0.625" stop-color="#1f96ff"/><stop offset="0.750" stop-color="#3d93ff"/><stop offset="0.875" stop-color="#5b8fff"/><stop offset="1.000" stop-color="#7c8cff"/></linearGradient><linearGradient id="fii12" gradientUnits="userSpaceOnUse" x1="1228.0" y1="0" x2="1382.0" y2="0"><stop offset="0.000" stop-color="#009dff"/><stop offset="0.125" stop-color="#009aff"/><stop offset="0.250" stop-color="#0098ff"/><stop offset="0.375" stop-color="#0095ff"/><stop offset="0.500" stop-color="#0792ff"/><stop offset="0.625" stop-color="#228fff"/><stop offset="0.750" stop-color="#3f8bff"/><stop offset="0.875" stop-color="#5d88ff"/><stop offset="1.000" stop-color="#7e84ff"/></linearGradient><linearGradient id="fii13" gradientUnits="userSpaceOnUse" x1="1228.0" y1="0" x2="1382.0" y2="0"><stop offset="0.000" stop-color="#0097ff"/><stop offset="0.125" stop-color="#0094ff"/><stop offset="0.250" stop-color="#0091ff"/><stop offset="0.375" stop-color="#008eff"/><stop offset="0.500" stop-color="#098bff"/><stop offset="0.625" stop-color="#2488ff"/><stop offset="0.750" stop-color="#4184ff"/><stop offset="0.875" stop-color="#5f80ff"/><stop offset="1.000" stop-color="#7f7cff"/></linearGradient><linearGradient id="fii14" gradientUnits="userSpaceOnUse" x1="1228.0" y1="0" x2="1382.0" y2="0"><stop offset="0.000" stop-color="#0090ff"/><stop offset="0.125" stop-color="#008dff"/><stop offset="0.250" stop-color="#008bff"/><stop offset="0.375" stop-color="#0087ff"/><stop offset="0.500" stop-color="#0c84ff"/><stop offset="0.625" stop-color="#2781ff"/><stop offset="0.750" stop-color="#437dff"/><stop offset="0.875" stop-color="#6179ff"/><stop offset="1.000" stop-color="#8075ff"/></linearGradient><linearGradient id="fii15" gradientUnits="userSpaceOnUse" x1="1228.0" y1="0" x2="1382.0" y2="0"><stop offset="0.000" stop-color="#008aff"/><stop offset="0.125" stop-color="#0087ff"/><stop offset="0.250" stop-color="#0084ff"/><stop offset="0.375" stop-color="#0081ff"/><stop offset="0.500" stop-color="#0f7eff"/><stop offset="0.625" stop-color="#297aff"/><stop offset="0.750" stop-color="#4576ff"/><stop offset="0.875" stop-color="#6272ff"/><stop offset="1.000" stop-color="#816eff"/></linearGradient><linearGradient id="fii16" gradientUnits="userSpaceOnUse" x1="1228.0" y1="0" x2="1382.0" y2="0"><stop offset="0.000" stop-color="#0084ff"/><stop offset="0.125" stop-color="#0081ff"/><stop offset="0.250" stop-color="#007eff"/><stop offset="0.375" stop-color="#007bff"/><stop offset="0.500" stop-color="#1177ff"/><stop offset="0.625" stop-color="#2b74ff"/><stop offset="0.750" stop-color="#4770ff"/><stop offset="0.875" stop-color="#646cff"/><stop offset="1.000" stop-color="#8267ff"/></linearGradient><linearGradient id="fii17" gradientUnits="userSpaceOnUse" x1="1228.0" y1="0" x2="1382.0" y2="0"><stop offset="0.000" stop-color="#007fff"/><stop offset="0.125" stop-color="#007bff"/><stop offset="0.250" stop-color="#0078ff"/><stop offset="0.375" stop-color="#0075ff"/><stop offset="0.500" stop-color="#1471ff"/><stop offset="0.625" stop-color="#2d6dff"/><stop offset="0.750" stop-color="#4969ff"/><stop offset="0.875" stop-color="#6565ff"/><stop offset="1.000" stop-color="#8460ff"/></linearGradient><linearGradient id="fii18" gradientUnits="userSpaceOnUse" x1="1228.0" y1="0" x2="1382.0" y2="0"><stop offset="0.000" stop-color="#0079ff"/><stop offset="0.125" stop-color="#0076ff"/><stop offset="0.250" stop-color="#0072ff"/><stop offset="0.375" stop-color="#006fff"/><stop offset="0.500" stop-color="#166bff"/><stop offset="0.625" stop-color="#2f67ff"/><stop offset="0.750" stop-color="#4a63ff"/><stop offset="0.875" stop-color="#675fff"/><stop offset="1.000" stop-color="#855aff"/></linearGradient><linearGradient id="fii19" gradientUnits="userSpaceOnUse" x1="1228.0" y1="0" x2="1382.0" y2="0"><stop offset="0.000" stop-color="#0073ff"/><stop offset="0.125" stop-color="#0070ff"/><stop offset="0.250" stop-color="#006dff"/><stop offset="0.375" stop-color="#0069ff"/><stop offset="0.500" stop-color="#1865ff"/><stop offset="0.625" stop-color="#3261ff"/><stop offset="0.750" stop-color="#4c5dff"/><stop offset="0.875" stop-color="#6858ff"/><stop offset="1.000" stop-color="#8654ff"/></linearGradient><linearGradient id="fii20" gradientUnits="userSpaceOnUse" x1="1228.0" y1="0" x2="1382.0" y2="0"><stop offset="0.000" stop-color="#006eff"/><stop offset="0.125" stop-color="#006bff"/><stop offset="0.250" stop-color="#0067ff"/><stop offset="0.375" stop-color="#0363ff"/><stop offset="0.500" stop-color="#1b5fff"/><stop offset="0.625" stop-color="#345bff"/><stop offset="0.750" stop-color="#4e57ff"/><stop offset="0.875" stop-color="#6a52ff"/><stop offset="1.000" stop-color="#874dff"/></linearGradient></defs><g clip-path="url(#fbbx)"><g clip-path="url(#fbhs)"><rect x="855.8" y="43.5" width="466.0" height="6.6" fill="url(#fbo0)"/><rect x="855.8" y="49.5" width="466.0" height="6.6" fill="url(#fbo1)"/><rect x="855.8" y="55.5" width="466.0" height="6.6" fill="url(#fbo2)"/><rect x="855.8" y="61.5" width="466.0" height="6.6" fill="url(#fbo3)"/><rect x="855.8" y="67.5" width="466.0" height="6.6" fill="url(#fbo4)"/><rect x="855.8" y="73.5" width="466.0" height="6.6" fill="url(#fbo5)"/><rect x="855.8" y="79.5" width="466.0" height="6.6" fill="url(#fbo6)"/><rect x="855.8" y="85.5" width="466.0" height="6.6" fill="url(#fbo7)"/><rect x="855.8" y="91.5" width="466.0" height="6.6" fill="url(#fbo8)"/><rect x="855.8" y="97.5" width="466.0" height="6.6" fill="url(#fbo9)"/><rect x="855.8" y="103.5" width="466.0" height="6.6" fill="url(#fbo10)"/><rect x="855.8" y="109.5" width="466.0" height="6.6" fill="url(#fbo11)"/><rect x="855.8" y="115.5" width="466.0" height="6.6" fill="url(#fbo12)"/><rect x="855.8" y="121.5" width="466.0" height="6.6" fill="url(#fbo13)"/><rect x="855.8" y="127.5" width="466.0" height="6.6" fill="url(#fbo14)"/><rect x="855.8" y="133.5" width="466.0" height="6.6" fill="url(#fbo15)"/><rect x="855.8" y="139.5" width="466.0" height="6.6" fill="url(#fbo16)"/><rect x="855.8" y="145.5" width="466.0" height="6.6" fill="url(#fbo17)"/><rect x="855.8" y="151.5" width="466.0" height="6.6" fill="url(#fbo18)"/><rect x="855.8" y="157.5" width="466.0" height="6.6" fill="url(#fbo19)"/><rect x="855.8" y="163.5" width="466.0" height="6.6" fill="url(#fbo20)"/><rect x="855.8" y="169.5" width="466.0" height="6.6" fill="url(#fbo21)"/><rect x="855.8" y="175.5" width="466.0" height="6.6" fill="url(#fbo22)"/><rect x="855.8" y="181.5" width="466.0" height="6.6" fill="url(#fbo23)"/><rect x="855.8" y="187.5" width="466.0" height="6.6" fill="url(#fbo24)"/><rect x="855.8" y="193.5" width="466.0" height="6.6" fill="url(#fbo25)"/><rect x="855.8" y="199.5" width="466.0" height="6.6" fill="url(#fbo26)"/><rect x="855.8" y="205.5" width="466.0" height="6.6" fill="url(#fbo27)"/><rect x="855.8" y="211.5" width="466.0" height="6.6" fill="url(#fbo28)"/><rect x="855.8" y="217.5" width="466.0" height="6.6" fill="url(#fbo29)"/><rect x="855.8" y="223.5" width="466.0" height="6.6" fill="url(#fbo30)"/><rect x="855.8" y="229.5" width="466.0" height="6.6" fill="url(#fbo31)"/><rect x="855.8" y="235.5" width="466.0" height="6.6" fill="url(#fbo32)"/><rect x="855.8" y="241.5" width="466.0" height="6.6" fill="url(#fbo33)"/><rect x="855.8" y="247.5" width="466.0" height="6.6" fill="url(#fbo34)"/><rect x="855.8" y="253.5" width="466.0" height="6.6" fill="url(#fbo35)"/><rect x="855.8" y="259.5" width="466.0" height="6.6" fill="url(#fbo36)"/><rect x="855.8" y="265.5" width="466.0" height="6.6" fill="url(#fbo37)"/><rect x="855.8" y="271.5" width="466.0" height="6.6" fill="url(#fbo38)"/><rect x="855.8" y="277.5" width="466.0" height="6.6" fill="url(#fbo39)"/><rect x="855.8" y="283.5" width="466.0" height="6.6" fill="url(#fbo40)"/><rect x="855.8" y="289.5" width="466.0" height="6.6" fill="url(#fbo41)"/><rect x="855.8" y="295.5" width="466.0" height="6.6" fill="url(#fbo42)"/><rect x="855.8" y="301.5" width="466.0" height="6.6" fill="url(#fbo43)"/><rect x="855.8" y="307.5" width="466.0" height="6.6" fill="url(#fbo44)"/><rect x="855.8" y="313.5" width="466.0" height="6.6" fill="url(#fbo45)"/><rect x="855.8" y="319.5" width="466.0" height="6.6" fill="url(#fbo46)"/><rect x="855.8" y="325.5" width="466.0" height="6.6" fill="url(#fbo47)"/><rect x="855.8" y="331.5" width="466.0" height="6.6" fill="url(#fbo48)"/><rect x="855.8" y="337.5" width="466.0" height="6.6" fill="url(#fbo49)"/><rect x="855.8" y="343.5" width="466.0" height="6.6" fill="url(#fbo50)"/><rect x="855.8" y="349.5" width="466.0" height="6.6" fill="url(#fbo51)"/><rect x="855.8" y="355.5" width="466.0" height="6.6" fill="url(#fbo52)"/><rect x="855.8" y="361.5" width="466.0" height="6.6" fill="url(#fbo53)"/><rect x="855.8" y="367.5" width="466.0" height="6.6" fill="url(#fbo54)"/><rect x="855.8" y="373.5" width="466.0" height="6.6" fill="url(#fbo55)"/><rect x="855.8" y="379.5" width="466.0" height="6.6" fill="url(#fbo56)"/><rect x="855.8" y="385.5" width="466.0" height="6.6" fill="url(#fbo57)"/><rect x="855.8" y="391.5" width="466.0" height="6.6" fill="url(#fbo58)"/><rect x="855.8" y="397.5" width="466.0" height="6.6" fill="url(#fbo59)"/><rect x="855.8" y="403.5" width="466.0" height="6.6" fill="url(#fbo60)"/><rect x="855.8" y="409.5" width="466.0" height="6.6" fill="url(#fbo61)"/><rect x="855.8" y="415.5" width="466.0" height="6.6" fill="url(#fbo62)"/><rect x="855.8" y="421.5" width="466.0" height="6.6" fill="url(#fbo63)"/><rect x="855.8" y="427.5" width="466.0" height="6.6" fill="url(#fbo64)"/><rect x="855.8" y="433.5" width="466.0" height="6.6" fill="url(#fbo65)"/><rect x="855.8" y="439.5" width="466.0" height="6.6" fill="url(#fbo66)"/><rect x="855.8" y="445.5" width="466.0" height="6.6" fill="url(#fbo67)"/><rect x="855.8" y="451.5" width="466.0" height="6.6" fill="url(#fbo68)"/><rect x="855.8" y="457.5" width="466.0" height="6.6" fill="url(#fbo69)"/></g><g clip-path="url(#fbtr)"><rect x="948.3" y="160.9" width="313.7" height="6.6" fill="url(#fbi0)"/><rect x="948.3" y="166.9" width="313.7" height="6.6" fill="url(#fbi1)"/><rect x="948.3" y="172.9" width="313.7" height="6.6" fill="url(#fbi2)"/><rect x="948.3" y="178.9" width="313.7" height="6.6" fill="url(#fbi3)"/><rect x="948.3" y="184.9" width="313.7" height="6.6" fill="url(#fbi4)"/><rect x="948.3" y="190.9" width="313.7" height="6.6" fill="url(#fbi5)"/><rect x="948.3" y="196.9" width="313.7" height="6.6" fill="url(#fbi6)"/><rect x="948.3" y="202.9" width="313.7" height="6.6" fill="url(#fbi7)"/><rect x="948.3" y="208.9" width="313.7" height="6.6" fill="url(#fbi8)"/><rect x="948.3" y="214.9" width="313.7" height="6.6" fill="url(#fbi9)"/><rect x="948.3" y="220.9" width="313.7" height="6.6" fill="url(#fbi10)"/><rect x="948.3" y="226.9" width="313.7" height="6.6" fill="url(#fbi11)"/><rect x="948.3" y="232.9" width="313.7" height="6.6" fill="url(#fbi12)"/><rect x="948.3" y="238.9" width="313.7" height="6.6" fill="url(#fbi13)"/><rect x="948.3" y="244.9" width="313.7" height="6.6" fill="url(#fbi14)"/><rect x="948.3" y="250.9" width="313.7" height="6.6" fill="url(#fbi15)"/><rect x="948.3" y="256.9" width="313.7" height="6.6" fill="url(#fbi16)"/><rect x="948.3" y="262.9" width="313.7" height="6.6" fill="url(#fbi17)"/><rect x="948.3" y="268.9" width="313.7" height="6.6" fill="url(#fbi18)"/><rect x="948.3" y="274.9" width="313.7" height="6.6" fill="url(#fbi19)"/><rect x="948.3" y="280.9" width="313.7" height="6.6" fill="url(#fbi20)"/><rect x="948.3" y="286.9" width="313.7" height="6.6" fill="url(#fbi21)"/><rect x="948.3" y="292.9" width="313.7" height="6.6" fill="url(#fbi22)"/><rect x="948.3" y="298.9" width="313.7" height="6.6" fill="url(#fbi23)"/><rect x="948.3" y="304.9" width="313.7" height="6.6" fill="url(#fbi24)"/><rect x="948.3" y="310.9" width="313.7" height="6.6" fill="url(#fbi25)"/><rect x="948.3" y="316.9" width="313.7" height="6.6" fill="url(#fbi26)"/><rect x="948.3" y="322.9" width="313.7" height="6.6" fill="url(#fbi27)"/><rect x="948.3" y="328.9" width="313.7" height="6.6" fill="url(#fbi28)"/><rect x="948.3" y="334.9" width="313.7" height="6.6" fill="url(#fbi29)"/><rect x="948.3" y="340.9" width="313.7" height="6.6" fill="url(#fbi30)"/><rect x="948.3" y="346.9" width="313.7" height="6.6" fill="url(#fbi31)"/><rect x="948.3" y="352.9" width="313.7" height="6.6" fill="url(#fbi32)"/><rect x="948.3" y="358.9" width="313.7" height="6.6" fill="url(#fbi33)"/><rect x="948.3" y="364.9" width="313.7" height="6.6" fill="url(#fbi34)"/><rect x="948.3" y="370.9" width="313.7" height="6.6" fill="url(#fbi35)"/><rect x="948.3" y="376.9" width="313.7" height="6.6" fill="url(#fbi36)"/><rect x="948.3" y="382.9" width="313.7" height="6.6" fill="url(#fbi37)"/><rect x="948.3" y="388.9" width="313.7" height="6.6" fill="url(#fbi38)"/><rect x="948.3" y="394.9" width="313.7" height="6.6" fill="url(#fbi39)"/><rect x="948.3" y="400.9" width="313.7" height="6.6" fill="url(#fbi40)"/><rect x="948.3" y="406.9" width="313.7" height="6.6" fill="url(#fbi41)"/><rect x="948.3" y="412.9" width="313.7" height="6.6" fill="url(#fbi42)"/><rect x="948.3" y="418.9" width="313.7" height="6.6" fill="url(#fbi43)"/><rect x="948.3" y="424.9" width="313.7" height="6.6" fill="url(#fbi44)"/><rect x="948.3" y="430.9" width="313.7" height="6.6" fill="url(#fbi45)"/></g></g><rect x="1224.9" y="46.2" width="160" height="129.8" fill="#303030"/><g clip-path="url(#fibx)"><g clip-path="url(#fihs)"><rect x="1228.0" y="50.0" width="154.0" height="6.6" fill="url(#fio0)"/><rect x="1228.0" y="56.0" width="154.0" height="6.6" fill="url(#fio1)"/><rect x="1228.0" y="62.0" width="154.0" height="6.6" fill="url(#fio2)"/><rect x="1228.0" y="68.0" width="154.0" height="6.6" fill="url(#fio3)"/><rect x="1228.0" y="74.0" width="154.0" height="6.6" fill="url(#fio4)"/><rect x="1228.0" y="80.0" width="154.0" height="6.6" fill="url(#fio5)"/><rect x="1228.0" y="86.0" width="154.0" height="6.6" fill="url(#fio6)"/><rect x="1228.0" y="92.0" width="154.0" height="6.6" fill="url(#fio7)"/><rect x="1228.0" y="98.0" width="154.0" height="6.6" fill="url(#fio8)"/><rect x="1228.0" y="104.0" width="154.0" height="6.6" fill="url(#fio9)"/><rect x="1228.0" y="110.0" width="154.0" height="6.6" fill="url(#fio10)"/><rect x="1228.0" y="116.0" width="154.0" height="6.6" fill="url(#fio11)"/><rect x="1228.0" y="122.0" width="154.0" height="6.6" fill="url(#fio12)"/><rect x="1228.0" y="128.0" width="154.0" height="6.6" fill="url(#fio13)"/><rect x="1228.0" y="134.0" width="154.0" height="6.6" fill="url(#fio14)"/><rect x="1228.0" y="140.0" width="154.0" height="6.6" fill="url(#fio15)"/><rect x="1228.0" y="146.0" width="154.0" height="6.6" fill="url(#fio16)"/><rect x="1228.0" y="152.0" width="154.0" height="6.6" fill="url(#fio17)"/><rect x="1228.0" y="158.0" width="154.0" height="6.6" fill="url(#fio18)"/><rect x="1228.0" y="164.0" width="154.0" height="6.6" fill="url(#fio19)"/><rect x="1228.0" y="170.0" width="154.0" height="6.6" fill="url(#fio20)"/></g><g clip-path="url(#fitr)"><rect x="1228.0" y="50.0" width="154.0" height="6.6" fill="url(#fii0)"/><rect x="1228.0" y="56.0" width="154.0" height="6.6" fill="url(#fii1)"/><rect x="1228.0" y="62.0" width="154.0" height="6.6" fill="url(#fii2)"/><rect x="1228.0" y="68.0" width="154.0" height="6.6" fill="url(#fii3)"/><rect x="1228.0" y="74.0" width="154.0" height="6.6" fill="url(#fii4)"/><rect x="1228.0" y="80.0" width="154.0" height="6.6" fill="url(#fii5)"/><rect x="1228.0" y="86.0" width="154.0" height="6.6" fill="url(#fii6)"/><rect x="1228.0" y="92.0" width="154.0" height="6.6" fill="url(#fii7)"/><rect x="1228.0" y="98.0" width="154.0" height="6.6" fill="url(#fii8)"/><rect x="1228.0" y="104.0" width="154.0" height="6.6" fill="url(#fii9)"/><rect x="1228.0" y="110.0" width="154.0" height="6.6" fill="url(#fii10)"/><rect x="1228.0" y="116.0" width="154.0" height="6.6" fill="url(#fii11)"/><rect x="1228.0" y="122.0" width="154.0" height="6.6" fill="url(#fii12)"/><rect x="1228.0" y="128.0" width="154.0" height="6.6" fill="url(#fii13)"/><rect x="1228.0" y="134.0" width="154.0" height="6.6" fill="url(#fii14)"/><rect x="1228.0" y="140.0" width="154.0" height="6.6" fill="url(#fii15)"/><rect x="1228.0" y="146.0" width="154.0" height="6.6" fill="url(#fii16)"/><rect x="1228.0" y="152.0" width="154.0" height="6.6" fill="url(#fii17)"/><rect x="1228.0" y="158.0" width="154.0" height="6.6" fill="url(#fii18)"/><rect x="1228.0" y="164.0" width="154.0" height="6.6" fill="url(#fii19)"/><rect x="1228.0" y="170.0" width="154.0" height="6.6" fill="url(#fii20)"/></g></g></svg>
<canvas id="cie" width="532" height="422" style="left:855.5px;top:42.6px;"></canvas>
<canvas id="ins" width="154" height="124" style="left:1228px;top:50px;"></canvas>
<svg width="1396" height="704" viewBox="0 0 1396 704">
<rect x="855.5" y="42.6" width="532" height="422" fill="none" stroke="#a3a3a3" stroke-width="1"/>
<rect x="1047.5" y="292.5" width="12.4" height="12.4" fill="none" stroke="#000" stroke-width="2.4"/>
<rect x="1049.1" y="294.1" width="9.2" height="9.2" fill="none" stroke="#fff" stroke-opacity="0.6" stroke-width="0.8"/>
<rect x="1102.7" y="275.1" width="12" height="12" fill="none" stroke="#fff" stroke-width="1.4"/>
<rect x="1090.1" y="279.1" width="12" height="12" fill="none" stroke="#fff" stroke-width="1.4"/>
<rect x="1007.9" y="324.2" width="12" height="12" fill="none" stroke="#fff" stroke-width="1.4"/>
<rect x="1064.8" y="243.6" width="12" height="12" fill="none" stroke="#fff" stroke-width="1.4"/>
<rect x="1019.3" y="330.7" width="12" height="12" fill="none" stroke="#fff" stroke-width="1.4"/>
<rect x="1016.1" y="276.1" width="12" height="12" fill="none" stroke="#fff" stroke-width="1.4"/>
<rect x="1173.5" y="254.1" width="12" height="12" fill="none" stroke="#fff" stroke-width="1.4"/>
<rect x="987.0" y="361.3" width="12" height="12" fill="none" stroke="#fff" stroke-width="1.4"/>
<rect x="1141.9" y="300.7" width="12" height="12" fill="none" stroke="#fff" stroke-width="1.4"/>
<rect x="1033.2" y="346.8" width="12" height="12" fill="none" stroke="#fff" stroke-width="1.4"/>
<rect x="1087.5" y="210.5" width="12" height="12" fill="none" stroke="#fff" stroke-width="1.4"/>
<rect x="1149.5" y="237.6" width="12" height="12" fill="none" stroke="#fff" stroke-width="1.4"/>
<rect x="971.2" y="386.9" width="12" height="12" fill="none" stroke="#fff" stroke-width="1.4"/>
<rect x="1042.7" y="212.5" width="12" height="12" fill="none" stroke="#fff" stroke-width="1.4"/>
<rect x="1189.3" y="298.7" width="12" height="12" fill="none" stroke="#fff" stroke-width="1.4"/>
<rect x="1132.4" y="220.0" width="12" height="12" fill="none" stroke="#fff" stroke-width="1.4"/>
<rect x="1086.3" y="333.8" width="12" height="12" fill="none" stroke="#fff" stroke-width="1.4"/>
<rect x="981.4" y="322.2" width="12" height="12" fill="none" stroke="#fff" stroke-width="1.4"/>
<circle cx="1043.4" cy="302.2" r="4" fill="#f5f5f5" stroke="#000" stroke-width="1.1"/>
<circle cx="1033.3" cy="312.7" r="4" fill="#e0e0e0" stroke="#000" stroke-width="1.1"/>
<circle cx="1028.9" cy="318.2" r="4" fill="#cfcfcf" stroke="#000" stroke-width="1.1"/>
<circle cx="1024.4" cy="323.2" r="4" fill="#b9b9b9" stroke="#000" stroke-width="1.1"/>
<circle cx="1021.3" cy="327.7" r="4" fill="#a0a0a0" stroke="#000" stroke-width="1.1"/>
<circle cx="1019.4" cy="335.2" r="4" fill="#000000" stroke="#000" stroke-width="1.1"/>
<circle cx="1063.0" cy="308.7" r="4" fill="#735244" stroke="#000" stroke-width="1.1"/>
<circle cx="1056.7" cy="311.2" r="4" fill="#c29682" stroke="#000" stroke-width="1.1"/>
<circle cx="989.7" cy="357.3" r="4" fill="#627a9d" stroke="#000" stroke-width="1.1"/>
<circle cx="1041.5" cy="281.6" r="4" fill="#576c43" stroke="#000" stroke-width="1.1"/>
<circle cx="996.6" cy="358.8" r="4" fill="#8580b1" stroke="#000" stroke-width="1.1"/>
<circle cx="1003.0" cy="315.7" r="4" fill="#67bdaa" stroke="#000" stroke-width="1.1"/>
<circle cx="1155.3" cy="262.6" r="4" fill="#d67e2c" stroke="#000" stroke-width="1.1"/>
<circle cx="975.1" cy="381.3" r="4" fill="#505ba6" stroke="#000" stroke-width="1.1"/>
<circle cx="1090.2" cy="328.2" r="4" fill="#c15a63" stroke="#000" stroke-width="1.1"/>
<circle cx="998.5" cy="376.3" r="4" fill="#5e3c6c" stroke="#000" stroke-width="1.1"/>
<circle cx="1078.8" cy="230.5" r="4" fill="#9dbc40" stroke="#000" stroke-width="1.1"/>
<circle cx="1136.3" cy="245.6" r="4" fill="#e0a32e" stroke="#000" stroke-width="1.1"/>
<circle cx="965.0" cy="398.9" r="4" fill="#383d96" stroke="#000" stroke-width="1.1"/>
<circle cx="1033.3" cy="249.1" r="4" fill="#469449" stroke="#000" stroke-width="1.1"/>
<circle cx="1140.7" cy="318.7" r="4" fill="#af363c" stroke="#000" stroke-width="1.1"/>
<circle cx="1129.4" cy="225.5" r="4" fill="#e7c71f" stroke="#000" stroke-width="1.1"/>
<circle cx="1039.0" cy="359.8" r="4" fill="#bb5695" stroke="#000" stroke-width="1.1"/>
<circle cx="976.4" cy="354.8" r="4" fill="#0085a3" stroke="#000" stroke-width="1.1"/>
<clipPath id="insclip"><rect x="1228" y="50" width="153.5" height="123.5"/></clipPath>
<g clip-path="url(#insclip)">
<rect x="1437.6" y="40.5" width="12.4" height="12.4" fill="none" stroke="#000" stroke-width="2.4"/>
<rect x="1439.2" y="42.1" width="9.2" height="9.2" fill="none" stroke="#fff" stroke-opacity="0.6" stroke-width="0.8"/>
<rect x="1553.7" y="3.2" width="12" height="12" fill="none" stroke="#fff" stroke-width="1.4"/>
<rect x="1527.1" y="11.8" width="12" height="12" fill="none" stroke="#fff" stroke-width="1.4"/>
<rect x="1353.9" y="108.4" width="12" height="12" fill="none" stroke="#fff" stroke-width="1.4"/>
<rect x="1473.8" y="-64.4" width="12" height="12" fill="none" stroke="#fff" stroke-width="1.4"/>
<rect x="1377.9" y="122.3" width="12" height="12" fill="none" stroke="#fff" stroke-width="1.4"/>
<rect x="1371.2" y="5.3" width="12" height="12" fill="none" stroke="#fff" stroke-width="1.4"/>
<rect x="1702.9" y="-41.9" width="12" height="12" fill="none" stroke="#fff" stroke-width="1.4"/>
<rect x="1310.0" y="187.8" width="12" height="12" fill="none" stroke="#fff" stroke-width="1.4"/>
<rect x="1636.3" y="57.9" width="12" height="12" fill="none" stroke="#fff" stroke-width="1.4"/>
<rect x="1407.2" y="156.6" width="12" height="12" fill="none" stroke="#fff" stroke-width="1.4"/>
<rect x="1521.7" y="-135.3" width="12" height="12" fill="none" stroke="#fff" stroke-width="1.4"/>
<rect x="1652.3" y="-77.3" width="12" height="12" fill="none" stroke="#fff" stroke-width="1.4"/>
<rect x="1276.7" y="242.5" width="12" height="12" fill="none" stroke="#fff" stroke-width="1.4"/>
<rect x="1427.2" y="-131.0" width="12" height="12" fill="none" stroke="#fff" stroke-width="1.4"/>
<rect x="1736.2" y="53.6" width="12" height="12" fill="none" stroke="#fff" stroke-width="1.4"/>
<rect x="1616.3" y="-114.9" width="12" height="12" fill="none" stroke="#fff" stroke-width="1.4"/>
<rect x="1519.1" y="128.7" width="12" height="12" fill="none" stroke="#fff" stroke-width="1.4"/>
<rect x="1298.0" y="104.1" width="12" height="12" fill="none" stroke="#fff" stroke-width="1.4"/>
<circle cx="1422.3" cy="54.3" r="4" fill="#f5f5f5" stroke="#000" stroke-width="1.1"/>
<circle cx="1401.0" cy="76.8" r="4" fill="#e0e0e0" stroke="#000" stroke-width="1.1"/>
<circle cx="1391.7" cy="88.6" r="4" fill="#cfcfcf" stroke="#000" stroke-width="1.1"/>
<circle cx="1382.4" cy="99.3" r="4" fill="#b9b9b9" stroke="#000" stroke-width="1.1"/>
<circle cx="1375.7" cy="109.0" r="4" fill="#a0a0a0" stroke="#000" stroke-width="1.1"/>
<circle cx="1371.7" cy="125.1" r="4" fill="#000000" stroke="#000" stroke-width="1.1"/>
<circle cx="1463.6" cy="68.2" r="4" fill="#735244" stroke="#000" stroke-width="1.1"/>
<circle cx="1450.3" cy="73.6" r="4" fill="#c29682" stroke="#000" stroke-width="1.1"/>
<circle cx="1309.1" cy="172.3" r="4" fill="#627a9d" stroke="#000" stroke-width="1.1"/>
<circle cx="1418.3" cy="10.3" r="4" fill="#576c43" stroke="#000" stroke-width="1.1"/>
<circle cx="1323.8" cy="175.5" r="4" fill="#8580b1" stroke="#000" stroke-width="1.1"/>
<circle cx="1337.1" cy="83.2" r="4" fill="#67bdaa" stroke="#000" stroke-width="1.1"/>
<circle cx="1658.1" cy="-30.5" r="4" fill="#d67e2c" stroke="#000" stroke-width="1.1"/>
<circle cx="1278.5" cy="223.8" r="4" fill="#505ba6" stroke="#000" stroke-width="1.1"/>
<circle cx="1520.9" cy="110.1" r="4" fill="#c15a63" stroke="#000" stroke-width="1.1"/>
<circle cx="1327.8" cy="213.1" r="4" fill="#5e3c6c" stroke="#000" stroke-width="1.1"/>
<circle cx="1496.9" cy="-99.2" r="4" fill="#9dbc40" stroke="#000" stroke-width="1.1"/>
<circle cx="1618.1" cy="-67.0" r="4" fill="#e0a32e" stroke="#000" stroke-width="1.1"/>
<circle cx="1257.2" cy="261.4" r="4" fill="#383d96" stroke="#000" stroke-width="1.1"/>
<circle cx="1401.0" cy="-59.5" r="4" fill="#469449" stroke="#000" stroke-width="1.1"/>
<circle cx="1627.4" cy="89.7" r="4" fill="#af363c" stroke="#000" stroke-width="1.1"/>
<circle cx="1603.5" cy="-109.9" r="4" fill="#e7c71f" stroke="#000" stroke-width="1.1"/>
<circle cx="1413.0" cy="177.7" r="4" fill="#bb5695" stroke="#000" stroke-width="1.1"/>
<circle cx="1281.2" cy="166.9" r="4" fill="#0085a3" stroke="#000" stroke-width="1.1"/>
</g>
<rect x="1227.5" y="49.5" width="154.5" height="124.5" fill="none" stroke="#a0a0a0" stroke-width="1"/>
<rect x="1156" y="430.4" width="228.5" height="23.2" fill="#353535"/>
<text x="1270.5" y="448" font-size="17" text-anchor="middle" fill="#f0f0f0" textLength="176" lengthAdjust="spacingAndGlyphs">RGB Triplet: 0, 133, 163</text>
</svg>
<script>
(function(){
var L=[[0.1741,0.0050],[0.1740,0.0050],[0.1738,0.0049],[0.1736,0.0049],[0.1733,0.0048],[0.1730,0.0048],[0.1726,0.0048],[0.1721,0.0048],[0.1714,0.0051],[0.1703,0.0058],[0.1689,0.0069],[0.1669,0.0086],[0.1644,0.0109],[0.1611,0.0138],[0.1566,0.0177],[0.1510,0.0227],[0.1440,0.0297],[0.1355,0.0399],[0.1241,0.0578],[0.1096,0.0868],[0.0913,0.1327],[0.0687,0.2007],[0.0454,0.2950],[0.0235,0.4127],[0.0082,0.5384],[0.0039,0.6548],[0.0139,0.7502],[0.0389,0.8120],[0.0743,0.8338],[0.1142,0.8262],[0.1547,0.8059],[0.1929,0.7816],[0.2296,0.7543],[0.2658,0.7243],[0.3016,0.6923],[0.3373,0.6589],[0.3731,0.6245],[0.4087,0.5896],[0.4441,0.5547],[0.4788,0.5202],[0.5125,0.4866],[0.5448,0.4544],[0.5752,0.4242],[0.6029,0.3965],[0.6270,0.3725],[0.6482,0.3514],[0.6658,0.3340],[0.6801,0.3197],[0.6915,0.3083],[0.7006,0.2993],[0.7079,0.2920],[0.7140,0.2859],[0.7190,0.2809],[0.7230,0.2770],[0.7260,0.2740],[0.7283,0.2717],[0.7300,0.2700],[0.7311,0.2689],[0.7320,0.2680],[0.7334,0.2666],[0.7347,0.2653]];
var TR=[[0.64,0.33],[0.30,0.60],[0.15,0.06]];
(function(){var N=[],n=L.length;for(var i=0;i<n-1;i++){var p0=L[Math.max(0,i-1)],p1=L[i],p2=L[i+1],p3=L[Math.min(n-1,i+2)];for(var k=0;k<8;k++){var t=k/8,t2=t*t,t3=t2*t;N.push([0.5*((2*p1[0])+(-p0[0]+p2[0])*t+(2*p0[0]-5*p1[0]+4*p2[0]-p3[0])*t2+(-p0[0]+3*p1[0]-3*p2[0]+p3[0])*t3),0.5*((2*p1[1])+(-p0[1]+p2[1])*t+(2*p0[1]-5*p1[1]+4*p2[1]-p3[1])*t2+(-p0[1]+3*p1[1]-3*p2[1]+p3[1])*t3)]);}}N.push(L[n-1]);L=N;})();
function g(c){c=c<0?0:(c>1?1:c);return c;}
function lin(x,y){var X=x/y,Z=(1-x-y)/y;return [3.2406*X-1.5372-0.4986*Z,-0.9689*X+1.8758+0.0415*Z,0.0557*X-0.2040+1.0570*Z];}
function bary(x,y){var x1=TR[0][0],y1=TR[0][1],x2=TR[1][0],y2=TR[1][1],x3=TR[2][0],y3=TR[2][1];
 var d=(y2-y3)*(x1-x3)+(x3-x2)*(y1-y3);var l1=((y2-y3)*(x-x3)+(x3-x2)*(y-y3))/d;var l2=((y3-y1)*(x-x3)+(x1-x3)*(y-y3))/d;return [l1,l2,1-l1-l2];}
function inside(x,y){var c=lin(x,y);var m=Math.max(c[0],c[1],c[2]);if(m<=0)m=1;
 var b=bary(x,y);var wr=b[0];var dim=1;if(wr>0.45){var t=(wr-0.45)/0.55;dim=1-0.32*t*t;}
 return [g(c[0]/m)*dim,g(c[1]/m)*dim,g(c[2]/m)*dim];}
function outside(x,y){var c=lin(x,y);for(var k=0;k<3;k++)if(c[k]<0)c[k]=0;var m=Math.max(c[0],c[1],c[2]);if(m<=0)m=1;
 var dx=x-0.3127,dy=y-0.329;var d=Math.sqrt(dx*dx+dy*dy);var rc=c[0]/m,gc=c[1]/m,bc=c[2]/m;var f=0.75-0.6*d-0.2*rc*(1-gc)*(1-bc);
 return [g(c[0]/m)*f,g(c[1]/m)*f,g(c[2]/m)*f];}
function draw(id,ox,oy,mx,my){
 var cv=document.getElementById(id);if(!cv||!cv.getContext)return;var ctx=cv.getContext('2d');var W=cv.width,H=cv.height;
 function layer(fn){var o=document.createElement('canvas');o.width=W;o.height=H;var c2=o.getContext('2d');var im=c2.createImageData(W,H);var d=im.data;
  for(var j=0;j<H;j++){var y=my(oy+j+0.5);if(y<0.002)y=0.002;for(var i=0;i<W;i++){var x=mx(ox+i+0.5);var c=fn(x,y);var p=(j*W+i)*4;d[p]=c[0]*255;d[p+1]=c[1]*255;d[p+2]=c[2]*255;d[p+3]=255;}}
  c2.putImageData(im,0,0);return o;}
 function path(P){ctx.beginPath();for(var k=0;k<P.length;k++){var X=(P[k][0]-mx(ox))/(mx(ox+1)-mx(ox)),Y=(P[k][1]-my(oy))/(my(oy+1)-my(oy));if(k==0)ctx.moveTo(X,Y);else ctx.lineTo(X,Y);}ctx.closePath();}
 ctx.save();path(L);ctx.clip();ctx.drawImage(layer(outside),0,0);ctx.restore();
 ctx.save();path(TR);ctx.clip();ctx.drawImage(layer(inside),0,0);ctx.restore();
}
draw('cie',855.5,42.6,function(p){return (p-855.5)/632;},function(p){return (463.5-p)/501;});
draw('ins',1228,50,function(p){return 0.208+(p-1304.8)/1330;},function(p){return 0.270-(p-110)/1065;});
})();

</script>
</body></html>
